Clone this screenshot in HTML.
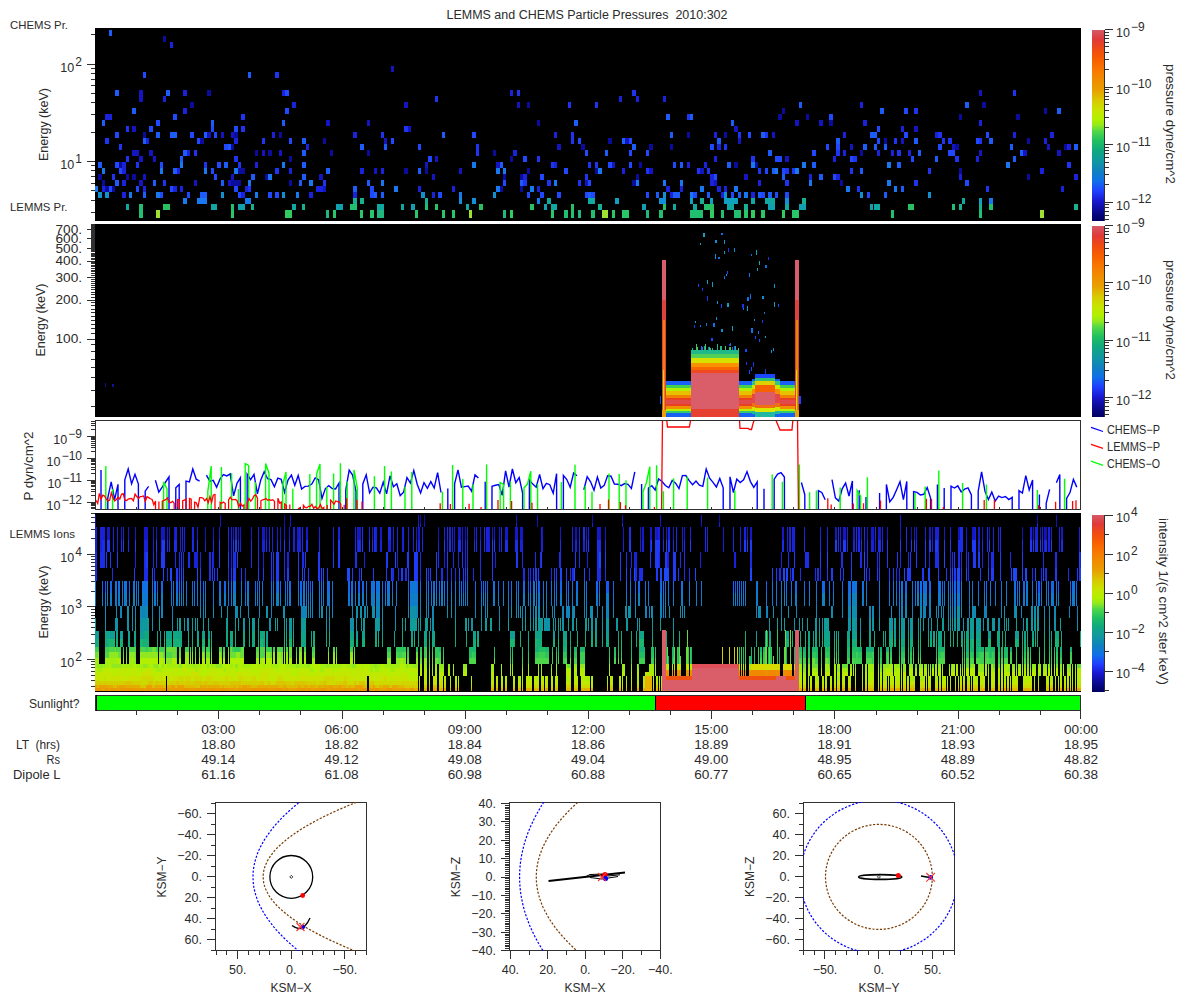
<!DOCTYPE html>
<html><head><meta charset="utf-8"><style>html,body{margin:0;padding:0;background:#fff;}svg{display:block;font-family:"Liberation Sans",sans-serif}</style></head>
<body><svg width="1200" height="1000" viewBox="0 0 1200 1000" font-family="Liberation Sans, sans-serif" shape-rendering="crispEdges">
<defs>
<linearGradient id="cm" x1="0" y1="0" x2="0" y2="1"><stop offset="0.000" stop-color="#d65a66"/><stop offset="0.050" stop-color="#e03a3a"/><stop offset="0.105" stop-color="#f04c10"/><stop offset="0.158" stop-color="#f86000"/><stop offset="0.210" stop-color="#f87800"/><stop offset="0.260" stop-color="#f08c00"/><stop offset="0.316" stop-color="#e8a000"/><stop offset="0.368" stop-color="#d8c800"/><stop offset="0.420" stop-color="#c8e400"/><stop offset="0.470" stop-color="#b0f000"/><stop offset="0.500" stop-color="#90e820"/><stop offset="0.530" stop-color="#50d848"/><stop offset="0.580" stop-color="#20c060"/><stop offset="0.632" stop-color="#10a880"/><stop offset="0.684" stop-color="#1098a0"/><stop offset="0.740" stop-color="#1080c0"/><stop offset="0.790" stop-color="#1070e8"/><stop offset="0.842" stop-color="#2040ff"/><stop offset="0.895" stop-color="#1818d0"/><stop offset="0.950" stop-color="#0a0a90"/><stop offset="1.000" stop-color="#000060"/></linearGradient>
<clipPath id="p3clip"><rect x="96" y="421" width="984" height="88"/></clipPath>
</defs>
<rect x="0" y="0" width="1200" height="1000" fill="#ffffff"/>
<text x="587" y="19" font-size="12.5" text-anchor="middle" textLength="281" lengthAdjust="spacingAndGlyphs" fill="#2b2b2b" xml:space="preserve">LEMMS and CHEMS Particle Pressures  2010:302</text>
<rect x="95" y="28" width="986" height="193" fill="#000"/>
<rect x="95" y="224" width="986" height="193" fill="#000"/>
<rect x="95" y="513" width="986" height="179" fill="#000"/><path fill="#1878f0" d="M95 186h3v6h-3zM102 168h3v6h-3zM129 192h3v6h-3zM156 192h4v6h-4zM160 168h3v6h-3zM180 162h3v6h-3zM204 168h3v6h-3zM234 168h4v6h-4zM248 180h3v6h-3zM255 192h3v6h-3zM268 174h4v6h-4zM282 162h3v6h-3zM296 192h3v6h-3zM309 180h4v6h-4zM381 180h3v6h-3zM394 186h4v6h-4zM459 192h3v6h-3zM472 162h4v6h-4zM496 186h4v6h-4zM496 168h4v6h-4zM503 168h3v6h-3zM530 186h4v6h-4zM554 180h3v6h-3zM598 168h4v6h-4zM636 180h3v6h-3zM663 180h3v6h-3zM680 180h3v6h-3zM690 192h3v6h-3zM700 186h4v6h-4zM734 186h4v6h-4zM744 192h4v6h-4zM751 162h4v6h-4zM775 168h3v6h-3zM795 168h4v6h-4zM802 162h4v6h-4zM809 180h3v6h-3zM846 186h4v6h-4zM887 180h4v6h-4zM887 162h4v6h-4zM894 186h3v6h-3zM1006 162h4v6h-4zM183 198h4v6h-4zM197 198h10v6h-10zM245 198h6v6h-6zM537 198h3v6h-3zM989 198h4v6h-4z"/>
<path fill="#1090d0" d="M98 192h4v6h-4zM105 192h4v6h-4zM221 192h3v6h-3zM282 192h3v6h-3zM421 192h4v6h-4zM493 192h3v6h-3zM663 192h3v6h-3zM724 192h3v6h-3zM860 192h3v6h-3zM928 192h3v6h-3z"/>
<path fill="#0c0c9c" d="M98 174h4v6h-4zM102 180h3v6h-3zM105 186h4v6h-4zM112 186h3v6h-3zM119 162h3v6h-3zM126 174h3v6h-3zM132 174h4v6h-4zM143 132h3v6h-3zM163 36h3v6h-3zM190 102h4v6h-4zM200 138h4v6h-4zM207 90h4v6h-4zM231 180h3v6h-3zM231 144h3v6h-3zM234 180h4v6h-4zM234 132h4v6h-4zM238 180h3v6h-3zM238 168h3v6h-3zM241 168h4v6h-4zM255 150h3v6h-3zM265 174h3v6h-3zM268 150h4v6h-4zM279 132h3v6h-3zM289 180h3v6h-3zM289 156h3v6h-3zM323 138h3v6h-3zM330 150h3v6h-3zM367 150h3v6h-3zM404 168h4v6h-4zM425 168h3v6h-3zM493 150h3v6h-3zM500 186h3v6h-3zM503 174h3v6h-3zM510 156h3v6h-3zM520 186h3v6h-3zM520 174h3v6h-3zM527 168h3v6h-3zM527 102h3v6h-3zM537 120h3v6h-3zM581 144h4v6h-4zM595 168h3v6h-3zM608 138h4v6h-4zM632 180h4v6h-4zM636 174h3v6h-3zM639 162h3v6h-3zM649 144h4v6h-4zM670 144h3v6h-3zM687 132h3v6h-3zM724 132h3v6h-3zM734 162h4v6h-4zM755 162h3v6h-3zM778 114h4v6h-4zM782 108h3v6h-3zM806 114h3v6h-3zM829 120h4v6h-4zM840 180h3v6h-3zM860 150h3v6h-3zM884 138h3v6h-3zM955 144h4v6h-4zM959 168h3v6h-3zM959 114h3v6h-3zM982 102h4v6h-4zM1016 114h4v6h-4zM1027 174h3v6h-3zM1027 138h3v6h-3zM1044 108h3v6h-3zM1064 144h3v6h-3z"/>
<path fill="#1c5cf8" d="M98 162h4v6h-4zM102 120h3v6h-3zM109 30h3v6h-3zM115 180h4v6h-4zM115 90h4v6h-4zM132 108h4v6h-4zM143 192h3v6h-3zM143 138h3v6h-3zM153 180h3v6h-3zM156 132h4v6h-4zM166 90h4v6h-4zM170 132h3v6h-3zM173 168h4v6h-4zM173 132h4v6h-4zM180 156h3v6h-3zM183 150h4v6h-4zM200 192h4v6h-4zM204 192h3v6h-3zM204 132h3v6h-3zM211 120h3v6h-3zM221 180h3v6h-3zM224 162h4v6h-4zM228 144h3v6h-3zM248 72h3v6h-3zM251 174h4v6h-4zM282 120h3v6h-3zM299 180h3v6h-3zM302 174h4v6h-4zM302 162h4v6h-4zM302 150h4v6h-4zM302 138h4v6h-4zM326 168h4v6h-4zM353 186h4v6h-4zM360 144h4v6h-4zM367 180h3v6h-3zM374 192h3v6h-3zM381 192h3v6h-3zM384 144h3v6h-3zM418 168h3v6h-3zM442 132h3v6h-3zM500 162h3v6h-3zM520 180h3v6h-3zM574 120h4v6h-4zM588 192h3v6h-3zM605 150h3v6h-3zM622 138h3v6h-3zM632 144h4v6h-4zM656 192h3v6h-3zM666 114h4v6h-4zM670 132h3v6h-3zM673 192h3v6h-3zM676 192h4v6h-4zM680 162h3v6h-3zM690 114h3v6h-3zM707 192h3v6h-3zM717 138h4v6h-4zM727 162h4v6h-4zM731 120h3v6h-3zM738 192h3v6h-3zM758 192h3v6h-3zM761 132h4v6h-4zM768 192h4v6h-4zM768 150h4v6h-4zM772 168h3v6h-3zM782 174h3v6h-3zM799 102h3v6h-3zM812 162h4v6h-4zM819 174h4v6h-4zM836 138h4v6h-4zM860 168h3v6h-3zM863 144h4v6h-4zM870 132h4v6h-4zM874 144h3v6h-3zM874 132h3v6h-3zM880 108h4v6h-4zM884 192h3v6h-3zM884 144h3v6h-3zM897 162h4v6h-4zM901 186h3v6h-3zM914 138h4v6h-4zM918 150h3v6h-3zM935 156h3v6h-3zM965 102h4v6h-4zM989 138h4v6h-4zM1010 144h3v6h-3zM1013 156h3v6h-3zM1020 150h3v6h-3zM1057 108h4v6h-4zM1074 144h4v6h-4z"/>
<path fill="#1a22dc" d="M102 186h3v6h-3zM105 114h4v6h-4zM109 114h3v6h-3zM122 192h4v6h-4zM122 180h4v6h-4zM122 168h4v6h-4zM122 162h4v6h-4zM143 186h3v6h-3zM146 138h3v6h-3zM163 96h3v6h-3zM170 42h3v6h-3zM173 186h4v6h-4zM177 168h3v6h-3zM180 186h3v6h-3zM183 108h4v6h-4zM183 90h4v6h-4zM187 150h3v6h-3zM234 138h4v6h-4zM241 192h4v6h-4zM245 186h3v6h-3zM255 162h3v6h-3zM272 132h3v6h-3zM282 90h3v6h-3zM289 168h3v6h-3zM292 102h4v6h-4zM306 144h3v6h-3zM309 192h4v6h-4zM316 186h3v6h-3zM319 186h4v6h-4zM353 192h4v6h-4zM353 132h4v6h-4zM360 168h4v6h-4zM381 168h3v6h-3zM418 186h3v6h-3zM432 192h3v6h-3zM452 186h3v6h-3zM510 90h3v6h-3zM513 150h4v6h-4zM523 174h4v6h-4zM537 186h3v6h-3zM554 162h3v6h-3zM554 132h3v6h-3zM619 96h3v6h-3zM622 168h3v6h-3zM636 96h3v6h-3zM663 96h3v6h-3zM666 186h4v6h-4zM670 192h3v6h-3zM680 186h3v6h-3zM687 162h3v6h-3zM704 162h3v6h-3zM710 180h4v6h-4zM710 174h4v6h-4zM714 156h3v6h-3zM714 132h3v6h-3zM717 186h4v6h-4zM717 144h4v6h-4zM721 192h3v6h-3zM724 186h3v6h-3zM751 192h4v6h-4zM758 180h3v6h-3zM809 174h3v6h-3zM833 156h3v6h-3zM836 174h4v6h-4zM843 150h3v6h-3zM843 132h3v6h-3zM860 102h3v6h-3zM863 120h4v6h-4zM877 150h3v6h-3zM891 150h3v6h-3zM901 126h3v6h-3zM908 150h3v6h-3zM935 132h3v6h-3zM959 174h3v6h-3zM976 156h3v6h-3zM979 120h3v6h-3zM1013 132h3v6h-3zM1040 168h4v6h-4zM1044 138h3v6h-3zM1050 132h4v6h-4zM1061 186h3v6h-3zM1067 144h4v6h-4zM1074 174h4v6h-4z"/>
<path fill="#1e34f0" d="M105 138h4v6h-4zM112 174h3v6h-3zM119 144h3v6h-3zM126 156h3v6h-3zM126 126h3v6h-3zM136 162h3v6h-3zM163 180h3v6h-3zM194 150h3v6h-3zM204 162h3v6h-3zM234 156h4v6h-4zM238 162h3v6h-3zM241 126h4v6h-4zM241 114h4v6h-4zM248 186h3v6h-3zM262 138h3v6h-3zM275 168h4v6h-4zM275 72h4v6h-4zM323 180h3v6h-3zM381 132h3v6h-3zM404 126h4v6h-4zM435 96h3v6h-3zM476 150h3v6h-3zM476 144h3v6h-3zM517 90h3v6h-3zM523 180h4v6h-4zM537 156h3v6h-3zM547 180h4v6h-4zM551 162h3v6h-3zM568 102h3v6h-3zM571 138h3v6h-3zM571 132h3v6h-3zM578 180h3v6h-3zM585 174h3v6h-3zM588 162h3v6h-3zM595 162h3v6h-3zM595 102h3v6h-3zM632 90h4v6h-4zM646 168h3v6h-3zM687 114h3v6h-3zM697 168h3v6h-3zM707 168h3v6h-3zM724 144h3v6h-3zM738 132h3v6h-3zM751 156h4v6h-4zM758 168h3v6h-3zM765 132h3v6h-3zM785 180h4v6h-4zM785 168h4v6h-4zM792 168h3v6h-3zM836 150h4v6h-4zM850 168h3v6h-3zM853 156h4v6h-4zM857 186h3v6h-3zM894 138h3v6h-3zM897 150h4v6h-4zM914 180h4v6h-4zM914 108h4v6h-4zM928 168h3v6h-3zM938 132h4v6h-4zM942 138h3v6h-3zM948 138h4v6h-4zM955 156h4v6h-4zM979 138h3v6h-3zM986 186h3v6h-3zM1013 90h3v6h-3zM1067 162h4v6h-4z"/>
<path fill="#2048ff" d="M109 186h3v6h-3zM115 162h4v6h-4zM115 132h4v6h-4zM119 168h3v6h-3zM136 186h3v6h-3zM143 72h3v6h-3zM149 126h4v6h-4zM156 120h4v6h-4zM160 192h3v6h-3zM160 162h3v6h-3zM170 186h3v6h-3zM173 114h4v6h-4zM187 192h3v6h-3zM190 132h4v6h-4zM197 138h3v6h-3zM211 168h3v6h-3zM211 126h3v6h-3zM214 174h3v6h-3zM214 132h3v6h-3zM217 162h4v6h-4zM224 144h4v6h-4zM234 186h4v6h-4zM234 126h4v6h-4zM238 192h3v6h-3zM268 192h4v6h-4zM275 192h4v6h-4zM285 108h4v6h-4zM285 90h4v6h-4zM289 138h3v6h-3zM370 192h4v6h-4zM370 186h4v6h-4zM391 138h3v6h-3zM418 144h3v6h-3zM428 156h4v6h-4zM438 192h4v6h-4zM472 132h4v6h-4zM503 180h3v6h-3zM523 156h4v6h-4zM527 192h3v6h-3zM540 192h4v6h-4zM540 174h4v6h-4zM557 192h4v6h-4zM564 168h4v6h-4zM578 138h3v6h-3zM585 192h3v6h-3zM585 150h3v6h-3zM588 180h3v6h-3zM591 192h4v6h-4zM608 162h4v6h-4zM629 162h3v6h-3zM629 150h3v6h-3zM629 138h3v6h-3zM646 192h3v6h-3zM646 150h3v6h-3zM673 162h3v6h-3zM693 192h4v6h-4zM710 144h4v6h-4zM714 174h3v6h-3zM731 192h3v6h-3zM748 132h3v6h-3zM761 192h4v6h-4zM765 168h3v6h-3zM775 192h3v6h-3zM775 156h3v6h-3zM778 156h4v6h-4zM782 168h3v6h-3zM785 192h4v6h-4zM812 150h4v6h-4zM826 144h3v6h-3zM829 114h4v6h-4zM833 174h3v6h-3zM836 144h4v6h-4zM850 156h3v6h-3zM867 192h3v6h-3zM877 138h3v6h-3zM877 126h3v6h-3zM904 132h4v6h-4zM904 108h4v6h-4zM911 156h3v6h-3zM938 144h4v6h-4zM948 150h4v6h-4zM952 150h3v6h-3zM965 180h4v6h-4zM976 138h3v6h-3zM986 132h3v6h-3z"/>
<path fill="#1414c0" d="M132 150h4v6h-4zM132 126h4v6h-4zM136 150h3v6h-3zM139 180h4v6h-4zM139 156h4v6h-4zM139 96h4v6h-4zM139 90h4v6h-4zM143 174h3v6h-3zM149 150h4v6h-4zM153 156h3v6h-3zM194 180h3v6h-3zM207 132h4v6h-4zM221 132h3v6h-3zM228 180h3v6h-3zM231 174h3v6h-3zM231 132h3v6h-3zM262 150h3v6h-3zM279 150h3v6h-3zM319 174h4v6h-4zM323 186h3v6h-3zM326 120h4v6h-4zM367 120h3v6h-3zM374 168h3v6h-3zM384 138h3v6h-3zM391 66h3v6h-3zM404 102h4v6h-4zM408 126h3v6h-3zM425 162h3v6h-3zM432 174h3v6h-3zM435 156h3v6h-3zM459 168h3v6h-3zM496 162h4v6h-4zM517 102h3v6h-3zM557 144h4v6h-4zM585 180h3v6h-3zM612 162h3v6h-3zM625 138h4v6h-4zM649 168h4v6h-4zM700 168h4v6h-4zM714 180h3v6h-3zM734 126h4v6h-4zM738 138h3v6h-3zM744 174h4v6h-4zM772 132h3v6h-3zM785 156h4v6h-4zM795 120h4v6h-4zM819 120h4v6h-4zM850 144h3v6h-3zM901 138h3v6h-3zM914 126h4v6h-4zM952 144h3v6h-3zM979 150h3v6h-3zM979 90h3v6h-3zM1023 150h4v6h-4zM1047 144h3v6h-3zM1057 150h4v6h-4z"/>
<path fill="#20c070" d="M139 210h4v8h-4zM564 210h4v8h-4zM571 210h3v8h-3zM591 210h4v8h-4zM659 210h4v8h-4zM690 210h10v8h-10zM700 210h3v8h-3zM721 210h3v8h-3zM734 210h7v8h-7zM891 210h3v8h-3zM979 210h3v8h-3zM139 204h4v6h-4zM231 204h3v6h-3zM350 204h7v6h-7zM425 204h3v6h-3zM704 204h3v6h-3zM952 204h3v6h-3zM989 204h4v6h-4z"/>
<path fill="#a0e030" d="M156 210h4v8h-4zM469 210h3v8h-3zM602 210h6v8h-6zM1040 210h4v8h-4z"/>
<path fill="#28c868" d="M231 210h3v8h-3zM333 210h3v8h-3zM360 210h3v8h-3zM370 210h4v8h-4zM415 210h3v8h-3zM442 210h3v8h-3zM452 210h3v8h-3zM551 210h3v8h-3zM612 210h3v8h-3zM622 210h7v8h-7zM744 210h4v8h-4zM761 210h4v8h-4zM792 210h7v8h-7z"/>
<path fill="#30cc60" d="M285 210h7v8h-7zM510 210h3v8h-3zM710 210h4v8h-4zM751 210h4v8h-4zM782 210h3v8h-3z"/>
<path fill="#20b880" d="M326 210h3v8h-3zM377 210h7v8h-7zM503 210h3v8h-3zM578 210h3v8h-3zM646 210h3v8h-3z"/>
<path fill="#10a8a0" d="M126 204h3v6h-3zM211 204h6v6h-6zM292 204h4v6h-4zM377 204h7v6h-7zM401 204h3v6h-3zM466 204h3v6h-3zM551 204h6v6h-6zM673 204h3v6h-3zM693 204h4v6h-4zM727 204h7v6h-7zM785 204h4v6h-4zM874 204h6v6h-6zM547 198h4v6h-4zM588 198h7v6h-7zM751 198h4v6h-4zM765 198h10v6h-10zM962 198h3v6h-3z"/>
<path fill="#28c060" d="M163 204h7v6h-7zM435 204h3v6h-3zM479 204h4v6h-4zM530 204h4v6h-4zM571 204h3v6h-3zM663 204h3v6h-3zM707 204h7v6h-7zM908 204h6v6h-6z"/>
<path fill="#10a0b0" d="M238 204h7v6h-7zM336 204h7v6h-7zM411 204h4v6h-4zM544 204h3v6h-3zM642 204h4v6h-4zM768 204h7v6h-7zM799 204h7v6h-7zM870 204h3v6h-3z"/>
<path fill="#18b090" d="M251 204h3v6h-3zM302 204h3v6h-3zM598 204h4v6h-4zM744 204h4v6h-4zM959 204h3v6h-3zM979 204h3v6h-3zM1074 204h4v6h-4zM353 198h4v6h-4zM360 198h4v6h-4zM425 198h3v6h-3zM700 198h4v6h-4zM802 198h4v6h-4z"/>
<path fill="#1090d8" d="M459 198h3v6h-3zM472 198h4v6h-4zM659 198h7v6h-7zM785 198h4v6h-4z"/>
<path fill="#10a0c0" d="M615 198h4v6h-4zM690 198h3v6h-3zM710 198h3v6h-3zM724 198h14v6h-14zM979 198h3v6h-3z"/>
<path fill="#10109a" d="M105 383h1v4h-1zM112 384h2v3h-2z"/>
<path fill="#1848ff" d="M755 336h1v3h-1zM721 304h1v4h-1z"/>
<path fill="#1070e8" d="M724 276h1v3h-1zM721 233h2v2h-2z"/>
<path fill="#2030f0" d="M765 369h1v5h-1z"/>
<path fill="#1070e8" d="M758 331h1v3h-1z"/>
<path fill="#1090d0" d="M773 348h1v3h-1z"/>
<path fill="#1070e8" d="M750 294h1v5h-1z"/>
<path fill="#1848ff" d="M778 304h1v3h-1z"/>
<path fill="#2030f0" d="M694 325h1v3h-1z"/>
<path fill="#10a0c0" d="M765 336h1v2h-1zM759 261h1v4h-1z"/>
<path fill="#1090d0" d="M726 274h1v2h-1z"/>
<path fill="#1070e8" d="M730 343h1v3h-1zM764 312h1v2h-1zM700 325h1v2h-1z"/>
<path fill="#1090d0" d="M724 251h1v3h-1z"/>
<path fill="#1070e8" d="M751 254h1v2h-1z"/>
<path fill="#1090d0" d="M717 301h1v3h-1z"/>
<path fill="#2030f0" d="M742 304h2v4h-2zM707 296h1v5h-1zM768 257h1v3h-1zM743 305h1v5h-1z"/>
<path fill="#1070e8" d="M743 308h1v2h-1z"/>
<path fill="#1090d0" d="M774 284h1v4h-1z"/>
<path fill="#1070e8" d="M749 273h1v4h-1zM747 297h2v4h-2z"/>
<path fill="#10a0c0" d="M695 321h1v2h-1zM774 302h1v5h-1z"/>
<path fill="#1090d0" d="M716 317h1v3h-1zM715 240h2v3h-2z"/>
<path fill="#10a0c0" d="M732 326h1v5h-1z"/>
<path fill="#1090d0" d="M721 329h2v3h-2z"/>
<path fill="#10a0c0" d="M707 280h1v4h-1zM703 233h2v4h-2z"/>
<path fill="#1090d0" d="M724 240h1v4h-1z"/>
<path fill="#1848ff" d="M759 339h1v3h-1zM727 271h1v3h-1z"/>
<path fill="#10a0c0" d="M757 268h1v3h-1z"/>
<path fill="#2030f0" d="M753 362h1v5h-1z"/>
<path fill="#1090d0" d="M771 350h1v3h-1z"/>
<path fill="#2030f0" d="M702 288h1v3h-1z"/>
<path fill="#1848ff" d="M745 349h2v3h-2z"/>
<path fill="#1070e8" d="M751 328h2v5h-2z"/>
<path fill="#1848ff" d="M749 370h1v4h-1z"/>
<path fill="#1070e8" d="M718 257h2v2h-2z"/>
<path fill="#1848ff" d="M711 338h2v3h-2z"/>
<path fill="#10a0c0" d="M756 250h1v5h-1z"/>
<path fill="#1090d0" d="M734 248h1v4h-1z"/>
<path fill="#1848ff" d="M698 284h1v3h-1z"/>
<path fill="#10a0c0" d="M727 303h2v4h-2z"/>
<path fill="#2030f0" d="M762 320h1v3h-1z"/>
<path fill="#1090d0" d="M754 319h1v2h-1z"/>
<path fill="#10a0c0" d="M712 282h1v5h-1z"/>
<path fill="#1090d0" d="M715 254h1v5h-1z"/>
<path fill="#2030f0" d="M728 248h1v4h-1zM729 344h1v2h-1z"/>
<path fill="#1090d0" d="M762 296h2v3h-2z"/>
<path fill="#10a0c0" d="M700 243h1v2h-1z"/>
<path fill="#1070e8" d="M713 323h2v4h-2z"/>
<path fill="#2030f0" d="M746 362h1v3h-1z"/>
<path fill="#1070e8" d="M706 323h1v3h-1zM765 265h2v3h-2z"/>
<path fill="#10a0c0" d="M747 306h1v5h-1z"/>
<path fill="#1848ff" d="M751 367h1v4h-1z"/>
<path fill="#1a60f8" d="M666 381h25v4h-25z"/>
<path fill="#40d050" d="M666 385h25v3h-25z"/>
<path fill="#b0f000" d="M666 388h25v3h-25z"/>
<path fill="#e8c000" d="M666 391h25v4h-25z"/>
<path fill="#f08000" d="M666 395h25v3h-25z"/>
<path fill="#e84020" d="M666 398h25v2h-25z"/>
<path fill="#e04a4a" d="M666 400h25v4h-25z"/>
<path fill="#e84020" d="M666 404h25v2h-25z"/>
<path fill="#f09000" d="M666 406h25v3h-25z"/>
<path fill="#b8f000" d="M666 409h25v2h-25z"/>
<path fill="#30c870" d="M666 411h25v2h-25z"/>
<path fill="#1860f0" d="M666 413h25v4h-25z"/>
<path fill="#1a60f8" d="M739 381h13v4h-13z"/>
<path fill="#40d050" d="M739 385h13v3h-13z"/>
<path fill="#b0f000" d="M739 388h13v3h-13z"/>
<path fill="#e8c000" d="M739 391h13v4h-13z"/>
<path fill="#f08000" d="M739 395h13v3h-13z"/>
<path fill="#e84020" d="M739 398h13v2h-13z"/>
<path fill="#e04a4a" d="M739 400h13v4h-13z"/>
<path fill="#e84020" d="M739 404h13v2h-13z"/>
<path fill="#f09000" d="M739 406h13v3h-13z"/>
<path fill="#b8f000" d="M739 409h13v2h-13z"/>
<path fill="#30c870" d="M739 411h13v2h-13z"/>
<path fill="#1860f0" d="M739 413h13v4h-13z"/>
<path fill="#1a60f8" d="M780 381h15v4h-15z"/>
<path fill="#40d050" d="M780 385h15v3h-15z"/>
<path fill="#b0f000" d="M780 388h15v3h-15z"/>
<path fill="#e8c000" d="M780 391h15v4h-15z"/>
<path fill="#f08000" d="M780 395h15v3h-15z"/>
<path fill="#e84020" d="M780 398h15v2h-15z"/>
<path fill="#e04a4a" d="M780 400h15v4h-15z"/>
<path fill="#e84020" d="M780 404h15v2h-15z"/>
<path fill="#f09000" d="M780 406h15v3h-15z"/>
<path fill="#b8f000" d="M780 409h15v2h-15z"/>
<path fill="#30c870" d="M780 411h15v2h-15z"/>
<path fill="#1860f0" d="M780 413h15v4h-15z"/>
<path fill="#20b888" d="M691 350h48v4h-48z"/>
<path fill="#50d058" d="M691 354h48v4h-48z"/>
<path fill="#d8e000" d="M691 358h48v5h-48z"/>
<path fill="#f89000" d="M691 363h48v4h-48z"/>
<path fill="#f86800" d="M691 367h48v3h-48z"/>
<path fill="#f04820" d="M691 370h48v3h-48z"/>
<path fill="#d95e6a" d="M691 373h48v36h-48z"/>
<path fill="#e84030" d="M691 409h48v8h-48z"/>
<path fill="#20b888" d="M692 348h1v2h-1z"/>
<path fill="#40c860" d="M696 344h1v6h-1zM697 347h1v3h-1z"/>
<path fill="#1870f0" d="M701 346h1v4h-1zM702 347h1v3h-1z"/>
<path fill="#20b888" d="M704 346h1v4h-1z"/>
<path fill="#40c860" d="M705 344h1v6h-1z"/>
<path fill="#1870f0" d="M708 347h1v3h-1z"/>
<path fill="#40c860" d="M709 347h1v3h-1z"/>
<path fill="#20b888" d="M710 348h1v2h-1zM712 348h1v2h-1zM717 344h1v6h-1zM720 346h1v4h-1zM721 346h1v4h-1z"/>
<path fill="#40c860" d="M725 346h1v4h-1z"/>
<path fill="#20b888" d="M729 347h1v3h-1z"/>
<path fill="#40c860" d="M730 347h1v3h-1z"/>
<path fill="#1870f0" d="M732 347h1v3h-1zM734 346h1v4h-1z"/>
<path fill="#20b888" d="M735 346h1v4h-1z"/>
<path fill="#40c860" d="M738 348h1v2h-1z"/>
<path fill="#1860f0" d="M752 379h3v2h-3z"/>
<path fill="#30c880" d="M752 381h3v4h-3z"/>
<path fill="#c8e800" d="M752 385h3v4h-3z"/>
<path fill="#f89000" d="M752 389h3v5h-3z"/>
<path fill="#e44848" d="M752 394h3v9h-3z"/>
<path fill="#f07010" d="M752 403h3v4h-3z"/>
<path fill="#d0e800" d="M752 407h3v4h-3z"/>
<path fill="#20b8a0" d="M752 411h3v3h-3z"/>
<path fill="#1860f0" d="M752 414h3v3h-3zM775 379h5v2h-5z"/>
<path fill="#30c880" d="M775 381h5v4h-5z"/>
<path fill="#c8e800" d="M775 385h5v4h-5z"/>
<path fill="#f89000" d="M775 389h5v5h-5z"/>
<path fill="#e44848" d="M775 394h5v9h-5z"/>
<path fill="#f07010" d="M775 403h5v4h-5z"/>
<path fill="#d0e800" d="M775 407h5v4h-5z"/>
<path fill="#20b8a0" d="M775 411h5v3h-5z"/>
<path fill="#1860f0" d="M775 414h5v3h-5z"/>
<path fill="#1848ff" d="M755 374h20v4h-20z"/>
<path fill="#30c070" d="M755 378h20v3h-20z"/>
<path fill="#e0d000" d="M755 381h20v4h-20z"/>
<path fill="#f86000" d="M755 385h20v7h-20z"/>
<path fill="#d95e6a" d="M755 392h20v13h-20z"/>
<path fill="#f07010" d="M755 405h20v3h-20z"/>
<path fill="#d8e800" d="M755 408h20v4h-20z"/>
<path fill="#20b8a0" d="M755 412h20v5h-20z"/>
<path fill="#d95e6a" d="M662 260h4v120h-4z"/>
<path fill="#e04040" d="M662 300h4v110h-4z"/>
<path fill="#f08000" d="M663 320h2v90h-2z"/>
<path fill="#d8e000" d="M663 370h1v47h-1z"/>
<path fill="#f0a000" d="M662 410h4v7h-4z"/>
<path fill="#1848ff" d="M660 396h1v8h-1z"/>
<path fill="#d95e6a" d="M795 260h4v120h-4z"/>
<path fill="#e04040" d="M795 300h4v110h-4z"/>
<path fill="#f08000" d="M796 320h2v90h-2z"/>
<path fill="#d8e000" d="M796 370h1v47h-1z"/>
<path fill="#f0a000" d="M795 410h4v7h-4z"/>
<path fill="#1848ff" d="M799 396h2v8h-2z"/>
<path fill="#c9e200" d="M95 676h3v5h-3zM111 676h2v5h-2zM113 676h3v5h-3zM116 676h6v5h-6zM122 676h2v5h-2zM128 676h6v5h-6zM134 676h1v5h-1zM135 676h6v5h-6zM162 676h3v5h-3zM172 676h2v5h-2zM174 676h1v5h-1zM175 676h3v5h-3zM191 676h4v5h-4zM198 676h1v5h-1zM202 676h4v5h-4zM212 676h1v5h-1zM213 676h2v5h-2zM219 676h4v5h-4zM223 676h2v5h-2zM228 676h3v5h-3zM231 676h2v5h-2zM237 676h2v5h-2zM243 676h1v5h-1zM244 676h1v5h-1zM246 676h6v5h-6zM258 676h4v5h-4zM262 676h6v5h-6zM290 676h4v5h-4zM298 676h3v5h-3zM301 676h2v5h-2zM303 676h1v5h-1zM304 676h4v5h-4zM308 676h4v5h-4zM312 676h3v5h-3zM315 676h3v5h-3zM318 676h6v5h-6zM335 676h3v5h-3zM338 676h6v5h-6zM347 676h3v5h-3zM351 676h4v5h-4zM369 676h4v5h-4zM380 676h4v5h-4zM386 676h2v5h-2zM388 676h3v5h-3zM394 676h3v5h-3zM398 676h6v5h-6zM405 676h3v5h-3zM405 681h1v4h-1zM409 681h1v4h-1zM424 681h3v4h-3zM429 681h1v4h-1zM433 681h4v4h-4zM439 681h1v4h-1zM445 681h1v4h-1zM450 681h1v4h-1zM458 681h1v4h-1zM491 681h1v4h-1zM496 681h2v4h-2zM505 681h2v4h-2zM514 681h1v4h-1zM522 681h1v4h-1zM526 681h4v4h-4zM541 681h3v4h-3zM547 681h1v4h-1zM567 681h4v4h-4zM610 681h3v4h-3zM626 681h1v4h-1zM643 681h3v4h-3zM647 681h2v4h-2zM653 681h1v4h-1zM659 681h1v4h-1zM799 681h3v4h-3zM815 681h1v4h-1zM816 681h1v4h-1zM837 681h3v4h-3zM842 681h3v4h-3zM848 681h3v4h-3zM865 681h1v4h-1zM866 681h1v4h-1zM868 681h3v4h-3zM871 681h3v4h-3zM883 681h4v4h-4zM901 681h1v4h-1zM907 681h1v4h-1zM914 681h1v4h-1zM920 681h5v4h-5zM926 681h1v4h-1zM935 681h3v4h-3zM958 681h1v4h-1zM960 681h2v4h-2zM963 681h2v4h-2zM967 681h3v4h-3zM971 681h1v4h-1zM1001 681h2v4h-2zM1007 681h2v4h-2zM1016 681h2v4h-2zM1029 681h3v4h-3zM1034 681h1v4h-1zM1038 681h1v4h-1zM1055 681h1v4h-1zM1064 681h2v4h-2zM518 685h1v3h-1zM552 685h1v3h-1zM591 685h2v3h-2zM643 685h3v3h-3zM936 685h1v3h-1zM950 685h1v3h-1zM983 685h1v3h-1zM991 685h2v3h-2zM143 672h6v4h-6zM149 672h2v4h-2zM191 672h4v4h-4zM195 672h4v4h-4zM229 672h2v4h-2zM238 672h4v4h-4zM261 672h6v4h-6zM287 672h1v4h-1zM298 672h2v4h-2zM333 672h1v4h-1zM361 672h2v4h-2zM367 672h1v4h-1z"/>
<path fill="#c2e700" d="M98 676h6v5h-6zM105 676h2v5h-2zM107 676h4v5h-4zM124 676h4v5h-4zM154 676h1v5h-1zM155 676h6v5h-6zM165 676h1v5h-1zM169 676h3v5h-3zM184 676h1v5h-1zM215 676h4v5h-4zM233 676h4v5h-4zM256 676h2v5h-2zM268 676h4v5h-4zM272 676h4v5h-4zM276 676h1v5h-1zM283 676h6v5h-6zM289 676h1v5h-1zM294 676h4v5h-4zM350 676h1v5h-1zM355 676h2v5h-2zM357 676h6v5h-6zM363 676h4v5h-4zM373 676h4v5h-4zM377 676h3v5h-3zM424 676h3v5h-3zM429 676h1v5h-1zM433 676h4v5h-4zM444 676h2v5h-2zM444 681h1v4h-1zM455 681h2v4h-2zM471 681h1v4h-1zM492 681h2v4h-2zM501 681h1v4h-1zM502 681h1v4h-1zM518 681h3v4h-3zM530 681h2v4h-2zM534 681h5v4h-5zM551 681h2v4h-2zM555 681h1v4h-1zM556 681h2v4h-2zM566 681h1v4h-1zM574 681h3v4h-3zM577 681h1v4h-1zM581 681h2v4h-2zM583 681h6v4h-6zM589 681h1v4h-1zM591 681h2v4h-2zM607 681h1v4h-1zM619 681h2v4h-2zM622 681h1v4h-1zM637 681h2v4h-2zM656 681h2v4h-2zM803 681h3v4h-3zM808 681h1v4h-1zM810 681h2v4h-2zM817 681h2v4h-2zM834 681h2v4h-2zM855 681h1v4h-1zM888 681h1v4h-1zM895 681h5v4h-5zM903 681h3v4h-3zM908 681h1v4h-1zM910 681h1v4h-1zM911 681h3v4h-3zM928 681h3v4h-3zM939 681h2v4h-2zM950 681h1v4h-1zM955 681h1v4h-1zM973 681h2v4h-2zM988 681h1v4h-1zM991 681h2v4h-2zM993 681h2v4h-2zM998 681h2v4h-2zM1004 681h1v4h-1zM1005 681h1v4h-1zM1010 681h1v4h-1zM1023 681h2v4h-2zM1025 681h4v4h-4zM1046 681h3v4h-3zM1050 681h3v4h-3zM1060 681h2v4h-2zM1067 681h2v4h-2zM1072 681h1v4h-1zM1075 681h1v4h-1zM112 668h1v4h-1zM145 668h6v4h-6zM184 668h4v4h-4zM191 668h4v4h-4zM263 668h6v4h-6zM269 668h3v4h-3zM318 668h1v4h-1zM328 668h4v4h-4zM356 668h1v4h-1zM364 668h3v4h-3zM99 672h6v4h-6zM105 672h2v4h-2zM107 672h2v4h-2zM109 672h4v4h-4zM119 672h3v4h-3zM134 672h1v4h-1zM141 672h2v4h-2zM151 672h1v4h-1zM159 672h1v4h-1zM163 672h1v4h-1zM168 672h4v4h-4zM185 672h3v4h-3zM199 672h1v4h-1zM206 672h4v4h-4zM210 672h6v4h-6zM216 672h2v4h-2zM234 672h4v4h-4zM242 672h2v4h-2zM245 672h1v4h-1zM246 672h6v4h-6zM255 672h2v4h-2zM267 672h1v4h-1zM268 672h3v4h-3zM274 672h3v4h-3zM277 672h6v4h-6zM283 672h1v4h-1zM286 672h1v4h-1zM288 672h4v4h-4zM300 672h1v4h-1zM302 672h3v4h-3zM305 672h3v4h-3zM316 672h4v4h-4zM326 672h2v4h-2zM331 672h1v4h-1zM332 672h1v4h-1zM334 672h6v4h-6zM340 672h4v4h-4zM344 672h4v4h-4zM348 672h3v4h-3zM372 672h2v4h-2zM378 672h3v4h-3zM381 672h1v4h-1zM394 672h3v4h-3zM397 672h1v4h-1zM401 672h6v4h-6zM825 672h4v4h-4zM886 672h6v4h-6zM905 672h1v4h-1zM926 672h1v4h-1zM1051 672h1v4h-1z"/>
<path fill="#ced900" d="M104 676h1v5h-1zM141 676h6v5h-6zM147 676h4v5h-4zM151 676h2v5h-2zM153 676h1v5h-1zM161 676h1v5h-1zM167 676h2v5h-2zM178 676h6v5h-6zM185 676h6v5h-6zM195 676h3v5h-3zM199 676h3v5h-3zM206 676h6v5h-6zM225 676h3v5h-3zM239 676h4v5h-4zM245 676h1v5h-1zM252 676h4v5h-4zM277 676h6v5h-6zM324 676h4v5h-4zM328 676h3v5h-3zM331 676h3v5h-3zM334 676h1v5h-1zM344 676h3v5h-3zM384 676h2v5h-2zM141 681h4v4h-4zM145 681h3v4h-3zM153 681h2v4h-2zM167 681h2v4h-2zM202 681h1v4h-1zM264 681h4v4h-4zM270 681h4v4h-4zM274 681h2v4h-2zM292 681h2v4h-2zM316 681h3v4h-3zM327 681h3v4h-3zM330 681h6v4h-6zM348 681h6v4h-6zM356 681h3v4h-3zM365 681h2v4h-2zM374 681h4v4h-4zM378 681h4v4h-4zM382 681h3v4h-3zM385 681h6v4h-6zM391 681h4v4h-4zM395 681h6v4h-6zM401 681h1v4h-1zM410 681h6v4h-6zM419 681h1v4h-1zM440 681h3v4h-3zM450 685h1v3h-1zM501 685h2v3h-2zM522 685h1v3h-1zM526 685h2v3h-2zM528 685h1v3h-1zM529 685h3v3h-3zM535 685h4v3h-4zM545 685h3v3h-3zM577 685h1v3h-1zM581 685h4v3h-4zM585 685h5v3h-5zM619 685h2v3h-2zM622 685h1v3h-1zM647 685h3v3h-3zM653 685h1v3h-1zM659 685h1v3h-1zM661 685h1v3h-1zM800 685h2v3h-2zM808 685h1v3h-1zM810 685h2v3h-2zM815 685h1v3h-1zM816 685h3v3h-3zM822 685h2v3h-2zM825 685h2v3h-2zM830 685h2v3h-2zM844 685h1v3h-1zM848 685h3v3h-3zM878 685h1v3h-1zM883 685h4v3h-4zM895 685h4v3h-4zM901 685h1v3h-1zM914 685h1v3h-1zM920 685h4v3h-4zM926 685h1v3h-1zM928 685h3v3h-3zM935 685h1v3h-1zM937 685h1v3h-1zM942 685h3v3h-3zM947 685h1v3h-1zM969 685h1v3h-1zM984 685h1v3h-1zM993 685h2v3h-2zM1001 685h2v3h-2zM1012 685h1v3h-1zM1023 685h4v3h-4zM1027 685h3v3h-3zM1030 685h2v3h-2zM1034 685h1v3h-1zM1055 685h1v3h-1zM1060 685h1v3h-1zM1061 685h1v3h-1zM1064 685h2v3h-2zM1070 685h1v3h-1zM1075 685h1v3h-1zM1077 685h3v3h-3z"/>
<path fill="#baeb00" d="M391 676h3v5h-3zM397 676h1v5h-1zM404 676h1v5h-1zM408 676h3v5h-3zM411 676h4v5h-4zM415 676h3v5h-3zM419 676h1v5h-1zM439 676h2v5h-2zM441 676h2v5h-2zM455 676h1v5h-1zM456 676h1v5h-1zM493 676h1v5h-1zM496 676h2v5h-2zM513 676h2v5h-2zM526 676h2v5h-2zM534 676h1v5h-1zM537 676h1v5h-1zM546 676h2v5h-2zM551 676h2v5h-2zM568 676h2v5h-2zM574 676h4v5h-4zM610 676h2v5h-2zM619 676h2v5h-2zM659 676h1v5h-1zM799 676h2v5h-2zM822 676h1v5h-1zM823 676h1v5h-1zM842 676h2v5h-2zM855 676h1v5h-1zM890 676h4v5h-4zM903 676h3v5h-3zM924 676h1v5h-1zM926 676h1v5h-1zM928 676h1v5h-1zM929 676h2v5h-2zM947 676h1v5h-1zM960 676h2v5h-2zM980 676h5v5h-5zM991 676h4v5h-4zM1001 676h2v5h-2zM1010 676h1v5h-1zM1046 676h2v5h-2zM1048 676h1v5h-1zM1055 676h1v5h-1zM1058 676h1v5h-1zM1060 676h1v5h-1zM1067 676h2v5h-2zM1070 676h1v5h-1zM1072 676h1v5h-1zM513 681h1v4h-1zM545 681h1v4h-1zM546 681h1v4h-1zM631 681h1v4h-1zM649 681h1v4h-1zM661 681h1v4h-1zM822 681h2v4h-2zM825 681h2v4h-2zM830 681h2v4h-2zM862 681h1v4h-1zM878 681h1v4h-1zM880 681h2v4h-2zM890 681h4v4h-4zM942 681h4v4h-4zM947 681h1v4h-1zM975 681h3v4h-3zM980 681h5v4h-5zM1012 681h4v4h-4zM1058 681h1v4h-1zM1070 681h1v4h-1zM1077 681h4v4h-4zM102 668h1v4h-1zM103 668h3v4h-3zM106 668h4v4h-4zM110 668h1v4h-1zM111 668h1v4h-1zM117 668h6v4h-6zM123 668h3v4h-3zM126 668h4v4h-4zM131 668h3v4h-3zM134 668h4v4h-4zM138 668h1v4h-1zM142 668h3v4h-3zM151 668h2v4h-2zM162 668h4v4h-4zM172 668h2v4h-2zM174 668h3v4h-3zM177 668h3v4h-3zM181 668h3v4h-3zM198 668h4v4h-4zM209 668h6v4h-6zM215 668h6v4h-6zM221 668h3v4h-3zM226 668h3v4h-3zM229 668h1v4h-1zM230 668h3v4h-3zM238 668h1v4h-1zM241 668h6v4h-6zM247 668h6v4h-6zM257 668h6v4h-6zM272 668h4v4h-4zM280 668h6v4h-6zM286 668h6v4h-6zM298 668h3v4h-3zM301 668h6v4h-6zM307 668h3v4h-3zM319 668h1v4h-1zM324 668h4v4h-4zM338 668h6v4h-6zM344 668h6v4h-6zM350 668h6v4h-6zM357 668h3v4h-3zM360 668h4v4h-4zM385 668h2v4h-2zM397 668h4v4h-4zM409 668h6v4h-6zM415 668h3v4h-3zM95 672h4v4h-4zM113 672h3v4h-3zM116 672h2v4h-2zM122 672h6v4h-6zM128 672h2v4h-2zM130 672h3v4h-3zM133 672h1v4h-1zM135 672h6v4h-6zM152 672h1v4h-1zM153 672h6v4h-6zM160 672h3v4h-3zM164 672h4v4h-4zM172 672h6v4h-6zM180 672h3v4h-3zM183 672h2v4h-2zM188 672h3v4h-3zM218 672h2v4h-2zM220 672h3v4h-3zM223 672h6v4h-6zM244 672h1v4h-1zM252 672h1v4h-1zM253 672h2v4h-2zM257 672h1v4h-1zM258 672h3v4h-3zM271 672h3v4h-3zM284 672h2v4h-2zM301 672h1v4h-1zM310 672h6v4h-6zM320 672h4v4h-4zM324 672h2v4h-2zM328 672h3v4h-3zM351 672h2v4h-2zM353 672h4v4h-4zM357 672h4v4h-4zM363 672h4v4h-4zM368 672h4v4h-4zM374 672h3v4h-3zM377 672h1v4h-1zM382 672h6v4h-6zM391 672h3v4h-3zM420 672h2v4h-2zM424 672h3v4h-3zM432 672h1v4h-1zM435 672h1v4h-1zM439 672h5v4h-5zM453 672h1v4h-1zM491 672h3v4h-3zM501 672h1v4h-1zM538 672h1v4h-1zM541 672h1v4h-1zM556 672h1v4h-1zM566 672h4v4h-4zM570 672h1v4h-1zM637 672h2v4h-2zM655 672h1v4h-1zM799 672h2v4h-2zM801 672h1v4h-1zM803 672h1v4h-1zM821 672h1v4h-1zM843 672h5v4h-5zM850 672h2v4h-2zM865 672h2v4h-2zM901 672h1v4h-1zM903 672h2v4h-2zM915 672h2v4h-2zM930 672h1v4h-1zM935 672h2v4h-2zM938 672h3v4h-3zM949 672h1v4h-1zM951 672h4v4h-4zM964 672h1v4h-1zM966 672h3v4h-3zM970 672h3v4h-3zM985 672h1v4h-1zM988 672h1v4h-1zM991 672h4v4h-4zM998 672h1v4h-1zM1001 672h2v4h-2zM1005 672h5v4h-5zM1012 672h3v4h-3zM1030 672h1v4h-1zM1032 672h3v4h-3zM1035 672h1v4h-1zM1043 672h1v4h-1zM1044 672h2v4h-2zM1048 672h2v4h-2zM1067 672h1v4h-1zM1077 672h4v4h-4z"/>
<path fill="#b2ef00" d="M450 676h1v5h-1zM458 676h1v5h-1zM471 676h1v5h-1zM501 676h2v5h-2zM505 676h2v5h-2zM528 676h4v5h-4zM535 676h1v5h-1zM538 676h1v5h-1zM541 676h2v5h-2zM543 676h1v5h-1zM545 676h1v5h-1zM555 676h3v5h-3zM581 676h6v5h-6zM589 676h1v5h-1zM592 676h1v5h-1zM612 676h1v5h-1zM622 676h1v5h-1zM626 676h1v5h-1zM631 676h1v5h-1zM647 676h3v5h-3zM653 676h1v5h-1zM661 676h1v5h-1zM803 676h3v5h-3zM810 676h2v5h-2zM815 676h1v5h-1zM830 676h1v5h-1zM831 676h1v5h-1zM834 676h1v5h-1zM844 676h1v5h-1zM848 676h3v5h-3zM865 676h2v5h-2zM870 676h1v5h-1zM871 676h3v5h-3zM878 676h1v5h-1zM880 676h2v5h-2zM888 676h1v5h-1zM895 676h5v5h-5zM901 676h1v5h-1zM942 676h4v5h-4zM955 676h1v5h-1zM963 676h1v5h-1zM964 676h1v5h-1zM969 676h1v5h-1zM973 676h3v5h-3zM988 676h1v5h-1zM998 676h2v5h-2zM1007 676h2v5h-2zM1012 676h6v5h-6zM1023 676h1v5h-1zM1024 676h4v5h-4zM1028 676h1v5h-1zM1029 676h1v5h-1zM1030 676h2v5h-2zM1064 676h2v5h-2zM1075 676h1v5h-1zM1077 676h4v5h-4zM109 664h1v4h-1zM133 664h3v4h-3zM140 664h1v4h-1zM150 664h3v4h-3zM159 664h3v4h-3zM164 664h3v4h-3zM182 664h4v4h-4zM201 664h4v4h-4zM205 664h2v4h-2zM209 664h2v4h-2zM223 664h3v4h-3zM226 664h4v4h-4zM233 664h2v4h-2zM238 664h4v4h-4zM251 664h6v4h-6zM257 664h1v4h-1zM259 664h1v4h-1zM260 664h3v4h-3zM265 664h6v4h-6zM279 664h1v4h-1zM280 664h6v4h-6zM310 664h1v4h-1zM311 664h3v4h-3zM314 664h6v4h-6zM342 664h1v4h-1zM343 664h2v4h-2zM345 664h1v4h-1zM356 664h1v4h-1zM357 664h2v4h-2zM359 664h3v4h-3zM363 664h1v4h-1zM364 664h6v4h-6zM381 664h3v4h-3zM400 664h3v4h-3zM403 664h3v4h-3zM95 668h1v4h-1zM96 668h2v4h-2zM113 668h4v4h-4zM130 668h1v4h-1zM139 668h2v4h-2zM153 668h3v4h-3zM166 668h6v4h-6zM180 668h1v4h-1zM188 668h3v4h-3zM202 668h1v4h-1zM203 668h3v4h-3zM206 668h3v4h-3zM233 668h2v4h-2zM235 668h2v4h-2zM239 668h2v4h-2zM253 668h4v4h-4zM276 668h4v4h-4zM292 668h6v4h-6zM313 668h3v4h-3zM316 668h2v4h-2zM332 668h6v4h-6zM367 668h3v4h-3zM373 668h2v4h-2zM379 668h2v4h-2zM381 668h4v4h-4zM387 668h4v4h-4zM395 668h2v4h-2zM401 668h4v4h-4zM405 668h4v4h-4zM420 668h2v4h-2zM424 668h3v4h-3zM429 668h1v4h-1zM435 668h2v4h-2zM448 668h2v4h-2zM453 668h1v4h-1zM466 668h1v4h-1zM551 668h1v4h-1zM567 668h4v4h-4zM574 668h3v4h-3zM580 668h1v4h-1zM581 668h4v4h-4zM821 668h1v4h-1zM834 668h2v4h-2zM842 668h1v4h-1zM855 668h1v4h-1zM886 668h4v4h-4zM890 668h1v4h-1zM897 668h3v4h-3zM910 668h3v4h-3zM921 668h2v4h-2zM924 668h2v4h-2zM926 668h1v4h-1zM932 668h2v4h-2zM940 668h1v4h-1zM942 668h1v4h-1zM949 668h1v4h-1zM956 668h2v4h-2zM960 668h1v4h-1zM962 668h1v4h-1zM964 668h1v4h-1zM966 668h3v4h-3zM970 668h5v4h-5zM998 668h2v4h-2zM1004 668h2v4h-2zM1013 668h1v4h-1zM1016 668h1v4h-1zM1022 668h1v4h-1zM1024 668h2v4h-2zM1030 668h1v4h-1zM1038 668h3v4h-3zM1044 668h2v4h-2zM1048 668h2v4h-2zM1054 668h1v4h-1zM1056 668h2v4h-2zM1063 668h1v4h-1zM1072 668h1v4h-1zM1077 668h4v4h-4zM118 672h1v4h-1zM178 672h2v4h-2zM200 672h6v4h-6zM231 672h3v4h-3zM292 672h6v4h-6zM308 672h2v4h-2zM388 672h3v4h-3zM398 672h3v4h-3zM407 672h6v4h-6zM413 672h1v4h-1zM414 672h3v4h-3zM417 672h1v4h-1zM429 672h1v4h-1zM436 672h1v4h-1zM448 672h2v4h-2zM463 672h4v4h-4zM512 672h1v4h-1zM522 672h1v4h-1zM528 672h1v4h-1zM574 672h1v4h-1zM580 672h2v4h-2zM582 672h3v4h-3zM609 672h1v4h-1zM622 672h3v4h-3zM631 672h1v4h-1zM649 672h3v4h-3zM812 672h2v4h-2zM814 672h4v4h-4zM829 672h1v4h-1zM834 672h2v4h-2zM837 672h1v4h-1zM838 672h2v4h-2zM842 672h1v4h-1zM853 672h1v4h-1zM855 672h1v4h-1zM870 672h2v4h-2zM872 672h1v4h-1zM873 672h1v4h-1zM878 672h1v4h-1zM880 672h1v4h-1zM881 672h1v4h-1zM892 672h1v4h-1zM894 672h6v4h-6zM909 672h3v4h-3zM912 672h1v4h-1zM919 672h4v4h-4zM928 672h1v4h-1zM932 672h2v4h-2zM942 672h1v4h-1zM956 672h2v4h-2zM960 672h1v4h-1zM973 672h2v4h-2zM978 672h6v4h-6zM999 672h1v4h-1zM1004 672h1v4h-1zM1016 672h1v4h-1zM1018 672h1v4h-1zM1019 672h2v4h-2zM1022 672h1v4h-1zM1024 672h2v4h-2zM1027 672h2v4h-2zM1046 672h1v4h-1zM1054 672h1v4h-1zM1056 672h2v4h-2zM1060 672h1v4h-1zM1063 672h1v4h-1zM1068 672h1v4h-1zM1069 672h2v4h-2zM1072 672h1v4h-1zM1075 672h1v4h-1zM116 658h1v6h-1zM118 658h3v6h-3zM140 658h6v6h-6zM146 658h3v6h-3zM149 658h2v6h-2zM151 658h2v6h-2zM153 658h5v6h-5zM159 658h4v6h-4zM172 658h4v6h-4zM179 658h1v6h-1zM180 658h1v6h-1zM190 658h1v6h-1zM199 658h1v6h-1zM202 658h2v6h-2zM219 658h3v6h-3zM223 658h2v6h-2zM228 658h1v6h-1zM230 658h3v6h-3zM233 658h4v6h-4zM237 658h4v6h-4zM241 658h3v6h-3zM262 658h3v6h-3zM266 658h3v6h-3zM269 658h3v6h-3zM273 658h2v6h-2zM289 658h3v6h-3zM296 658h1v6h-1zM304 658h2v6h-2zM336 658h1v6h-1zM350 658h2v6h-2zM352 658h1v6h-1z"/>
<path fill="#a2ec0e" d="M491 676h2v5h-2zM518 676h3v5h-3zM522 676h1v5h-1zM536 676h1v5h-1zM566 676h2v5h-2zM570 676h1v5h-1zM587 676h2v5h-2zM591 676h1v5h-1zM607 676h1v5h-1zM637 676h2v5h-2zM643 676h3v5h-3zM656 676h2v5h-2zM801 676h1v5h-1zM808 676h1v5h-1zM816 676h3v5h-3zM825 676h2v5h-2zM835 676h1v5h-1zM837 676h3v5h-3zM862 676h1v5h-1zM868 676h2v5h-2zM883 676h3v5h-3zM886 676h1v5h-1zM907 676h2v5h-2zM910 676h2v5h-2zM912 676h3v5h-3zM920 676h4v5h-4zM935 676h3v5h-3zM939 676h2v5h-2zM950 676h1v5h-1zM958 676h1v5h-1zM967 676h2v5h-2zM971 676h1v5h-1zM976 676h2v5h-2zM1004 676h2v5h-2zM1034 676h1v5h-1zM1038 676h1v5h-1zM1050 676h3v5h-3zM1061 676h1v5h-1zM95 664h2v4h-2zM103 664h1v4h-1zM105 664h2v4h-2zM107 664h2v4h-2zM110 664h2v4h-2zM121 664h6v4h-6zM127 664h6v4h-6zM136 664h3v4h-3zM141 664h2v4h-2zM147 664h3v4h-3zM167 664h3v4h-3zM170 664h6v4h-6zM176 664h3v4h-3zM186 664h3v4h-3zM189 664h1v4h-1zM190 664h3v4h-3zM195 664h6v4h-6zM211 664h1v4h-1zM212 664h1v4h-1zM213 664h3v4h-3zM222 664h1v4h-1zM230 664h3v4h-3zM242 664h6v4h-6zM248 664h3v4h-3zM258 664h1v4h-1zM263 664h2v4h-2zM271 664h4v4h-4zM275 664h4v4h-4zM286 664h6v4h-6zM292 664h4v4h-4zM299 664h6v4h-6zM305 664h1v4h-1zM306 664h1v4h-1zM320 664h4v4h-4zM324 664h2v4h-2zM329 664h3v4h-3zM332 664h1v4h-1zM333 664h2v4h-2zM335 664h3v4h-3zM338 664h4v4h-4zM346 664h6v4h-6zM362 664h1v4h-1zM370 664h4v4h-4zM377 664h4v4h-4zM384 664h2v4h-2zM386 664h6v4h-6zM392 664h1v4h-1zM393 664h3v4h-3zM396 664h4v4h-4zM408 664h1v4h-1zM409 664h4v4h-4zM417 664h1v4h-1zM420 664h2v4h-2zM424 664h2v4h-2zM435 664h2v4h-2zM491 664h3v4h-3zM501 664h1v4h-1zM510 664h1v4h-1zM528 664h1v4h-1zM538 664h1v4h-1zM556 664h1v4h-1zM566 664h1v4h-1zM574 664h1v4h-1zM584 664h1v4h-1zM609 664h1v4h-1zM623 664h2v4h-2zM637 664h1v4h-1zM649 664h5v4h-5zM799 664h3v4h-3zM825 664h4v4h-4zM834 664h2v4h-2zM838 664h2v4h-2zM862 664h1v4h-1zM865 664h2v4h-2zM868 664h3v4h-3zM871 664h1v4h-1zM872 664h2v4h-2zM889 664h4v4h-4zM894 664h2v4h-2zM935 664h2v4h-2zM952 664h3v4h-3zM956 664h2v4h-2zM985 664h2v4h-2zM991 664h2v4h-2zM1004 664h4v4h-4zM1008 664h2v4h-2zM1022 664h1v4h-1zM1039 664h2v4h-2zM1048 664h1v4h-1zM1063 664h1v4h-1zM98 668h4v4h-4zM141 668h1v4h-1zM156 668h6v4h-6zM195 668h3v4h-3zM224 668h2v4h-2zM237 668h1v4h-1zM310 668h3v4h-3zM320 668h4v4h-4zM370 668h3v4h-3zM375 668h4v4h-4zM391 668h4v4h-4zM432 668h1v4h-1zM439 668h5v4h-5zM463 668h3v4h-3zM491 668h3v4h-3zM501 668h1v4h-1zM522 668h1v4h-1zM528 668h1v4h-1zM541 668h1v4h-1zM566 668h1v4h-1zM609 668h1v4h-1zM622 668h2v4h-2zM624 668h1v4h-1zM631 668h1v4h-1zM637 668h2v4h-2zM649 668h5v4h-5zM655 668h1v4h-1zM799 668h1v4h-1zM800 668h2v4h-2zM808 668h2v4h-2zM812 668h4v4h-4zM825 668h4v4h-4zM829 668h1v4h-1zM843 668h1v4h-1zM844 668h1v4h-1zM845 668h2v4h-2zM850 668h2v4h-2zM853 668h1v4h-1zM865 668h2v4h-2zM868 668h6v4h-6zM878 668h1v4h-1zM884 668h2v4h-2zM891 668h1v4h-1zM894 668h3v4h-3zM901 668h1v4h-1zM905 668h1v4h-1zM909 668h1v4h-1zM915 668h2v4h-2zM919 668h2v4h-2zM930 668h1v4h-1zM935 668h2v4h-2zM938 668h2v4h-2zM951 668h2v4h-2zM953 668h2v4h-2zM985 668h2v4h-2zM988 668h1v4h-1zM991 668h3v4h-3zM1001 668h2v4h-2zM1006 668h2v4h-2zM1014 668h1v4h-1zM1018 668h3v4h-3zM1027 668h2v4h-2zM1032 668h4v4h-4zM1051 668h1v4h-1zM1067 668h2v4h-2zM1070 668h1v4h-1zM1075 668h1v4h-1zM510 672h1v4h-1zM551 672h1v4h-1zM575 672h2v4h-2zM652 672h2v4h-2zM804 672h2v4h-2zM808 672h2v4h-2zM862 672h1v4h-1zM868 672h2v4h-2zM883 672h3v4h-3zM924 672h2v4h-2zM962 672h1v4h-1zM986 672h1v4h-1zM1038 672h3v4h-3zM1061 672h1v4h-1zM273 652h1v6h-1zM284 652h1v6h-1zM95 658h4v6h-4zM105 658h2v6h-2zM107 658h6v6h-6zM113 658h3v6h-3zM117 658h1v6h-1zM123 658h1v6h-1zM129 658h3v6h-3zM132 658h2v6h-2zM163 658h2v6h-2zM185 658h2v6h-2zM187 658h1v6h-1zM188 658h1v6h-1zM195 658h1v6h-1zM204 658h1v6h-1zM206 658h4v6h-4zM211 658h1v6h-1zM256 658h3v6h-3zM260 658h2v6h-2zM277 658h4v6h-4zM284 658h1v6h-1zM286 658h2v6h-2zM299 658h3v6h-3zM312 658h3v6h-3zM328 658h1v6h-1zM333 658h1v6h-1zM334 658h1v6h-1zM354 658h1v6h-1zM400 658h3v6h-3z"/>
<path fill="#d3d000" d="M95 681h6v4h-6zM101 681h4v4h-4zM106 681h6v4h-6zM112 681h3v4h-3zM115 681h6v4h-6zM121 681h4v4h-4zM132 681h6v4h-6zM138 681h3v4h-3zM158 681h4v4h-4zM162 681h4v4h-4zM169 681h4v4h-4zM173 681h3v4h-3zM179 681h3v4h-3zM182 681h4v4h-4zM186 681h1v4h-1zM189 681h6v4h-6zM208 681h6v4h-6zM218 681h6v4h-6zM224 681h6v4h-6zM241 681h1v4h-1zM242 681h3v4h-3zM245 681h3v4h-3zM248 681h6v4h-6zM254 681h4v4h-4zM258 681h2v4h-2zM286 681h6v4h-6zM306 681h3v4h-3zM309 681h2v4h-2zM311 681h1v4h-1zM312 681h3v4h-3zM319 681h4v4h-4zM336 681h6v4h-6zM342 681h1v4h-1zM347 681h1v4h-1zM369 681h3v4h-3zM402 681h3v4h-3zM406 681h3v4h-3zM416 681h2v4h-2zM407 685h2v3h-2zM410 685h2v3h-2zM414 685h4v3h-4zM419 685h1v3h-1zM440 685h1v3h-1zM441 685h2v3h-2zM444 685h2v3h-2zM455 685h2v3h-2zM458 685h1v3h-1zM471 685h1v3h-1zM491 685h3v3h-3zM496 685h2v3h-2zM505 685h2v3h-2zM513 685h2v3h-2zM519 685h2v3h-2zM541 685h1v3h-1zM542 685h1v3h-1zM543 685h1v3h-1zM551 685h1v3h-1zM555 685h3v3h-3zM566 685h2v3h-2zM568 685h3v3h-3zM574 685h3v3h-3zM607 685h1v3h-1zM610 685h1v3h-1zM611 685h2v3h-2zM626 685h1v3h-1zM631 685h1v3h-1zM637 685h2v3h-2zM799 685h1v3h-1zM803 685h3v3h-3zM834 685h2v3h-2zM837 685h1v3h-1zM838 685h2v3h-2zM862 685h1v3h-1zM865 685h2v3h-2zM868 685h6v3h-6zM880 685h2v3h-2zM888 685h1v3h-1zM891 685h3v3h-3zM903 685h3v3h-3zM907 685h2v3h-2zM910 685h1v3h-1zM924 685h1v3h-1zM939 685h2v3h-2zM955 685h1v3h-1zM958 685h1v3h-1zM960 685h2v3h-2zM967 685h1v3h-1zM973 685h4v3h-4zM980 685h3v3h-3zM988 685h1v3h-1zM1004 685h2v3h-2zM1007 685h2v3h-2zM1010 685h1v3h-1zM1013 685h5v3h-5zM1038 685h1v3h-1zM1046 685h3v3h-3zM1050 685h2v3h-2zM1067 685h2v3h-2zM1072 685h1v3h-1zM1080 685h1v3h-1z"/>
<path fill="#d8c700" d="M105 681h1v4h-1zM125 681h1v4h-1zM126 681h6v4h-6zM148 681h1v4h-1zM149 681h3v4h-3zM152 681h1v4h-1zM155 681h3v4h-3zM176 681h3v4h-3zM187 681h2v4h-2zM195 681h3v4h-3zM198 681h4v4h-4zM203 681h1v4h-1zM204 681h4v4h-4zM214 681h4v4h-4zM230 681h3v4h-3zM233 681h4v4h-4zM237 681h4v4h-4zM260 681h1v4h-1zM261 681h3v4h-3zM268 681h2v4h-2zM276 681h4v4h-4zM280 681h3v4h-3zM283 681h1v4h-1zM284 681h2v4h-2zM294 681h6v4h-6zM300 681h6v4h-6zM315 681h1v4h-1zM323 681h1v4h-1zM324 681h3v4h-3zM343 681h1v4h-1zM344 681h3v4h-3zM354 681h2v4h-2zM359 681h6v4h-6zM372 681h2v4h-2zM140 685h6v3h-6zM196 685h4v3h-4zM375 685h4v3h-4zM389 685h3v3h-3zM404 685h3v3h-3zM413 685h1v3h-1zM424 685h3v3h-3zM439 685h1v3h-1zM534 685h1v3h-1zM656 685h2v3h-2zM842 685h2v3h-2zM855 685h1v3h-1zM890 685h1v3h-1zM899 685h1v3h-1zM911 685h3v3h-3zM945 685h1v3h-1zM963 685h2v3h-2zM968 685h1v3h-1zM971 685h1v3h-1zM977 685h1v3h-1zM998 685h2v3h-2zM1052 685h1v3h-1zM1058 685h1v3h-1zM543 688h1v3h-1zM551 688h2v3h-2zM555 688h1v3h-1zM611 688h2v3h-2zM622 688h1v3h-1zM631 688h1v3h-1zM656 688h1v3h-1zM888 688h1v3h-1zM907 688h2v3h-2zM926 688h1v3h-1zM945 688h1v3h-1zM950 688h1v3h-1zM955 688h1v3h-1zM998 688h1v3h-1zM1030 688h1v3h-1zM1034 688h1v3h-1zM1046 688h3v3h-3zM1064 688h2v3h-2z"/>
<path fill="#e8a100" d="M95 685h2v3h-2zM99 685h4v3h-4zM103 685h4v3h-4zM117 685h1v3h-1zM119 685h6v3h-6zM146 685h3v3h-3zM149 685h3v3h-3zM171 685h4v3h-4zM178 685h6v3h-6zM200 685h1v3h-1zM234 685h1v3h-1zM242 685h2v3h-2zM244 685h3v3h-3zM329 685h4v3h-4zM339 685h3v3h-3zM355 685h1v3h-1zM356 685h6v3h-6zM373 685h2v3h-2zM101 688h4v3h-4zM117 688h2v3h-2zM143 688h2v3h-2zM145 688h2v3h-2zM165 688h1v3h-1zM171 688h1v3h-1zM181 688h1v3h-1zM233 688h6v3h-6zM241 688h1v3h-1zM244 688h1v3h-1zM282 688h3v3h-3zM288 688h3v3h-3zM291 688h6v3h-6zM311 688h4v3h-4zM327 688h4v3h-4zM358 688h2v3h-2zM379 688h4v3h-4zM383 688h3v3h-3zM392 688h6v3h-6zM398 688h3v3h-3zM401 688h3v3h-3zM404 688h1v3h-1zM405 688h1v3h-1zM409 688h1v3h-1zM433 688h3v3h-3zM436 688h1v3h-1zM441 688h1v3h-1zM444 688h1v3h-1z"/>
<path fill="#deba00" d="M97 685h2v3h-2zM113 685h4v3h-4zM118 685h1v3h-1zM152 685h3v3h-3zM163 685h1v3h-1zM164 685h1v3h-1zM165 685h1v3h-1zM175 685h2v3h-2zM184 685h2v3h-2zM186 685h4v3h-4zM190 685h6v3h-6zM207 685h1v3h-1zM220 685h2v3h-2zM224 685h4v3h-4zM228 685h6v3h-6zM235 685h4v3h-4zM241 685h1v3h-1zM251 685h6v3h-6zM279 685h4v3h-4zM286 685h6v3h-6zM292 685h1v3h-1zM293 685h3v3h-3zM296 685h2v3h-2zM301 685h2v3h-2zM303 685h1v3h-1zM308 685h2v3h-2zM313 685h1v3h-1zM315 685h3v3h-3zM322 685h1v3h-1zM342 685h1v3h-1zM345 685h4v3h-4zM351 685h4v3h-4zM364 685h3v3h-3zM369 685h4v3h-4zM379 685h4v3h-4zM398 685h6v3h-6zM409 685h1v3h-1zM412 685h1v3h-1zM429 685h1v3h-1zM433 685h4v3h-4zM439 688h2v3h-2zM491 688h2v3h-2zM501 688h2v3h-2zM506 688h1v3h-1zM513 688h2v3h-2zM518 688h2v3h-2zM522 688h1v3h-1zM530 688h2v3h-2zM535 688h4v3h-4zM541 688h2v3h-2zM556 688h2v3h-2zM566 688h2v3h-2zM568 688h3v3h-3zM574 688h4v3h-4zM583 688h1v3h-1zM607 688h1v3h-1zM610 688h1v3h-1zM619 688h2v3h-2zM626 688h1v3h-1zM643 688h1v3h-1zM653 688h1v3h-1zM661 688h1v3h-1zM799 688h1v3h-1zM803 688h1v3h-1zM810 688h2v3h-2zM815 688h4v3h-4zM822 688h1v3h-1zM823 688h1v3h-1zM830 688h2v3h-2zM837 688h3v3h-3zM862 688h1v3h-1zM865 688h2v3h-2zM868 688h6v3h-6zM878 688h1v3h-1zM880 688h2v3h-2zM883 688h3v3h-3zM895 688h1v3h-1zM901 688h1v3h-1zM903 688h3v3h-3zM912 688h3v3h-3zM920 688h2v3h-2zM930 688h1v3h-1zM935 688h3v3h-3zM939 688h2v3h-2zM960 688h2v3h-2zM963 688h2v3h-2zM967 688h1v3h-1zM968 688h2v3h-2zM973 688h5v3h-5zM980 688h4v3h-4zM988 688h1v3h-1zM991 688h3v3h-3zM994 688h1v3h-1zM999 688h1v3h-1zM1001 688h2v3h-2zM1012 688h6v3h-6zM1023 688h1v3h-1zM1031 688h1v3h-1zM1038 688h1v3h-1zM1055 688h1v3h-1zM1072 688h1v3h-1zM1075 688h1v3h-1z"/>
<path fill="#e3ad00" d="M107 685h2v3h-2zM109 685h4v3h-4zM125 685h4v3h-4zM129 685h3v3h-3zM132 685h4v3h-4zM136 685h4v3h-4zM155 685h2v3h-2zM157 685h6v3h-6zM167 685h4v3h-4zM177 685h1v3h-1zM201 685h6v3h-6zM208 685h6v3h-6zM214 685h6v3h-6zM222 685h2v3h-2zM239 685h2v3h-2zM247 685h1v3h-1zM248 685h3v3h-3zM257 685h6v3h-6zM263 685h4v3h-4zM267 685h4v3h-4zM271 685h6v3h-6zM277 685h2v3h-2zM283 685h3v3h-3zM298 685h3v3h-3zM304 685h4v3h-4zM310 685h1v3h-1zM311 685h2v3h-2zM314 685h1v3h-1zM318 685h1v3h-1zM319 685h3v3h-3zM323 685h6v3h-6zM333 685h6v3h-6zM343 685h2v3h-2zM349 685h2v3h-2zM362 685h2v3h-2zM383 685h6v3h-6zM392 685h6v3h-6zM406 688h3v3h-3zM414 688h3v3h-3zM417 688h1v3h-1zM419 688h1v3h-1zM424 688h3v3h-3zM429 688h1v3h-1zM442 688h1v3h-1zM445 688h1v3h-1zM450 688h1v3h-1zM455 688h2v3h-2zM458 688h1v3h-1zM471 688h1v3h-1zM493 688h1v3h-1zM496 688h2v3h-2zM505 688h1v3h-1zM520 688h1v3h-1zM526 688h1v3h-1zM527 688h1v3h-1zM528 688h2v3h-2zM534 688h1v3h-1zM545 688h3v3h-3zM581 688h2v3h-2zM584 688h6v3h-6zM591 688h2v3h-2zM637 688h2v3h-2zM644 688h2v3h-2zM647 688h3v3h-3zM657 688h1v3h-1zM659 688h1v3h-1zM800 688h2v3h-2zM804 688h2v3h-2zM808 688h1v3h-1zM825 688h2v3h-2zM834 688h2v3h-2zM842 688h3v3h-3zM848 688h3v3h-3zM855 688h1v3h-1zM886 688h1v3h-1zM890 688h4v3h-4zM896 688h4v3h-4zM910 688h2v3h-2zM922 688h3v3h-3zM928 688h2v3h-2zM942 688h3v3h-3zM947 688h1v3h-1zM958 688h1v3h-1zM971 688h1v3h-1zM984 688h1v3h-1zM1004 688h2v3h-2zM1007 688h2v3h-2zM1010 688h1v3h-1zM1024 688h3v3h-3zM1027 688h3v3h-3zM1050 688h3v3h-3zM1058 688h1v3h-1zM1060 688h2v3h-2zM1067 688h2v3h-2zM1070 688h1v3h-1zM1077 688h3v3h-3zM1080 688h1v3h-1z"/>
<path fill="#ed9400" d="M95 688h3v3h-3zM99 688h2v3h-2zM105 688h1v3h-1zM106 688h1v3h-1zM111 688h1v3h-1zM121 688h6v3h-6zM127 688h6v3h-6zM142 688h1v3h-1zM147 688h2v3h-2zM159 688h6v3h-6zM167 688h1v3h-1zM182 688h6v3h-6zM197 688h3v3h-3zM204 688h1v3h-1zM209 688h6v3h-6zM220 688h3v3h-3zM223 688h1v3h-1zM224 688h2v3h-2zM239 688h2v3h-2zM242 688h2v3h-2zM251 688h6v3h-6zM259 688h1v3h-1zM260 688h6v3h-6zM276 688h3v3h-3zM279 688h3v3h-3zM301 688h4v3h-4zM308 688h3v3h-3zM320 688h2v3h-2zM322 688h4v3h-4zM326 688h1v3h-1zM331 688h1v3h-1zM343 688h6v3h-6zM360 688h1v3h-1zM361 688h2v3h-2zM363 688h4v3h-4zM369 688h1v3h-1zM370 688h1v3h-1zM377 688h2v3h-2zM386 688h6v3h-6z"/>
<path fill="#ea9a00" d="M98 688h1v3h-1zM107 688h4v3h-4zM112 688h1v3h-1zM113 688h4v3h-4zM119 688h2v3h-2zM133 688h6v3h-6zM139 688h3v3h-3zM149 688h6v3h-6zM155 688h4v3h-4zM168 688h3v3h-3zM172 688h2v3h-2zM174 688h6v3h-6zM180 688h1v3h-1zM188 688h3v3h-3zM191 688h6v3h-6zM200 688h4v3h-4zM205 688h2v3h-2zM207 688h2v3h-2zM215 688h2v3h-2zM217 688h3v3h-3zM226 688h6v3h-6zM232 688h1v3h-1zM245 688h6v3h-6zM257 688h1v3h-1zM258 688h1v3h-1zM266 688h2v3h-2zM268 688h4v3h-4zM272 688h2v3h-2zM274 688h2v3h-2zM285 688h3v3h-3zM297 688h2v3h-2zM299 688h2v3h-2zM305 688h3v3h-3zM315 688h3v3h-3zM318 688h2v3h-2zM332 688h2v3h-2zM334 688h6v3h-6zM340 688h3v3h-3zM349 688h4v3h-4zM353 688h2v3h-2zM355 688h3v3h-3zM371 688h6v3h-6zM410 688h1v3h-1zM411 688h3v3h-3z"/>
<path fill="#90e820" d="M97 664h6v4h-6zM104 664h1v4h-1zM112 664h4v4h-4zM116 664h3v4h-3zM119 664h2v4h-2zM139 664h1v4h-1zM143 664h4v4h-4zM153 664h6v4h-6zM162 664h2v4h-2zM179 664h3v4h-3zM193 664h1v4h-1zM194 664h1v4h-1zM207 664h2v4h-2zM216 664h6v4h-6zM235 664h3v4h-3zM296 664h3v4h-3zM307 664h3v4h-3zM326 664h3v4h-3zM352 664h3v4h-3zM355 664h1v4h-1zM374 664h3v4h-3zM406 664h2v4h-2zM413 664h4v4h-4zM426 664h1v4h-1zM429 664h1v4h-1zM432 664h1v4h-1zM439 664h5v4h-5zM448 664h2v4h-2zM453 664h1v4h-1zM463 664h4v4h-4zM512 664h1v4h-1zM541 664h1v4h-1zM575 664h2v4h-2zM580 664h4v4h-4zM622 664h1v4h-1zM631 664h1v4h-1zM655 664h1v4h-1zM805 664h1v4h-1zM808 664h2v4h-2zM837 664h1v4h-1zM850 664h2v4h-2zM853 664h1v4h-1zM878 664h1v4h-1zM883 664h6v4h-6zM896 664h3v4h-3zM899 664h1v4h-1zM903 664h3v4h-3zM909 664h4v4h-4zM919 664h4v4h-4zM924 664h3v4h-3zM930 664h1v4h-1zM938 664h3v4h-3zM942 664h1v4h-1zM949 664h1v4h-1zM964 664h1v4h-1zM971 664h4v4h-4zM979 664h5v4h-5zM1001 664h2v4h-2zM1012 664h3v4h-3zM1018 664h3v4h-3zM1024 664h2v4h-2zM1027 664h2v4h-2zM1032 664h4v4h-4zM1038 664h1v4h-1zM1043 664h1v4h-1zM1044 664h3v4h-3zM1054 664h1v4h-1zM1060 664h2v4h-2zM1067 664h2v4h-2zM1070 664h1v4h-1zM1072 664h1v4h-1zM1075 664h1v4h-1zM510 668h1v4h-1zM512 668h1v4h-1zM538 668h1v4h-1zM556 668h1v4h-1zM803 668h3v4h-3zM816 668h2v4h-2zM837 668h3v4h-3zM847 668h1v4h-1zM862 668h1v4h-1zM880 668h2v4h-2zM883 668h1v4h-1zM892 668h1v4h-1zM903 668h2v4h-2zM928 668h1v4h-1zM978 668h4v4h-4zM982 668h2v4h-2zM994 668h1v4h-1zM1008 668h2v4h-2zM1012 668h1v4h-1zM1043 668h1v4h-1zM1046 668h1v4h-1zM1060 668h2v4h-2zM1069 668h1v4h-1zM98 652h1v6h-1zM109 652h6v6h-6zM115 652h3v6h-3zM129 652h1v6h-1zM130 652h3v6h-3zM133 652h2v6h-2zM140 652h6v6h-6zM146 652h3v6h-3zM149 652h4v6h-4zM153 652h5v6h-5zM159 652h4v6h-4zM185 652h1v6h-1zM186 652h3v6h-3zM192 652h1v6h-1zM202 652h1v6h-1zM203 652h1v6h-1zM219 652h2v6h-2zM228 652h1v6h-1zM236 652h4v6h-4zM266 652h4v6h-4zM274 652h1v6h-1zM277 652h4v6h-4zM282 652h1v6h-1zM286 652h2v6h-2zM299 652h3v6h-3zM304 652h2v6h-2zM328 652h1v6h-1zM333 652h2v6h-2zM350 652h3v6h-3zM126 658h1v6h-1zM134 658h2v6h-2zM166 658h6v6h-6zM176 658h1v6h-1zM192 658h1v6h-1zM281 658h2v6h-2zM387 658h4v6h-4zM396 658h4v6h-4zM403 658h3v6h-3zM416 658h2v6h-2zM424 658h3v6h-3z"/>
<path fill="#6cdf36" d="M522 664h1v4h-1zM551 664h1v4h-1zM567 664h4v4h-4zM638 664h1v4h-1zM803 664h2v4h-2zM812 664h6v4h-6zM821 664h1v4h-1zM829 664h1v4h-1zM842 664h6v4h-6zM855 664h1v4h-1zM880 664h2v4h-2zM901 664h1v4h-1zM915 664h2v4h-2zM928 664h1v4h-1zM932 664h2v4h-2zM951 664h1v4h-1zM960 664h1v4h-1zM962 664h1v4h-1zM966 664h3v4h-3zM970 664h1v4h-1zM978 664h1v4h-1zM988 664h1v4h-1zM993 664h2v4h-2zM998 664h2v4h-2zM1016 664h1v4h-1zM1030 664h1v4h-1zM1049 664h1v4h-1zM1051 664h1v4h-1zM1056 664h2v4h-2zM1069 664h1v4h-1zM1077 664h4v4h-4zM115 647h1v5h-1zM152 647h4v5h-4zM167 647h3v5h-3zM170 647h6v5h-6zM228 647h1v5h-1zM231 647h1v5h-1zM241 647h3v5h-3zM289 647h3v5h-3zM299 647h3v5h-3zM95 652h3v6h-3zM118 652h3v6h-3zM123 652h1v6h-1zM126 652h1v6h-1zM135 652h1v6h-1zM163 652h1v6h-1zM172 652h4v6h-4zM179 652h2v6h-2zM190 652h1v6h-1zM195 652h1v6h-1zM199 652h1v6h-1zM204 652h1v6h-1zM206 652h4v6h-4zM211 652h1v6h-1zM221 652h1v6h-1zM223 652h2v6h-2zM230 652h6v6h-6zM240 652h4v6h-4zM256 652h1v6h-1zM257 652h2v6h-2zM270 652h1v6h-1zM271 652h1v6h-1zM281 652h1v6h-1zM289 652h3v6h-3zM296 652h1v6h-1zM312 652h1v6h-1zM314 652h1v6h-1zM336 652h1v6h-1zM354 652h1v6h-1zM405 652h1v6h-1zM416 652h2v6h-2zM407 658h1v6h-1zM408 658h1v6h-1zM420 658h2v6h-2zM429 658h1v6h-1zM432 658h1v6h-1zM435 658h3v6h-3zM494 658h1v6h-1zM570 658h1v6h-1zM618 658h1v6h-1zM687 658h1v6h-1zM812 658h3v6h-3zM826 658h2v6h-2zM834 658h1v6h-1zM904 658h1v6h-1zM918 658h1v6h-1z"/>
<path fill="#3dce52" d="M95 647h4v5h-4zM105 647h1v5h-1zM106 647h3v5h-3zM116 647h1v5h-1zM123 647h1v5h-1zM126 647h1v5h-1zM140 647h1v5h-1zM145 647h1v5h-1zM146 647h2v5h-2zM156 647h2v5h-2zM159 647h6v5h-6zM185 647h4v5h-4zM190 647h1v5h-1zM192 647h1v5h-1zM202 647h3v5h-3zM206 647h3v5h-3zM211 647h1v5h-1zM223 647h2v5h-2zM232 647h1v5h-1zM233 647h1v5h-1zM240 647h1v5h-1zM266 647h6v5h-6zM273 647h2v5h-2zM296 647h1v5h-1zM312 647h2v5h-2zM328 647h1v5h-1zM350 647h3v5h-3zM424 647h3v5h-3zM398 652h4v6h-4zM407 652h2v6h-2zM420 652h2v6h-2zM424 652h2v6h-2zM439 652h2v6h-2zM472 652h1v6h-1zM539 652h6v6h-6zM552 652h1v6h-1zM580 652h4v6h-4zM584 652h1v6h-1zM664 652h4v6h-4zM821 652h1v6h-1zM826 652h1v6h-1zM836 652h1v6h-1zM856 652h2v6h-2zM872 652h2v6h-2zM886 652h3v6h-3zM913 652h1v6h-1zM941 652h3v6h-3zM980 652h4v6h-4zM985 652h4v6h-4zM992 652h1v6h-1zM1010 652h2v6h-2zM1027 652h2v6h-2zM1039 652h1v6h-1zM1070 652h2v6h-2zM469 658h1v6h-1zM510 658h1v6h-1zM512 658h1v6h-1zM522 658h1v6h-1zM528 658h1v6h-1zM552 658h1v6h-1zM556 658h1v6h-1zM563 658h1v6h-1zM564 658h1v6h-1zM580 658h2v6h-2zM582 658h3v6h-3zM631 658h1v6h-1zM639 658h4v6h-4zM643 658h2v6h-2zM651 658h3v6h-3zM664 658h1v6h-1zM665 658h1v6h-1zM666 658h2v6h-2zM763 658h2v6h-2zM815 658h3v6h-3zM821 658h1v6h-1zM836 658h1v6h-1zM838 658h1v6h-1zM847 658h3v6h-3zM854 658h6v6h-6zM860 658h2v6h-2zM880 658h1v6h-1zM899 658h1v6h-1zM901 658h3v6h-3zM910 658h2v6h-2zM938 658h1v6h-1zM964 658h1v6h-1zM980 658h4v6h-4zM989 658h2v6h-2zM991 658h2v6h-2zM993 658h2v6h-2zM998 658h2v6h-2zM1016 658h1v6h-1zM1022 658h1v6h-1zM1044 658h1v6h-1zM1049 658h1v6h-1zM1051 658h1v6h-1zM1054 658h1v6h-1zM1056 658h2v6h-2zM1060 658h2v6h-2z"/>
<path fill="#4dd64a" d="M109 647h4v5h-4zM113 647h2v5h-2zM117 647h4v5h-4zM129 647h4v5h-4zM133 647h3v5h-3zM141 647h4v5h-4zM148 647h4v5h-4zM166 647h1v5h-1zM176 647h1v5h-1zM179 647h2v5h-2zM195 647h1v5h-1zM199 647h1v5h-1zM219 647h1v5h-1zM220 647h2v5h-2zM230 647h1v5h-1zM256 647h3v5h-3zM260 647h2v5h-2zM262 647h3v5h-3zM277 647h4v5h-4zM281 647h1v5h-1zM282 647h1v5h-1zM284 647h1v5h-1zM286 647h2v5h-2zM304 647h2v5h-2zM314 647h1v5h-1zM333 647h2v5h-2zM336 647h1v5h-1zM354 647h1v5h-1zM105 652h4v6h-4zM164 652h1v6h-1zM166 652h6v6h-6zM176 652h1v6h-1zM260 652h4v6h-4zM264 652h1v6h-1zM313 652h1v6h-1zM387 652h4v6h-4zM396 652h2v6h-2zM402 652h3v6h-3zM426 652h1v6h-1zM429 652h1v6h-1zM432 652h1v6h-1zM438 658h3v6h-3zM443 658h1v6h-1zM470 658h6v6h-6zM535 658h6v6h-6zM541 658h6v6h-6zM547 658h2v6h-2zM558 658h1v6h-1zM565 658h2v6h-2zM574 658h3v6h-3zM609 658h1v6h-1zM614 658h2v6h-2zM621 658h1v6h-1zM655 658h1v6h-1zM672 658h2v6h-2zM686 658h1v6h-1zM760 658h2v6h-2zM799 658h2v6h-2zM801 658h1v6h-1zM803 658h3v6h-3zM808 658h2v6h-2zM825 658h1v6h-1zM828 658h2v6h-2zM852 658h2v6h-2zM866 658h6v6h-6zM873 658h1v6h-1zM887 658h2v6h-2zM890 658h2v6h-2zM913 658h1v6h-1zM920 658h1v6h-1zM936 658h1v6h-1zM939 658h6v6h-6zM962 658h1v6h-1zM966 658h3v6h-3zM970 658h4v6h-4zM976 658h3v6h-3zM979 658h1v6h-1zM985 658h4v6h-4zM1001 658h2v6h-2zM1004 658h4v6h-4zM1010 658h2v6h-2zM1024 658h2v6h-2zM1027 658h2v6h-2zM1030 658h1v6h-1zM1039 658h1v6h-1zM1070 658h2v6h-2z"/>
<path fill="#2dc65a" d="M209 647h1v5h-1zM234 647h6v5h-6zM387 647h4v5h-4zM396 647h3v5h-3zM399 647h6v5h-6zM405 647h1v5h-1zM408 647h1v5h-1zM420 647h2v5h-2zM429 647h1v5h-1zM432 647h1v5h-1zM435 647h4v5h-4zM435 652h4v6h-4zM443 652h1v6h-1zM473 652h3v6h-3zM512 652h1v6h-1zM528 652h1v6h-1zM535 652h4v6h-4zM545 652h4v6h-4zM556 652h1v6h-1zM558 652h1v6h-1zM563 652h3v6h-3zM574 652h3v6h-3zM609 652h1v6h-1zM614 652h2v6h-2zM618 652h1v6h-1zM621 652h1v6h-1zM652 652h2v6h-2zM672 652h1v6h-1zM686 652h2v6h-2zM760 652h2v6h-2zM763 652h2v6h-2zM768 652h3v6h-3zM799 652h3v6h-3zM803 652h1v6h-1zM812 652h4v6h-4zM827 652h3v6h-3zM847 652h1v6h-1zM852 652h3v6h-3zM859 652h3v6h-3zM866 652h6v6h-6zM890 652h2v6h-2zM901 652h2v6h-2zM903 652h2v6h-2zM910 652h2v6h-2zM918 652h1v6h-1zM920 652h1v6h-1zM938 652h3v6h-3zM944 652h1v6h-1zM964 652h1v6h-1zM970 652h3v6h-3zM978 652h2v6h-2zM993 652h1v6h-1zM998 652h2v6h-2zM1016 652h1v6h-1zM1024 652h2v6h-2zM1030 652h1v6h-1zM1044 652h1v6h-1zM1049 652h1v6h-1zM1054 652h1v6h-1zM1056 652h2v6h-2zM768 658h3v6h-3zM872 658h1v6h-1zM878 658h1v6h-1zM881 658h1v6h-1zM886 658h1v6h-1zM908 658h1v6h-1z"/>
<path fill="#1fbe62" d="M407 647h1v5h-1zM416 647h2v5h-2zM443 647h1v5h-1zM494 647h1v5h-1zM522 647h1v5h-1zM540 647h4v5h-4zM544 647h2v5h-2zM552 647h1v5h-1zM609 647h1v5h-1zM614 647h2v5h-2zM621 647h1v5h-1zM651 647h3v5h-3zM664 647h1v5h-1zM764 647h1v5h-1zM768 647h3v5h-3zM799 647h3v5h-3zM808 647h2v5h-2zM821 647h1v5h-1zM825 647h3v5h-3zM828 647h2v5h-2zM847 647h3v5h-3zM852 647h6v5h-6zM878 647h1v5h-1zM908 647h1v5h-1zM913 647h1v5h-1zM944 647h1v5h-1zM979 647h1v5h-1zM983 647h1v5h-1zM987 647h3v5h-3zM1025 647h1v5h-1zM1027 647h2v5h-2zM1039 647h1v5h-1zM1051 647h1v5h-1zM469 652h3v6h-3zM494 652h1v6h-1zM510 652h1v6h-1zM522 652h1v6h-1zM566 652h1v6h-1zM570 652h1v6h-1zM631 652h1v6h-1zM639 652h6v6h-6zM651 652h1v6h-1zM655 652h1v6h-1zM673 652h1v6h-1zM804 652h2v6h-2zM808 652h2v6h-2zM816 652h2v6h-2zM825 652h1v6h-1zM834 652h1v6h-1zM838 652h1v6h-1zM848 652h2v6h-2zM855 652h1v6h-1zM858 652h1v6h-1zM878 652h1v6h-1zM880 652h1v6h-1zM881 652h1v6h-1zM899 652h1v6h-1zM908 652h1v6h-1zM936 652h1v6h-1zM962 652h1v6h-1zM966 652h3v6h-3zM973 652h1v6h-1zM976 652h2v6h-2zM989 652h3v6h-3zM994 652h1v6h-1zM1001 652h2v6h-2zM1004 652h4v6h-4zM1022 652h1v6h-1zM1051 652h1v6h-1zM1060 652h2v6h-2z"/>
<path fill="#1ab76c" d="M439 647h2v5h-2zM469 647h3v5h-3zM472 647h4v5h-4zM512 647h1v5h-1zM538 647h2v5h-2zM547 647h2v5h-2zM565 647h1v5h-1zM570 647h1v5h-1zM574 647h1v5h-1zM575 647h1v5h-1zM576 647h1v5h-1zM580 647h4v5h-4zM584 647h1v5h-1zM618 647h1v5h-1zM655 647h1v5h-1zM665 647h2v5h-2zM672 647h2v5h-2zM686 647h2v5h-2zM760 647h2v5h-2zM805 647h1v5h-1zM812 647h6v5h-6zM834 647h1v5h-1zM836 647h1v5h-1zM838 647h1v5h-1zM858 647h2v5h-2zM873 647h1v5h-1zM888 647h1v5h-1zM890 647h1v5h-1zM891 647h1v5h-1zM899 647h1v5h-1zM901 647h2v5h-2zM903 647h2v5h-2zM911 647h1v5h-1zM920 647h1v5h-1zM936 647h1v5h-1zM938 647h4v5h-4zM942 647h2v5h-2zM970 647h1v5h-1zM980 647h1v5h-1zM985 647h2v5h-2zM990 647h5v5h-5zM998 647h1v5h-1zM999 647h1v5h-1zM1001 647h2v5h-2zM1004 647h4v5h-4zM1016 647h1v5h-1zM1024 647h1v5h-1zM1030 647h1v5h-1zM1044 647h1v5h-1zM1049 647h1v5h-1zM1056 647h2v5h-2zM109 639h6v8h-6zM120 639h1v8h-1zM140 639h3v8h-3zM164 639h1v8h-1zM179 639h1v8h-1zM202 639h3v8h-3zM208 639h2v8h-2zM260 639h3v8h-3zM284 639h1v8h-1zM289 639h3v8h-3zM414 639h1v8h-1zM429 639h1v8h-1zM510 639h4v8h-4zM535 639h2v8h-2zM558 639h1v8h-1zM577 639h1v8h-1zM621 639h1v8h-1zM631 639h1v8h-1zM639 639h3v8h-3zM642 639h2v8h-2zM652 639h1v8h-1zM679 639h1v8h-1zM745 639h1v8h-1zM787 639h2v8h-2zM792 639h1v8h-1zM805 639h1v8h-1zM836 639h1v8h-1zM860 639h1v8h-1zM874 639h1v8h-1zM899 639h1v8h-1zM920 639h1v8h-1zM972 639h1v8h-1zM973 639h1v8h-1zM988 639h3v8h-3zM1015 639h2v8h-2zM1055 639h2v8h-2z"/>
<path fill="#15af77" d="M510 647h1v5h-1zM528 647h1v5h-1zM535 647h3v5h-3zM546 647h1v5h-1zM556 647h1v5h-1zM558 647h1v5h-1zM563 647h2v5h-2zM566 647h1v5h-1zM631 647h1v5h-1zM639 647h4v5h-4zM643 647h2v5h-2zM667 647h1v5h-1zM763 647h1v5h-1zM803 647h2v5h-2zM860 647h2v5h-2zM866 647h6v5h-6zM872 647h1v5h-1zM880 647h2v5h-2zM886 647h2v5h-2zM910 647h1v5h-1zM918 647h1v5h-1zM962 647h1v5h-1zM964 647h1v5h-1zM966 647h3v5h-3zM971 647h3v5h-3zM976 647h3v5h-3zM981 647h2v5h-2zM1010 647h2v5h-2zM1022 647h1v5h-1zM1054 647h1v5h-1zM1060 647h2v5h-2zM1070 647h1v5h-1zM1071 647h1v5h-1zM97 639h2v8h-2zM107 639h2v8h-2zM116 639h2v8h-2zM121 639h2v8h-2zM143 639h4v8h-4zM147 639h2v8h-2zM157 639h1v8h-1zM166 639h1v8h-1zM167 639h4v8h-4zM171 639h1v8h-1zM173 639h6v8h-6zM188 639h1v8h-1zM192 639h1v8h-1zM197 639h2v8h-2zM211 639h1v8h-1zM235 639h1v8h-1zM244 639h1v8h-1zM249 639h1v8h-1zM293 639h1v8h-1zM313 639h2v8h-2zM350 639h4v8h-4zM356 639h2v8h-2zM362 639h3v8h-3zM375 639h1v8h-1zM378 639h1v8h-1zM382 639h1v8h-1zM402 639h1v8h-1zM424 639h1v8h-1zM432 639h1v8h-1zM474 639h2v8h-2zM478 639h1v8h-1zM520 639h1v8h-1zM528 639h1v8h-1zM537 639h1v8h-1zM538 639h3v8h-3zM541 639h1v8h-1zM553 639h2v8h-2zM566 639h1v8h-1zM585 639h1v8h-1zM591 639h2v8h-2zM664 639h3v8h-3zM765 639h1v8h-1zM769 639h1v8h-1zM770 639h1v8h-1zM786 639h1v8h-1zM797 639h1v8h-1zM809 639h1v8h-1zM822 639h1v8h-1zM834 639h1v8h-1zM838 639h1v8h-1zM847 639h2v8h-2zM849 639h1v8h-1zM852 639h2v8h-2zM854 639h3v8h-3zM889 639h4v8h-4zM894 639h2v8h-2zM911 639h2v8h-2zM918 639h1v8h-1zM928 639h1v8h-1zM930 639h2v8h-2zM933 639h1v8h-1zM936 639h1v8h-1zM944 639h1v8h-1zM950 639h1v8h-1zM957 639h1v8h-1zM961 639h1v8h-1zM962 639h1v8h-1zM964 639h1v8h-1zM966 639h3v8h-3zM970 639h1v8h-1zM971 639h1v8h-1zM976 639h1v8h-1zM1002 639h1v8h-1zM1017 639h2v8h-2zM1024 639h2v8h-2zM1032 639h2v8h-2zM1035 639h1v8h-1zM1044 639h1v8h-1zM1049 639h1v8h-1zM1057 639h2v8h-2zM1061 639h1v8h-1zM1080 639h1v8h-1z"/>
<path fill="#109d95" d="M95 631h4v8h-4zM110 631h5v8h-5zM120 631h3v8h-3zM129 631h1v8h-1zM140 631h2v8h-2zM143 631h1v8h-1zM160 631h1v8h-1zM197 631h2v8h-2zM208 631h2v8h-2zM266 631h2v8h-2zM290 631h1v8h-1zM356 631h2v8h-2zM382 631h1v8h-1zM411 631h2v8h-2zM425 631h2v8h-2zM429 631h1v8h-1zM474 631h2v8h-2zM511 631h2v8h-2zM513 631h2v8h-2zM553 631h2v8h-2zM558 631h1v8h-1zM566 631h1v8h-1zM596 631h1v8h-1zM602 631h1v8h-1zM606 631h3v8h-3zM618 631h1v8h-1zM652 631h1v8h-1zM756 631h1v8h-1zM769 631h2v8h-2zM813 631h1v8h-1zM834 631h1v8h-1zM838 631h1v8h-1zM852 631h2v8h-2zM856 631h1v8h-1zM860 631h1v8h-1zM894 631h2v8h-2zM899 631h1v8h-1zM901 631h2v8h-2zM903 631h2v8h-2zM910 631h3v8h-3zM933 631h1v8h-1zM961 631h1v8h-1zM970 631h2v8h-2zM976 631h1v8h-1zM988 631h3v8h-3zM1015 631h4v8h-4zM1049 631h1v8h-1zM135 618h1v13h-1zM147 618h2v13h-2zM159 618h1v13h-1zM179 618h2v13h-2zM197 618h1v13h-1zM203 618h1v13h-1zM226 618h2v13h-2zM235 618h1v13h-1zM238 618h1v13h-1zM249 618h1v13h-1zM252 618h2v13h-2zM258 618h1v13h-1zM275 618h1v13h-1zM277 618h1v13h-1zM284 618h1v13h-1zM303 618h3v13h-3zM363 618h1v13h-1zM364 618h1v13h-1zM376 618h3v13h-3zM402 618h1v13h-1zM405 618h1v13h-1zM412 618h4v13h-4zM416 618h1v13h-1zM420 618h1v13h-1zM425 618h3v13h-3zM455 618h1v13h-1zM465 618h2v13h-2zM490 618h2v13h-2zM508 618h1v13h-1zM525 618h1v13h-1zM533 618h1v13h-1zM538 618h2v13h-2zM541 618h2v13h-2zM553 618h1v13h-1zM558 618h1v13h-1zM560 618h1v13h-1zM568 618h1v13h-1zM576 618h1v13h-1zM585 618h2v13h-2zM639 618h1v13h-1zM660 618h1v13h-1zM777 618h1v13h-1zM784 618h1v13h-1zM825 618h4v13h-4zM853 618h2v13h-2zM873 618h1v13h-1zM879 618h1v13h-1zM889 618h1v13h-1zM894 618h2v13h-2zM899 618h1v13h-1zM911 618h1v13h-1zM920 618h1v13h-1zM942 618h2v13h-2zM950 618h1v13h-1zM970 618h2v13h-2zM972 618h2v13h-2zM1006 618h1v13h-1zM1016 618h1v13h-1zM1026 618h1v13h-1zM1027 618h1v13h-1zM1035 618h1v13h-1zM1037 618h2v13h-2zM1044 618h1v13h-1zM1060 618h1v13h-1z"/>
<path fill="#10a28b" d="M105 631h1v8h-1zM106 631h4v8h-4zM116 631h1v8h-1zM128 631h1v8h-1zM142 631h1v8h-1zM157 631h1v8h-1zM164 631h1v8h-1zM166 631h6v8h-6zM178 631h3v8h-3zM192 631h1v8h-1zM202 631h3v8h-3zM249 631h1v8h-1zM258 631h1v8h-1zM286 631h1v8h-1zM289 631h1v8h-1zM291 631h1v8h-1zM301 631h5v8h-5zM311 631h1v8h-1zM326 631h1v8h-1zM351 631h3v8h-3zM363 631h2v8h-2zM375 631h2v8h-2zM378 631h1v8h-1zM394 631h1v8h-1zM414 631h1v8h-1zM418 631h1v8h-1zM432 631h3v8h-3zM455 631h1v8h-1zM473 631h1v8h-1zM477 631h2v8h-2zM510 631h1v8h-1zM528 631h1v8h-1zM536 631h1v8h-1zM537 631h3v8h-3zM563 631h3v8h-3zM570 631h1v8h-1zM577 631h1v8h-1zM585 631h1v8h-1zM591 631h2v8h-2zM639 631h4v8h-4zM666 631h1v8h-1zM673 631h1v8h-1zM765 631h1v8h-1zM767 631h1v8h-1zM786 631h1v8h-1zM787 631h1v8h-1zM788 631h1v8h-1zM797 631h1v8h-1zM809 631h1v8h-1zM815 631h1v8h-1zM816 631h1v8h-1zM824 631h1v8h-1zM825 631h3v8h-3zM828 631h1v8h-1zM829 631h1v8h-1zM836 631h1v8h-1zM847 631h3v8h-3zM854 631h2v8h-2zM869 631h2v8h-2zM874 631h1v8h-1zM885 631h1v8h-1zM889 631h2v8h-2zM908 631h1v8h-1zM918 631h1v8h-1zM928 631h1v8h-1zM930 631h1v8h-1zM931 631h1v8h-1zM934 631h1v8h-1zM938 631h3v8h-3zM941 631h1v8h-1zM950 631h1v8h-1zM962 631h1v8h-1zM972 631h2v8h-2zM977 631h4v8h-4zM1002 631h1v8h-1zM1005 631h1v8h-1zM1022 631h1v8h-1zM1024 631h2v8h-2zM1032 631h2v8h-2zM1035 631h1v8h-1zM1051 631h1v8h-1zM1061 631h1v8h-1z"/>
<path fill="#10a881" d="M117 631h1v8h-1zM134 631h2v8h-2zM144 631h5v8h-5zM173 631h1v8h-1zM174 631h2v8h-2zM176 631h2v8h-2zM181 631h1v8h-1zM188 631h1v8h-1zM211 631h1v8h-1zM226 631h1v8h-1zM227 631h1v8h-1zM230 631h3v8h-3zM235 631h1v8h-1zM243 631h2v8h-2zM252 631h3v8h-3zM260 631h1v8h-1zM261 631h4v8h-4zM284 631h1v8h-1zM293 631h1v8h-1zM313 631h2v8h-2zM329 631h1v8h-1zM350 631h1v8h-1zM362 631h1v8h-1zM402 631h1v8h-1zM424 631h1v8h-1zM466 631h1v8h-1zM520 631h1v8h-1zM535 631h1v8h-1zM540 631h2v8h-2zM595 631h1v8h-1zM621 631h1v8h-1zM631 631h1v8h-1zM636 631h1v8h-1zM643 631h1v8h-1zM664 631h2v8h-2zM679 631h1v8h-1zM745 631h1v8h-1zM790 631h1v8h-1zM792 631h1v8h-1zM800 631h1v8h-1zM805 631h1v8h-1zM808 631h1v8h-1zM819 631h1v8h-1zM822 631h1v8h-1zM883 631h1v8h-1zM891 631h2v8h-2zM920 631h1v8h-1zM936 631h1v8h-1zM944 631h1v8h-1zM953 631h1v8h-1zM957 631h1v8h-1zM964 631h1v8h-1zM966 631h3v8h-3zM997 631h3v8h-3zM1027 631h1v8h-1zM1037 631h1v8h-1zM1044 631h1v8h-1zM1055 631h4v8h-4zM1080 631h1v8h-1zM95 639h2v8h-2zM105 639h2v8h-2zM128 639h2v8h-2zM134 639h2v8h-2zM160 639h1v8h-1zM180 639h2v8h-2zM226 639h2v8h-2zM230 639h3v8h-3zM243 639h1v8h-1zM252 639h3v8h-3zM258 639h1v8h-1zM263 639h2v8h-2zM266 639h2v8h-2zM286 639h1v8h-1zM301 639h4v8h-4zM305 639h1v8h-1zM311 639h1v8h-1zM326 639h1v8h-1zM329 639h1v8h-1zM376 639h1v8h-1zM394 639h1v8h-1zM411 639h2v8h-2zM418 639h1v8h-1zM425 639h2v8h-2zM433 639h2v8h-2zM455 639h1v8h-1zM466 639h1v8h-1zM473 639h1v8h-1zM477 639h1v8h-1zM514 639h1v8h-1zM563 639h3v8h-3zM570 639h1v8h-1zM595 639h1v8h-1zM596 639h1v8h-1zM602 639h1v8h-1zM606 639h3v8h-3zM618 639h1v8h-1zM636 639h1v8h-1zM673 639h1v8h-1zM756 639h1v8h-1zM767 639h1v8h-1zM790 639h1v8h-1zM800 639h1v8h-1zM808 639h1v8h-1zM813 639h1v8h-1zM815 639h1v8h-1zM816 639h1v8h-1zM819 639h1v8h-1zM824 639h6v8h-6zM869 639h2v8h-2zM883 639h1v8h-1zM885 639h1v8h-1zM901 639h4v8h-4zM908 639h1v8h-1zM910 639h1v8h-1zM934 639h1v8h-1zM938 639h2v8h-2zM940 639h2v8h-2zM953 639h1v8h-1zM977 639h3v8h-3zM980 639h1v8h-1zM997 639h2v8h-2zM999 639h1v8h-1zM1005 639h1v8h-1zM1022 639h1v8h-1zM1027 639h1v8h-1zM1037 639h1v8h-1zM1051 639h1v8h-1z"/>
<path fill="#1098a0" d="M95 618h1v13h-1zM141 618h6v13h-6zM177 618h1v13h-1zM184 618h1v13h-1zM192 618h1v13h-1zM195 618h1v13h-1zM208 618h1v13h-1zM243 618h1v13h-1zM254 618h1v13h-1zM286 618h1v13h-1zM289 618h3v13h-3zM293 618h1v13h-1zM301 618h2v13h-2zM326 618h1v13h-1zM356 618h1v13h-1zM361 618h1v13h-1zM375 618h1v13h-1zM410 618h2v13h-2zM468 618h1v13h-1zM485 618h2v13h-2zM499 618h1v13h-1zM522 618h1v13h-1zM530 618h1v13h-1zM535 618h2v13h-2zM540 618h1v13h-1zM544 618h1v13h-1zM572 618h2v13h-2zM588 618h1v13h-1zM591 618h2v13h-2zM595 618h2v13h-2zM602 618h1v13h-1zM606 618h3v13h-3zM616 618h1v13h-1zM617 618h1v13h-1zM626 618h2v13h-2zM652 618h1v13h-1zM673 618h1v13h-1zM769 618h1v13h-1zM781 618h1v13h-1zM799 618h1v13h-1zM802 618h1v13h-1zM807 618h1v13h-1zM815 618h1v13h-1zM816 618h1v13h-1zM819 618h1v13h-1zM824 618h1v13h-1zM848 618h1v13h-1zM852 618h1v13h-1zM869 618h2v13h-2zM890 618h1v13h-1zM901 618h4v13h-4zM912 618h1v13h-1zM918 618h1v13h-1zM923 618h1v13h-1zM931 618h1v13h-1zM937 618h1v13h-1zM952 618h1v13h-1zM954 618h2v13h-2zM957 618h3v13h-3zM967 618h2v13h-2zM976 618h5v13h-5zM987 618h2v13h-2zM992 618h3v13h-3zM1004 618h1v13h-1zM1008 618h1v13h-1zM1031 618h1v13h-1zM1032 618h1v13h-1zM1034 618h1v13h-1zM1049 618h1v13h-1z"/>
<path fill="#1091a9" d="M105 618h1v13h-1zM115 618h2v13h-2zM117 618h1v13h-1zM127 618h2v13h-2zM132 618h1v13h-1zM140 618h1v13h-1zM152 618h1v13h-1zM172 618h1v13h-1zM187 618h2v13h-2zM244 618h1v13h-1zM269 618h1v13h-1zM270 618h1v13h-1zM329 618h1v13h-1zM350 618h4v13h-4zM379 618h1v13h-1zM382 618h1v13h-1zM395 618h1v13h-1zM418 618h1v13h-1zM430 618h1v13h-1zM432 618h2v13h-2zM471 618h2v13h-2zM481 618h1v13h-1zM545 618h4v13h-4zM549 618h1v13h-1zM555 618h1v13h-1zM562 618h2v13h-2zM637 618h1v13h-1zM794 618h1v13h-1zM822 618h1v13h-1zM849 618h2v13h-2zM855 618h2v13h-2zM860 618h1v13h-1zM872 618h1v13h-1zM891 618h2v13h-2zM908 618h1v13h-1zM910 618h1v13h-1zM928 618h1v13h-1zM948 618h1v13h-1zM963 618h1v13h-1zM983 618h1v13h-1zM998 618h2v13h-2zM1023 618h1v13h-1zM1054 618h2v13h-2zM1077 618h1v13h-1zM127 606h2v12h-2zM132 606h1v12h-1zM221 606h1v12h-1zM227 606h1v12h-1zM266 606h2v12h-2zM283 606h2v12h-2zM321 606h2v12h-2zM356 606h2v12h-2zM360 606h2v12h-2zM367 606h1v12h-1zM372 606h3v12h-3zM382 606h1v12h-1zM410 606h6v12h-6zM447 606h1v12h-1zM451 606h1v12h-1zM481 606h1v12h-1zM487 606h1v12h-1zM511 606h1v12h-1zM520 606h1v12h-1zM525 606h1v12h-1zM543 606h1v12h-1zM591 606h2v12h-2zM625 606h2v12h-2zM628 606h3v12h-3zM669 606h1v12h-1zM684 606h1v12h-1zM773 606h1v12h-1zM852 606h2v12h-2zM957 606h3v12h-3zM1004 606h1v12h-1zM1015 606h2v12h-2zM1031 606h2v12h-2zM1034 606h2v12h-2zM1037 606h2v12h-2z"/>
<path fill="#108ab3" d="M105 606h1v12h-1zM116 606h1v12h-1zM140 606h2v12h-2zM145 606h3v12h-3zM159 606h1v12h-1zM200 606h1v12h-1zM203 606h1v12h-1zM205 606h1v12h-1zM213 606h1v12h-1zM235 606h3v12h-3zM240 606h1v12h-1zM248 606h1v12h-1zM259 606h1v12h-1zM306 606h1v12h-1zM308 606h1v12h-1zM326 606h1v12h-1zM329 606h1v12h-1zM352 606h1v12h-1zM364 606h2v12h-2zM408 606h1v12h-1zM416 606h2v12h-2zM432 606h1v12h-1zM455 606h1v12h-1zM516 606h1v12h-1zM518 606h1v12h-1zM533 606h1v12h-1zM535 606h2v12h-2zM538 606h1v12h-1zM539 606h1v12h-1zM552 606h1v12h-1zM554 606h1v12h-1zM572 606h3v12h-3zM586 606h1v12h-1zM590 606h1v12h-1zM602 606h1v12h-1zM613 606h1v12h-1zM635 606h1v12h-1zM651 606h2v12h-2zM680 606h1v12h-1zM682 606h1v12h-1zM758 606h3v12h-3zM788 606h1v12h-1zM816 606h1v12h-1zM831 606h2v12h-2zM849 606h2v12h-2zM854 606h1v12h-1zM855 606h2v12h-2zM870 606h1v12h-1zM872 606h2v12h-2zM891 606h1v12h-1zM905 606h2v12h-2zM921 606h1v12h-1zM936 606h1v12h-1zM938 606h1v12h-1zM941 606h1v12h-1zM943 606h1v12h-1zM950 606h1v12h-1zM961 606h1v12h-1zM972 606h2v12h-2zM974 606h2v12h-2zM1014 606h1v12h-1zM1044 606h1v12h-1zM1049 606h1v12h-1zM1055 606h1v12h-1z"/>
<path fill="#1083bc" d="M120 606h2v12h-2zM135 606h1v12h-1zM142 606h3v12h-3zM152 606h1v12h-1zM161 606h2v12h-2zM172 606h1v12h-1zM271 606h1v12h-1zM301 606h1v12h-1zM302 606h1v12h-1zM303 606h3v12h-3zM310 606h1v12h-1zM312 606h1v12h-1zM319 606h1v12h-1zM332 606h1v12h-1zM376 606h4v12h-4zM395 606h1v12h-1zM420 606h1v12h-1zM426 606h1v12h-1zM428 606h1v12h-1zM433 606h1v12h-1zM475 606h1v12h-1zM485 606h1v12h-1zM499 606h1v12h-1zM508 606h1v12h-1zM522 606h1v12h-1zM530 606h1v12h-1zM546 606h1v12h-1zM562 606h2v12h-2zM566 606h4v12h-4zM584 606h1v12h-1zM597 606h1v12h-1zM606 606h2v12h-2zM608 606h1v12h-1zM645 606h2v12h-2zM649 606h1v12h-1zM660 606h2v12h-2zM663 606h1v12h-1zM665 606h1v12h-1zM756 606h1v12h-1zM766 606h2v12h-2zM781 606h1v12h-1zM796 606h1v12h-1zM842 606h1v12h-1zM848 606h1v12h-1zM869 606h1v12h-1zM879 606h1v12h-1zM899 606h1v12h-1zM901 606h2v12h-2zM912 606h1v12h-1zM920 606h1v12h-1zM923 606h3v12h-3zM929 606h2v12h-2zM948 606h1v12h-1zM952 606h1v12h-1zM954 606h1v12h-1zM955 606h1v12h-1zM969 606h1v12h-1zM984 606h3v12h-3zM1001 606h1v12h-1zM1021 606h1v12h-1zM1054 606h1v12h-1zM1069 606h1v12h-1zM1077 606h1v12h-1zM133 593h2v13h-2zM152 593h1v13h-1zM179 593h1v13h-1zM181 593h1v13h-1zM224 593h1v13h-1zM233 593h3v13h-3zM241 593h1v13h-1zM257 593h1v13h-1zM277 593h2v13h-2zM285 593h1v13h-1zM312 593h1v13h-1zM385 593h1v13h-1zM392 593h1v13h-1zM436 593h1v13h-1zM451 593h1v13h-1zM485 593h1v13h-1zM494 593h1v13h-1zM503 593h1v13h-1zM536 593h1v13h-1zM546 593h1v13h-1zM638 593h2v13h-2zM735 593h1v13h-1zM781 593h1v13h-1zM784 593h1v13h-1zM822 593h1v13h-1zM823 593h2v13h-2zM852 593h5v13h-5zM862 593h1v13h-1zM917 593h2v13h-2zM948 593h1v13h-1zM1051 593h1v13h-1zM1058 593h1v13h-1z"/>
<path fill="#1072e3" d="M95 581h1v12h-1zM107 581h1v12h-1zM115 581h2v12h-2zM118 581h2v12h-2zM122 581h1v12h-1zM125 581h2v12h-2zM133 581h2v12h-2zM136 581h1v12h-1zM142 581h6v12h-6zM152 581h1v12h-1zM155 581h1v12h-1zM173 581h1v12h-1zM183 581h1v12h-1zM186 581h1v12h-1zM194 581h1v12h-1zM200 581h1v12h-1zM213 581h1v12h-1zM220 581h1v12h-1zM228 581h1v12h-1zM231 581h1v12h-1zM233 581h3v12h-3zM247 581h2v12h-2zM259 581h1v12h-1zM262 581h1v12h-1zM271 581h1v12h-1zM273 581h1v12h-1zM277 581h1v12h-1zM278 581h1v12h-1zM287 581h1v12h-1zM289 581h1v12h-1zM298 581h1v12h-1zM303 581h2v12h-2zM308 581h1v12h-1zM312 581h1v12h-1zM321 581h1v12h-1zM323 581h1v12h-1zM327 581h1v12h-1zM352 581h1v12h-1zM355 581h1v12h-1zM366 581h1v12h-1zM371 581h4v12h-4zM376 581h3v12h-3zM382 581h1v12h-1zM387 581h3v12h-3zM396 581h1v12h-1zM416 581h1v12h-1zM428 581h1v12h-1zM431 581h1v12h-1zM441 581h2v12h-2zM444 581h1v12h-1zM447 581h1v12h-1zM459 581h1v12h-1zM461 581h1v12h-1zM467 581h1v12h-1zM493 581h2v12h-2zM503 581h1v12h-1zM511 581h1v12h-1zM533 581h2v12h-2zM543 581h1v12h-1zM546 581h1v12h-1zM551 581h1v12h-1zM572 581h1v12h-1zM577 581h1v12h-1zM586 581h1v12h-1zM663 581h1v12h-1zM668 581h1v12h-1zM681 581h2v12h-2zM701 581h1v12h-1zM737 581h1v12h-1zM745 581h1v12h-1zM756 581h1v12h-1zM772 581h1v12h-1zM776 581h1v12h-1zM786 581h1v12h-1zM791 581h1v12h-1zM809 581h1v12h-1zM816 581h1v12h-1zM829 581h1v12h-1zM849 581h2v12h-2zM852 581h5v12h-5zM862 581h2v12h-2zM893 581h1v12h-1zM899 581h1v12h-1zM901 581h2v12h-2zM915 581h1v12h-1zM920 581h2v12h-2zM925 581h2v12h-2zM939 581h1v12h-1zM940 581h1v12h-1zM944 581h1v12h-1zM948 581h1v12h-1zM969 581h1v12h-1zM972 581h1v12h-1zM1001 581h1v12h-1zM1014 581h2v12h-2zM1019 581h1v12h-1zM1032 581h1v12h-1zM1072 581h3v12h-3z"/>
<path fill="#1367ec" d="M102 581h1v12h-1zM110 581h2v12h-2zM129 581h1v12h-1zM154 581h1v12h-1zM161 581h2v12h-2zM171 581h1v12h-1zM176 581h2v12h-2zM179 581h1v12h-1zM181 581h1v12h-1zM192 581h1v12h-1zM203 581h1v12h-1zM205 581h1v12h-1zM219 581h1v12h-1zM224 581h2v12h-2zM255 581h1v12h-1zM257 581h1v12h-1zM280 581h1v12h-1zM285 581h1v12h-1zM290 581h1v12h-1zM300 581h2v12h-2zM306 581h1v12h-1zM328 581h1v12h-1zM329 581h1v12h-1zM348 581h2v12h-2zM351 581h1v12h-1zM362 581h2v12h-2zM385 581h1v12h-1zM392 581h1v12h-1zM408 581h1v12h-1zM417 581h1v12h-1zM420 581h1v12h-1zM426 581h1v12h-1zM433 581h1v12h-1zM434 581h1v12h-1zM439 581h1v12h-1zM451 581h1v12h-1zM465 581h1v12h-1zM475 581h1v12h-1zM481 581h1v12h-1zM483 581h1v12h-1zM485 581h1v12h-1zM487 581h1v12h-1zM498 581h1v12h-1zM508 581h1v12h-1zM516 581h1v12h-1zM523 581h2v12h-2zM530 581h1v12h-1zM538 581h1v12h-1zM554 581h1v12h-1zM556 581h1v12h-1zM560 581h2v12h-2zM566 581h1v12h-1zM568 581h1v12h-1zM576 581h1v12h-1zM596 581h2v12h-2zM599 581h1v12h-1zM613 581h1v12h-1zM626 581h1v12h-1zM635 581h1v12h-1zM638 581h2v12h-2zM645 581h1v12h-1zM648 581h1v12h-1zM665 581h1v12h-1zM673 581h1v12h-1zM733 581h1v12h-1zM739 581h1v12h-1zM741 581h1v12h-1zM766 581h1v12h-1zM784 581h1v12h-1zM795 581h2v12h-2zM804 581h1v12h-1zM822 581h3v12h-3zM833 581h1v12h-1zM842 581h1v12h-1zM848 581h1v12h-1zM889 581h1v12h-1zM896 581h1v12h-1zM905 581h1v12h-1zM906 581h1v12h-1zM917 581h2v12h-2zM923 581h2v12h-2zM929 581h2v12h-2zM938 581h1v12h-1zM942 581h1v12h-1zM950 581h1v12h-1zM952 581h1v12h-1zM954 581h2v12h-2zM957 581h2v12h-2zM978 581h1v12h-1zM984 581h1v12h-1zM986 581h1v12h-1zM995 581h1v12h-1zM1017 581h1v12h-1zM1023 581h2v12h-2zM1036 581h1v12h-1zM1041 581h1v12h-1zM1048 581h1v12h-1zM1051 581h3v12h-3zM1056 581h1v12h-1zM1058 581h1v12h-1zM1070 581h1v12h-1zM1076 581h1v12h-1z"/>
<path fill="#1857f4" d="M105 581h1v12h-1zM157 581h1v12h-1zM245 581h1v12h-1zM276 581h1v12h-1zM310 581h1v12h-1zM358 581h2v12h-2zM463 581h1v12h-1zM528 581h1v12h-1zM539 581h1v12h-1zM606 581h3v12h-3zM660 581h1v12h-1zM735 581h1v12h-1zM959 581h1v12h-1zM1038 581h2v12h-2z"/>
<path fill="#1077d5" d="M124 581h1v12h-1zM138 581h1v12h-1zM197 581h1v12h-1zM241 581h1v12h-1zM319 581h1v12h-1zM332 581h1v12h-1zM379 581h1v12h-1zM410 581h6v12h-6zM436 581h1v12h-1zM455 581h1v12h-1zM518 581h1v12h-1zM536 581h1v12h-1zM584 581h1v12h-1zM630 581h1v12h-1zM661 581h1v12h-1zM689 581h1v12h-1zM696 581h1v12h-1zM743 581h1v12h-1zM757 581h1v12h-1zM781 581h1v12h-1zM866 581h1v12h-1zM879 581h1v12h-1zM912 581h1v12h-1zM961 581h1v12h-1zM990 581h1v12h-1zM1006 581h1v12h-1zM1026 581h2v12h-2zM1046 581h1v12h-1zM95 593h1v13h-1zM115 593h2v13h-2zM136 593h1v13h-1zM144 593h4v13h-4zM173 593h1v13h-1zM177 593h1v13h-1zM186 593h1v13h-1zM194 593h1v13h-1zM197 593h1v13h-1zM213 593h1v13h-1zM225 593h1v13h-1zM228 593h1v13h-1zM231 593h1v13h-1zM245 593h1v13h-1zM259 593h1v13h-1zM287 593h1v13h-1zM289 593h2v13h-2zM300 593h2v13h-2zM303 593h2v13h-2zM306 593h1v13h-1zM310 593h1v13h-1zM323 593h1v13h-1zM327 593h3v13h-3zM332 593h1v13h-1zM348 593h2v13h-2zM351 593h1v13h-1zM382 593h1v13h-1zM387 593h1v13h-1zM408 593h1v13h-1zM433 593h1v13h-1zM447 593h1v13h-1zM493 593h1v13h-1zM508 593h1v13h-1zM538 593h2v13h-2zM551 593h1v13h-1zM554 593h1v13h-1zM556 593h1v13h-1zM566 593h1v13h-1zM568 593h1v13h-1zM572 593h1v13h-1zM597 593h1v13h-1zM613 593h1v13h-1zM635 593h1v13h-1zM645 593h1v13h-1zM663 593h1v13h-1zM668 593h1v13h-1zM737 593h1v13h-1zM739 593h1v13h-1zM745 593h1v13h-1zM766 593h1v13h-1zM772 593h1v13h-1zM776 593h1v13h-1zM786 593h1v13h-1zM848 593h2v13h-2zM863 593h1v13h-1zM879 593h1v13h-1zM889 593h1v13h-1zM893 593h1v13h-1zM899 593h1v13h-1zM912 593h1v13h-1zM915 593h1v13h-1zM926 593h1v13h-1zM939 593h1v13h-1zM940 593h1v13h-1zM950 593h1v13h-1zM952 593h1v13h-1zM954 593h2v13h-2zM957 593h3v13h-3zM978 593h1v13h-1zM986 593h1v13h-1zM995 593h1v13h-1zM1001 593h1v13h-1zM1017 593h1v13h-1zM1023 593h2v13h-2zM1032 593h1v13h-1zM1036 593h1v13h-1zM1038 593h2v13h-2zM1041 593h1v13h-1zM1046 593h1v13h-1zM1048 593h1v13h-1zM1052 593h2v13h-2zM1056 593h1v13h-1zM1070 593h1v13h-1zM1074 593h1v13h-1zM1076 593h1v13h-1z"/>
<path fill="#107dc8" d="M102 593h1v13h-1zM105 593h1v13h-1zM107 593h1v13h-1zM110 593h2v13h-2zM118 593h2v13h-2zM122 593h1v13h-1zM124 593h3v13h-3zM129 593h1v13h-1zM138 593h1v13h-1zM142 593h2v13h-2zM154 593h2v13h-2zM157 593h1v13h-1zM161 593h2v13h-2zM171 593h1v13h-1zM176 593h1v13h-1zM183 593h1v13h-1zM192 593h1v13h-1zM200 593h1v13h-1zM203 593h1v13h-1zM205 593h1v13h-1zM219 593h2v13h-2zM247 593h2v13h-2zM255 593h1v13h-1zM262 593h1v13h-1zM271 593h1v13h-1zM273 593h1v13h-1zM276 593h1v13h-1zM280 593h1v13h-1zM298 593h1v13h-1zM308 593h1v13h-1zM319 593h1v13h-1zM321 593h1v13h-1zM352 593h1v13h-1zM355 593h1v13h-1zM358 593h2v13h-2zM362 593h2v13h-2zM366 593h1v13h-1zM371 593h1v13h-1zM372 593h3v13h-3zM376 593h1v13h-1zM377 593h3v13h-3zM388 593h2v13h-2zM396 593h1v13h-1zM410 593h4v13h-4zM414 593h2v13h-2zM416 593h2v13h-2zM420 593h1v13h-1zM426 593h1v13h-1zM428 593h1v13h-1zM431 593h1v13h-1zM434 593h1v13h-1zM439 593h1v13h-1zM441 593h1v13h-1zM442 593h1v13h-1zM444 593h1v13h-1zM455 593h1v13h-1zM459 593h1v13h-1zM461 593h1v13h-1zM463 593h1v13h-1zM465 593h1v13h-1zM467 593h1v13h-1zM475 593h1v13h-1zM481 593h1v13h-1zM483 593h1v13h-1zM487 593h1v13h-1zM498 593h1v13h-1zM511 593h1v13h-1zM516 593h1v13h-1zM518 593h1v13h-1zM523 593h2v13h-2zM528 593h1v13h-1zM530 593h1v13h-1zM533 593h2v13h-2zM543 593h1v13h-1zM560 593h1v13h-1zM561 593h1v13h-1zM576 593h2v13h-2zM584 593h1v13h-1zM586 593h1v13h-1zM596 593h1v13h-1zM599 593h1v13h-1zM606 593h3v13h-3zM626 593h1v13h-1zM630 593h1v13h-1zM648 593h1v13h-1zM660 593h2v13h-2zM665 593h1v13h-1zM673 593h1v13h-1zM681 593h2v13h-2zM689 593h1v13h-1zM696 593h1v13h-1zM701 593h1v13h-1zM733 593h1v13h-1zM741 593h1v13h-1zM743 593h1v13h-1zM756 593h2v13h-2zM791 593h1v13h-1zM795 593h1v13h-1zM796 593h1v13h-1zM804 593h1v13h-1zM809 593h1v13h-1zM816 593h1v13h-1zM829 593h1v13h-1zM833 593h1v13h-1zM842 593h1v13h-1zM850 593h1v13h-1zM866 593h1v13h-1zM896 593h1v13h-1zM901 593h2v13h-2zM905 593h2v13h-2zM920 593h1v13h-1zM921 593h1v13h-1zM923 593h3v13h-3zM929 593h2v13h-2zM938 593h1v13h-1zM942 593h1v13h-1zM944 593h1v13h-1zM961 593h1v13h-1zM969 593h1v13h-1zM972 593h1v13h-1zM984 593h1v13h-1zM990 593h1v13h-1zM1006 593h1v13h-1zM1014 593h2v13h-2zM1019 593h1v13h-1zM1026 593h2v13h-2zM1072 593h2v13h-2z"/>
<path fill="#1c2de9" d="M95 568h2v13h-2zM112 568h1v13h-1zM144 568h4v13h-4zM154 568h1v13h-1zM167 568h1v13h-1zM209 568h2v13h-2zM228 568h1v13h-1zM245 568h1v13h-1zM284 568h1v13h-1zM359 568h1v13h-1zM392 568h2v13h-2zM398 568h1v13h-1zM405 568h2v13h-2zM420 568h1v13h-1zM428 568h1v13h-1zM441 568h2v13h-2zM447 568h1v13h-1zM451 568h1v13h-1zM455 568h1v13h-1zM473 568h1v13h-1zM480 568h1v13h-1zM523 568h1v13h-1zM524 568h1v13h-1zM528 568h1v13h-1zM530 568h1v13h-1zM551 568h1v13h-1zM570 568h1v13h-1zM572 568h2v13h-2zM589 568h1v13h-1zM597 568h4v13h-4zM605 568h1v13h-1zM635 568h2v13h-2zM639 568h4v13h-4zM684 568h1v13h-1zM689 568h1v13h-1zM779 568h2v13h-2zM790 568h1v13h-1zM800 568h1v13h-1zM815 568h1v13h-1zM817 568h2v13h-2zM820 568h1v13h-1zM869 568h1v13h-1zM896 568h1v13h-1zM899 568h1v13h-1zM968 568h1v13h-1zM1032 568h1v13h-1zM1041 568h1v13h-1zM1045 568h2v13h-2zM1068 568h1v13h-1zM95 552h2v16h-2zM100 552h3v16h-3zM103 552h2v16h-2zM144 552h2v16h-2zM153 552h1v16h-1zM156 552h1v16h-1zM175 552h1v16h-1zM179 552h1v16h-1zM183 552h1v16h-1zM188 552h2v16h-2zM209 552h2v16h-2zM212 552h1v16h-1zM233 552h3v16h-3zM251 552h1v16h-1zM258 552h1v16h-1zM284 552h1v16h-1zM302 552h2v16h-2zM355 552h2v16h-2zM420 552h1v16h-1zM438 552h1v16h-1zM453 552h1v16h-1zM467 552h1v16h-1zM480 552h1v16h-1zM522 552h1v16h-1zM535 552h1v16h-1zM540 552h1v16h-1zM559 552h2v16h-2zM579 552h1v16h-1zM597 552h2v16h-2zM626 552h1v16h-1zM631 552h1v16h-1zM659 552h1v16h-1zM680 552h1v16h-1zM684 552h1v16h-1zM750 552h2v16h-2zM788 552h1v16h-1zM805 552h2v16h-2zM807 552h1v16h-1zM808 552h1v16h-1zM841 552h2v16h-2zM860 552h2v16h-2zM867 552h1v16h-1zM877 552h1v16h-1zM879 552h1v16h-1zM900 552h1v16h-1zM908 552h1v16h-1zM935 552h4v16h-4zM952 552h1v16h-1zM958 552h2v16h-2zM961 552h1v16h-1zM966 552h1v16h-1zM968 552h1v16h-1zM988 552h1v16h-1zM991 552h3v16h-3zM1010 552h1v16h-1zM1043 552h1v16h-1zM1055 552h2v16h-2zM182 527h1v13h-1zM228 527h1v13h-1zM302 527h1v13h-1zM362 527h1v13h-1zM374 527h1v13h-1zM388 527h3v13h-3zM413 527h1v13h-1zM447 527h1v13h-1zM484 527h1v13h-1zM501 527h1v13h-1zM583 527h2v13h-2zM629 527h2v13h-2zM676 527h1v13h-1zM705 527h1v13h-1zM838 527h1v13h-1zM856 527h1v13h-1zM864 527h1v13h-1zM875 527h1v13h-1zM906 527h1v13h-1zM960 527h3v13h-3zM987 527h1v13h-1zM1000 527h1v13h-1zM102 540h1v12h-1zM103 540h2v12h-2zM113 540h1v12h-1zM121 540h1v12h-1zM128 540h1v12h-1zM167 540h1v12h-1zM169 540h1v12h-1zM174 540h3v12h-3zM192 540h2v12h-2zM213 540h1v12h-1zM238 540h1v12h-1zM251 540h1v12h-1zM258 540h1v12h-1zM266 540h1v12h-1zM269 540h1v12h-1zM277 540h1v12h-1zM289 540h1v12h-1zM302 540h1v12h-1zM306 540h1v12h-1zM307 540h1v12h-1zM319 540h1v12h-1zM333 540h1v12h-1zM355 540h1v12h-1zM358 540h3v12h-3zM372 540h1v12h-1zM374 540h2v12h-2zM397 540h1v12h-1zM408 540h1v12h-1zM416 540h1v12h-1zM422 540h1v12h-1zM449 540h2v12h-2zM458 540h1v12h-1zM459 540h2v12h-2zM467 540h1v12h-1zM474 540h1v12h-1zM476 540h1v12h-1zM480 540h1v12h-1zM484 540h1v12h-1zM501 540h1v12h-1zM505 540h3v12h-3zM515 540h3v12h-3zM560 540h1v12h-1zM572 540h1v12h-1zM579 540h1v12h-1zM586 540h1v12h-1zM597 540h4v12h-4zM605 540h1v12h-1zM650 540h1v12h-1zM663 540h1v12h-1zM673 540h1v12h-1zM676 540h1v12h-1zM684 540h1v12h-1zM705 540h1v12h-1zM707 540h1v12h-1zM733 540h1v12h-1zM782 540h2v12h-2zM790 540h1v12h-1zM804 540h1v12h-1zM820 540h1v12h-1zM827 540h1v12h-1zM838 540h1v12h-1zM847 540h1v12h-1zM856 540h1v12h-1zM858 540h2v12h-2zM861 540h1v12h-1zM867 540h1v12h-1zM878 540h3v12h-3zM882 540h1v12h-1zM906 540h1v12h-1zM916 540h1v12h-1zM958 540h5v12h-5zM982 540h1v12h-1zM987 540h1v12h-1zM993 540h1v12h-1zM1000 540h1v12h-1zM1022 540h1v12h-1zM1035 540h3v12h-3zM1042 540h1v12h-1zM1045 540h2v12h-2zM1061 540h2v12h-2z"/>
<path fill="#1f3af8" d="M134 568h1v13h-1zM176 568h2v13h-2zM179 568h1v13h-1zM200 568h1v13h-1zM212 568h1v13h-1zM214 568h1v13h-1zM217 568h1v13h-1zM231 568h1v13h-1zM233 568h3v13h-3zM241 568h1v13h-1zM258 568h1v13h-1zM263 568h1v13h-1zM271 568h1v13h-1zM273 568h1v13h-1zM276 568h3v13h-3zM287 568h2v13h-2zM298 568h1v13h-1zM304 568h1v13h-1zM308 568h1v13h-1zM318 568h2v13h-2zM327 568h1v13h-1zM352 568h1v13h-1zM373 568h1v13h-1zM386 568h1v13h-1zM391 568h1v13h-1zM401 568h2v13h-2zM408 568h1v13h-1zM414 568h4v13h-4zM430 568h1v13h-1zM463 568h1v13h-1zM465 568h1v13h-1zM492 568h1v13h-1zM533 568h1v13h-1zM535 568h2v13h-2zM538 568h1v13h-1zM554 568h1v13h-1zM556 568h1v13h-1zM566 568h1v13h-1zM620 568h1v13h-1zM630 568h1v13h-1zM656 568h2v13h-2zM673 568h2v13h-2zM675 568h1v13h-1zM678 568h1v13h-1zM776 568h1v13h-1zM792 568h2v13h-2zM827 568h1v13h-1zM831 568h2v13h-2zM840 568h1v13h-1zM843 568h1v13h-1zM866 568h1v13h-1zM877 568h1v13h-1zM879 568h1v13h-1zM889 568h1v13h-1zM893 568h1v13h-1zM907 568h3v13h-3zM910 568h1v13h-1zM922 568h2v13h-2zM938 568h1v13h-1zM946 568h1v13h-1zM950 568h1v13h-1zM954 568h2v13h-2zM961 568h1v13h-1zM980 568h1v13h-1zM991 568h1v13h-1zM992 568h2v13h-2zM1000 568h1v13h-1zM1055 568h2v13h-2zM1077 568h1v13h-1zM1079 568h2v13h-2zM106 552h1v16h-1zM110 552h1v16h-1zM117 552h1v16h-1zM146 552h2v16h-2zM161 552h4v16h-4zM181 552h1v16h-1zM219 552h1v16h-1zM228 552h1v16h-1zM237 552h1v16h-1zM271 552h1v16h-1zM273 552h1v16h-1zM276 552h3v16h-3zM298 552h1v16h-1zM305 552h1v16h-1zM318 552h2v16h-2zM333 552h1v16h-1zM338 552h2v16h-2zM386 552h2v16h-2zM407 552h2v16h-2zM414 552h4v16h-4zM436 552h1v16h-1zM447 552h1v16h-1zM462 552h1v16h-1zM492 552h1v16h-1zM516 552h1v16h-1zM517 552h1v16h-1zM541 552h1v16h-1zM575 552h1v16h-1zM605 552h1v16h-1zM620 552h1v16h-1zM650 552h1v16h-1zM655 552h4v16h-4zM665 552h2v16h-2zM673 552h3v16h-3zM794 552h1v16h-1zM820 552h1v16h-1zM851 552h1v16h-1zM887 552h1v16h-1zM897 552h1v16h-1zM910 552h1v16h-1zM916 552h1v16h-1zM925 552h1v16h-1zM954 552h1v16h-1zM973 552h3v16h-3zM978 552h2v16h-2zM1000 552h1v16h-1zM1022 552h1v16h-1zM107 540h2v12h-2zM109 540h1v12h-1zM123 540h1v12h-1zM135 540h1v12h-1zM156 540h1v12h-1zM162 540h3v12h-3zM197 540h1v12h-1zM219 540h1v12h-1zM233 540h1v12h-1zM235 540h2v12h-2zM284 540h1v12h-1zM338 540h2v12h-2zM362 540h1v12h-1zM369 540h1v12h-1zM444 540h1v12h-1zM492 540h1v12h-1zM494 540h1v12h-1zM588 540h1v12h-1zM629 540h2v12h-2zM651 540h1v12h-1zM655 540h4v12h-4zM659 540h1v12h-1zM666 540h1v12h-1zM668 540h2v12h-2zM690 540h1v12h-1zM744 540h2v12h-2zM747 540h1v12h-1zM750 540h2v12h-2zM835 540h2v12h-2zM843 540h3v12h-3zM887 540h1v12h-1zM900 540h1v12h-1zM911 540h1v12h-1zM914 540h1v12h-1zM925 540h1v12h-1zM929 540h2v12h-2zM935 540h3v12h-3zM944 540h1v12h-1zM950 540h1v12h-1zM972 540h4v12h-4zM989 540h1v12h-1zM1030 540h2v12h-2zM1033 540h1v12h-1zM1040 540h1v12h-1zM1051 540h1v12h-1z"/>
<path fill="#1d48fb" d="M152 568h1v13h-1zM163 568h1v13h-1zM170 568h2v13h-2zM181 568h1v13h-1zM183 568h1v13h-1zM197 568h1v13h-1zM302 568h1v13h-1zM321 568h1v13h-1zM323 568h1v13h-1zM347 568h3v13h-3zM361 568h1v13h-1zM426 568h1v13h-1zM436 568h1v13h-1zM459 568h1v13h-1zM467 568h1v13h-1zM560 568h2v13h-2zM574 568h1v13h-1zM584 568h1v13h-1zM626 568h1v13h-1zM634 568h1v13h-1zM660 568h1v13h-1zM661 568h1v13h-1zM664 568h5v13h-5zM695 568h1v13h-1zM750 568h2v13h-2zM772 568h1v13h-1zM783 568h2v13h-2zM786 568h2v13h-2zM851 568h1v13h-1zM864 568h1v13h-1zM904 568h1v13h-1zM928 568h2v13h-2zM952 568h1v13h-1zM957 568h3v13h-3zM966 568h1v13h-1zM988 568h1v13h-1zM1011 568h1v13h-1zM1013 568h4v13h-4zM1022 568h1v13h-1zM1025 568h2v13h-2zM1035 568h1v13h-1zM1043 568h1v13h-1zM395 552h1v16h-1zM599 552h2v16h-2zM827 552h1v16h-1zM864 552h1v16h-1zM944 552h1v16h-1zM1079 552h1v16h-1z"/>
<path fill="#1a21da" d="M135 552h1v16h-1zM194 552h4v16h-4zM200 552h1v16h-1zM213 552h1v16h-1zM231 552h1v16h-1zM263 552h1v16h-1zM287 552h2v16h-2zM364 552h1v16h-1zM397 552h1v16h-1zM444 552h1v16h-1zM458 552h1v16h-1zM465 552h1v16h-1zM495 552h1v16h-1zM587 552h1v16h-1zM634 552h3v16h-3zM667 552h2v16h-2zM700 552h1v16h-1zM734 552h2v16h-2zM781 552h1v16h-1zM929 552h1v16h-1zM950 552h1v16h-1zM982 552h1v16h-1zM1080 552h1v16h-1zM95 527h2v13h-2zM100 527h4v13h-4zM104 527h1v13h-1zM113 527h1v13h-1zM117 527h1v13h-1zM123 527h1v13h-1zM175 527h2v13h-2zM180 527h1v13h-1zM184 527h1v13h-1zM192 527h2v13h-2zM231 527h1v13h-1zM235 527h2v13h-2zM258 527h1v13h-1zM269 527h1v13h-1zM272 527h1v13h-1zM293 527h2v13h-2zM299 527h1v13h-1zM319 527h1v13h-1zM333 527h1v13h-1zM338 527h2v13h-2zM355 527h1v13h-1zM369 527h1v13h-1zM375 527h2v13h-2zM393 527h1v13h-1zM397 527h1v13h-1zM402 527h2v13h-2zM408 527h1v13h-1zM422 527h1v13h-1zM444 527h1v13h-1zM449 527h2v13h-2zM452 527h1v13h-1zM467 527h1v13h-1zM476 527h1v13h-1zM486 527h1v13h-1zM487 527h2v13h-2zM541 527h1v13h-1zM572 527h1v13h-1zM579 527h1v13h-1zM588 527h1v13h-1zM655 527h1v13h-1zM658 527h2v13h-2zM668 527h1v13h-1zM669 527h1v13h-1zM682 527h1v13h-1zM690 527h1v13h-1zM707 527h1v13h-1zM733 527h1v13h-1zM740 527h1v13h-1zM744 527h2v13h-2zM787 527h1v13h-1zM789 527h2v13h-2zM792 527h1v13h-1zM793 527h2v13h-2zM804 527h1v13h-1zM820 527h1v13h-1zM827 527h1v13h-1zM840 527h1v13h-1zM847 527h1v13h-1zM858 527h2v13h-2zM882 527h1v13h-1zM925 527h1v13h-1zM935 527h4v13h-4zM950 527h1v13h-1zM975 527h1v13h-1zM993 527h1v13h-1zM998 527h1v13h-1zM1030 527h2v13h-2zM1035 527h3v13h-3zM1042 527h1v13h-1zM1048 527h2v13h-2zM1051 527h1v13h-1zM1059 527h1v13h-1zM1079 527h1v13h-1zM95 540h2v12h-2zM100 540h2v12h-2zM117 540h1v12h-1zM144 540h4v12h-4zM153 540h1v12h-1zM161 540h1v12h-1zM180 540h1v12h-1zM182 540h1v12h-1zM184 540h1v12h-1zM205 540h1v12h-1zM228 540h1v12h-1zM231 540h1v12h-1zM240 540h1v12h-1zM262 540h3v12h-3zM272 540h1v12h-1zM280 540h1v12h-1zM293 540h1v12h-1zM294 540h1v12h-1zM297 540h2v12h-2zM299 540h2v12h-2zM357 540h1v12h-1zM376 540h1v12h-1zM380 540h2v12h-2zM388 540h2v12h-2zM390 540h1v12h-1zM393 540h1v12h-1zM402 540h2v12h-2zM413 540h1v12h-1zM418 540h2v12h-2zM438 540h1v12h-1zM447 540h1v12h-1zM452 540h1v12h-1zM454 540h1v12h-1zM462 540h1v12h-1zM465 540h1v12h-1zM486 540h4v12h-4zM499 540h1v12h-1zM520 540h3v12h-3zM541 540h1v12h-1zM542 540h1v12h-1zM575 540h2v12h-2zM583 540h2v12h-2zM623 540h1v12h-1zM640 540h1v12h-1zM642 540h2v12h-2zM682 540h1v12h-1zM723 540h1v12h-1zM740 540h1v12h-1zM787 540h1v12h-1zM789 540h1v12h-1zM792 540h3v12h-3zM840 540h1v12h-1zM853 540h2v12h-2zM864 540h1v12h-1zM871 540h3v12h-3zM875 540h1v12h-1zM932 540h1v12h-1zM938 540h1v12h-1zM966 540h1v12h-1zM978 540h2v12h-2zM998 540h1v12h-1zM1044 540h1v12h-1zM1048 540h2v12h-2zM1059 540h1v12h-1zM1079 540h1v12h-1zM418 523h1v4h-1zM516 523h1v4h-1zM592 523h1v4h-1zM622 523h1v4h-1zM719 523h1v4h-1zM900 523h1v4h-1zM1037 523h1v4h-1z"/>
<path fill="#1717ca" d="M107 527h3v13h-3zM121 527h1v13h-1zM128 527h1v13h-1zM135 527h1v13h-1zM144 527h4v13h-4zM153 527h1v13h-1zM156 527h1v13h-1zM161 527h1v13h-1zM162 527h3v13h-3zM167 527h1v13h-1zM169 527h1v13h-1zM174 527h1v13h-1zM197 527h1v13h-1zM213 527h1v13h-1zM219 527h1v13h-1zM233 527h1v13h-1zM238 527h1v13h-1zM240 527h1v13h-1zM251 527h1v13h-1zM262 527h3v13h-3zM266 527h1v13h-1zM277 527h1v13h-1zM280 527h1v13h-1zM284 527h1v13h-1zM289 527h1v13h-1zM297 527h2v13h-2zM300 527h1v13h-1zM306 527h1v13h-1zM307 527h1v13h-1zM357 527h4v13h-4zM372 527h1v13h-1zM380 527h1v13h-1zM381 527h1v13h-1zM416 527h1v13h-1zM418 527h2v13h-2zM454 527h1v13h-1zM458 527h3v13h-3zM462 527h1v13h-1zM474 527h1v13h-1zM480 527h1v13h-1zM489 527h1v13h-1zM492 527h1v13h-1zM494 527h1v13h-1zM499 527h1v13h-1zM505 527h3v13h-3zM515 527h3v13h-3zM520 527h3v13h-3zM542 527h1v13h-1zM560 527h1v13h-1zM586 527h1v13h-1zM597 527h4v13h-4zM605 527h1v13h-1zM623 527h1v13h-1zM640 527h1v13h-1zM642 527h2v13h-2zM650 527h2v13h-2zM656 527h2v13h-2zM663 527h1v13h-1zM666 527h1v13h-1zM673 527h1v13h-1zM684 527h1v13h-1zM723 527h1v13h-1zM747 527h1v13h-1zM750 527h2v13h-2zM782 527h2v13h-2zM835 527h2v13h-2zM843 527h3v13h-3zM853 527h1v13h-1zM854 527h1v13h-1zM861 527h1v13h-1zM867 527h1v13h-1zM871 527h3v13h-3zM878 527h3v13h-3zM887 527h1v13h-1zM900 527h1v13h-1zM914 527h1v13h-1zM916 527h1v13h-1zM929 527h2v13h-2zM932 527h1v13h-1zM944 527h1v13h-1zM966 527h1v13h-1zM972 527h3v13h-3zM978 527h2v13h-2zM982 527h1v13h-1zM989 527h1v13h-1zM1033 527h1v13h-1zM1040 527h1v13h-1zM1061 527h2v13h-2zM290 515h1v8h-1zM418 515h1v8h-1zM660 515h1v8h-1zM701 515h1v8h-1zM900 515h1v8h-1zM95 523h1v4h-1zM220 523h1v4h-1zM290 523h1v4h-1zM420 523h1v4h-1z"/>
<path fill="#1212b7" d="M205 527h1v13h-1zM438 527h1v13h-1zM465 527h1v13h-1zM575 527h2v13h-2zM911 527h1v13h-1zM958 527h2v13h-2zM1022 527h1v13h-1zM1044 527h3v13h-3zM95 515h1v8h-1zM220 515h1v8h-1zM516 515h1v8h-1zM537 515h1v8h-1zM622 515h1v8h-1zM1056 515h1v8h-1zM284 523h1v4h-1zM424 523h1v4h-1zM537 523h1v4h-1zM660 523h1v4h-1zM701 523h1v4h-1zM1056 523h1v4h-1z"/>
<path fill="#0e0ea3" d="M284 515h1v8h-1zM420 515h1v8h-1zM424 515h1v8h-1zM592 515h1v8h-1zM719 515h1v8h-1zM1037 515h1v8h-1z"/>
<path fill="#1ab76c" d="M666 647h1v17h-1z"/>
<path fill="#ced900" d="M666 664h1v6h-1z"/>
<path fill="#f08c00" d="M666 670h1v6h-1z"/>
<path fill="#65dd3b" d="M667 647h1v17h-1z"/>
<path fill="#baeb00" d="M667 664h1v6h-1z"/>
<path fill="#f08c00" d="M667 670h1v6h-1z"/>
<path fill="#1ab76c" d="M668 656h1v8h-1z"/>
<path fill="#baeb00" d="M668 664h1v6h-1z"/>
<path fill="#ea9a00" d="M668 670h1v6h-1z"/>
<path fill="#1ab76c" d="M672 647h1v17h-1z"/>
<path fill="#baeb00" d="M672 664h1v6h-1z"/>
<path fill="#ea9a00" d="M672 670h1v6h-1z"/>
<path fill="#65dd3b" d="M674 647h1v17h-1z"/>
<path fill="#ced900" d="M674 664h1v6h-1z"/>
<path fill="#ea9a00" d="M674 670h1v6h-1z"/>
<path fill="#33ca56" d="M677 647h1v17h-1z"/>
<path fill="#ced900" d="M677 664h1v6h-1z"/>
<path fill="#f08c00" d="M677 670h1v6h-1z"/>
<path fill="#1ab76c" d="M678 647h1v17h-1z"/>
<path fill="#baeb00" d="M678 664h1v6h-1z"/>
<path fill="#ea9a00" d="M678 670h1v6h-1z"/>
<path fill="#65dd3b" d="M679 647h1v17h-1z"/>
<path fill="#ced900" d="M679 664h1v6h-1z"/>
<path fill="#f08c00" d="M679 670h1v6h-1z"/>
<path fill="#65dd3b" d="M680 656h1v8h-1z"/>
<path fill="#baeb00" d="M680 664h1v6h-1z"/>
<path fill="#ea9a00" d="M680 670h1v6h-1z"/>
<path fill="#65dd3b" d="M686 647h1v17h-1z"/>
<path fill="#ced900" d="M686 664h1v6h-1z"/>
<path fill="#ea9a00" d="M686 670h1v6h-1z"/>
<path fill="#65dd3b" d="M687 630h1v34h-1z"/>
<path fill="#baeb00" d="M687 664h1v6h-1z"/>
<path fill="#ea9a00" d="M687 670h1v6h-1z"/>
<path fill="#33ca56" d="M688 647h1v17h-1z"/>
<path fill="#baeb00" d="M688 664h1v6h-1z"/>
<path fill="#ea9a00" d="M688 670h1v6h-1z"/>
<path fill="#33ca56" d="M690 647h1v17h-1z"/>
<path fill="#baeb00" d="M690 664h1v6h-1z"/>
<path fill="#f08c00" d="M690 670h1v6h-1z"/>
<path fill="#1ab76c" d="M691 647h1v17h-1z"/>
<path fill="#baeb00" d="M691 664h1v6h-1z"/>
<path fill="#f08c00" d="M691 670h1v6h-1z"/>
<path fill="#1ab76c" d="M739 647h1v17h-1z"/>
<path fill="#baeb00" d="M739 664h1v6h-1z"/>
<path fill="#f08c00" d="M739 670h1v6h-1z"/>
<path fill="#33ca56" d="M741 647h1v17h-1z"/>
<path fill="#baeb00" d="M741 664h1v6h-1z"/>
<path fill="#f08c00" d="M741 670h1v6h-1z"/>
<path fill="#1ab76c" d="M743 647h1v17h-1z"/>
<path fill="#baeb00" d="M743 664h1v6h-1z"/>
<path fill="#ea9a00" d="M743 670h1v6h-1z"/>
<path fill="#33ca56" d="M745 647h1v17h-1z"/>
<path fill="#baeb00" d="M745 664h1v6h-1z"/>
<path fill="#f08c00" d="M745 670h1v6h-1z"/>
<path fill="#33ca56" d="M749 656h1v8h-1z"/>
<path fill="#baeb00" d="M749 664h1v6h-1z"/>
<path fill="#ea9a00" d="M749 670h1v6h-1z"/>
<path fill="#1ab76c" d="M750 656h1v8h-1z"/>
<path fill="#ced900" d="M750 664h1v6h-1z"/>
<path fill="#f08c00" d="M750 670h1v6h-1z"/>
<path fill="#1ab76c" d="M751 647h1v17h-1z"/>
<path fill="#baeb00" d="M751 664h1v6h-1z"/>
<path fill="#f08c00" d="M751 670h1v6h-1z"/>
<path fill="#1ab76c" d="M754 647h1v17h-1z"/>
<path fill="#ced900" d="M754 664h1v6h-1z"/>
<path fill="#f08c00" d="M754 670h1v6h-1z"/>
<path fill="#33ca56" d="M758 647h1v17h-1z"/>
<path fill="#ced900" d="M758 664h1v6h-1z"/>
<path fill="#f08c00" d="M758 670h1v6h-1z"/>
<path fill="#65dd3b" d="M765 647h1v17h-1z"/>
<path fill="#baeb00" d="M765 664h1v6h-1z"/>
<path fill="#f08c00" d="M765 670h1v6h-1z"/>
<path fill="#65dd3b" d="M766 630h1v34h-1z"/>
<path fill="#baeb00" d="M766 664h1v6h-1z"/>
<path fill="#ea9a00" d="M766 670h1v6h-1z"/>
<path fill="#1ab76c" d="M768 647h1v17h-1z"/>
<path fill="#baeb00" d="M768 664h1v6h-1z"/>
<path fill="#ea9a00" d="M768 670h1v6h-1z"/>
<path fill="#65dd3b" d="M769 647h1v17h-1z"/>
<path fill="#ced900" d="M769 664h1v6h-1z"/>
<path fill="#f08c00" d="M769 670h1v6h-1z"/>
<path fill="#33ca56" d="M771 647h1v17h-1z"/>
<path fill="#baeb00" d="M771 664h1v6h-1z"/>
<path fill="#f08c00" d="M771 670h1v6h-1z"/>
<path fill="#65dd3b" d="M773 656h1v8h-1z"/>
<path fill="#baeb00" d="M773 664h1v6h-1z"/>
<path fill="#f08c00" d="M773 670h1v6h-1z"/>
<path fill="#33ca56" d="M777 630h1v34h-1z"/>
<path fill="#ced900" d="M777 664h1v6h-1z"/>
<path fill="#f08c00" d="M777 670h1v6h-1z"/>
<path fill="#1ab76c" d="M779 647h1v17h-1z"/>
<path fill="#ced900" d="M779 664h1v6h-1z"/>
<path fill="#f08c00" d="M779 670h1v6h-1z"/>
<path fill="#65dd3b" d="M784 647h1v17h-1z"/>
<path fill="#baeb00" d="M784 664h1v6h-1z"/>
<path fill="#f08c00" d="M784 670h1v6h-1z"/>
<path fill="#65dd3b" d="M785 630h1v34h-1z"/>
<path fill="#baeb00" d="M785 664h1v6h-1z"/>
<path fill="#f08c00" d="M785 670h1v6h-1z"/>
<path fill="#1ab76c" d="M786 647h1v17h-1z"/>
<path fill="#baeb00" d="M786 664h1v6h-1z"/>
<path fill="#f08c00" d="M786 670h1v6h-1z"/>
<path fill="#65dd3b" d="M790 630h1v34h-1z"/>
<path fill="#ced900" d="M790 664h1v6h-1z"/>
<path fill="#f08c00" d="M790 670h1v6h-1z"/>
<path fill="#1ab76c" d="M794 647h1v17h-1z"/>
<path fill="#ced900" d="M794 664h1v6h-1z"/>
<path fill="#f08c00" d="M794 670h1v6h-1z"/>
<path fill="#d8dc00" d="M752 664h14v6h-14z"/>
<path fill="#f08800" d="M752 670h14v6h-14z"/>
<path fill="#d8dc00" d="M767 664h12v6h-12z"/>
<path fill="#f08800" d="M767 670h12v6h-12z"/>
<path fill="#d8dc00" d="M783 664h9v6h-9z"/>
<path fill="#f08800" d="M783 670h9v6h-9z"/>
<path fill="#f05010" d="M666 676h129v4h-129z"/>
<path fill="#d95e6a" d="M662 630h4v61h-4zM795 630h4v61h-4zM666 680h129v11h-129zM776 676h10v4h-10zM692 668h47v12h-47z"/>
<path fill="#e05058" d="M692 664h47v4h-47z"/>
<path fill="#d4ce00" d="M722 647h1v17h-1zM729 647h1v17h-1zM734 647h1v17h-1zM737 647h1v17h-1z"/>
<path fill="#e8b000" d="M645 676h7v15h-7z"/>
<path fill="#b8e800" d="M645 672h7v4h-7z"/>
<g clip-path="url(#p3clip)" shape-rendering="geometricPrecision"><path d="M101.0 469.9L104.4 4000.0L107.8 497.9L111.2 481.8L114.6 499.7L118.0 484.3L121.4 4000.0L124.8 479.9L128.2 469.0L131.6 483.8L135.0 474.3L138.4 484.1L141.8 4000.0L145.2 491.2L148.6 486.4M155.4 480.3L158.8 492.1L162.2 487.2L165.6 482.0L169.0 476.9L172.4 4000.0L175.8 487.8L179.2 484.4L182.6 4000.0L186.0 481.1L189.4 482.0L192.8 469.0L196.2 479.2L199.6 481.1M206.4 475.1L209.8 481.1L213.2 480.4L216.6 487.3L220.0 479.2L223.4 474.6L226.8 475.9L230.2 473.8L233.6 495.8L237.0 483.3L240.4 477.7L243.8 4000.0L247.2 474.2L250.6 479.6L254.0 474.4L257.4 493.8L260.8 479.9L264.2 471.7L267.6 478.7L271.0 479.7L274.4 486.7L277.8 478.2L281.2 479.3L284.6 492.2L288.0 480.0L291.4 475.1L294.8 485.3L298.2 475.4L301.6 489.0L305.0 486.4L308.4 486.1L311.8 484.1L315.2 478.0L318.6 479.8L322.0 498.4L325.4 488.6L328.8 485.6L332.2 488.5L335.6 488.9L339.0 483.0L342.4 4000.0L345.8 489.8L349.2 470.1L352.6 475.1L356.0 491.4L359.4 4000.0L362.8 484.0L366.2 474.8L369.6 492.9L373.0 487.2L376.4 487.9L379.8 493.2L383.2 482.2L386.6 493.9L390.0 475.8L393.4 486.8L396.8 483.8L400.2 495.6L403.6 492.2L407.0 477.6L410.4 483.1L413.8 470.6L417.2 484.2L420.6 492.9L424.0 482.6L427.4 488.3L430.8 481.6L434.2 488.0L437.6 472.6L441.0 492.5M447.8 488.5L451.2 4000.0L454.6 483.9L458.0 469.9L461.4 487.2L464.8 486.6L468.2 486.0L471.6 491.1L475.0 474.9L478.4 478.1M485.2 481.8L488.6 4000.0L492.0 486.3L495.4 485.3L498.8 484.6L502.2 495.3L505.6 470.9L509.0 487.0L512.4 469.0L515.8 482.7L519.2 477.6L522.6 493.0L526.0 4000.0L529.4 480.1L532.8 484.1L536.2 487.2L539.6 474.5L543.0 488.7L546.4 483.3L549.8 484.7L553.2 493.3L556.6 473.7L560.0 4000.0L563.4 475.4L566.8 479.5L570.2 487.2L573.6 473.0L577.0 475.7M583.8 489.7L587.2 476.7L590.6 481.8L594.0 490.2L597.4 477.0L600.8 488.0L604.2 485.4L607.6 475.7L611.0 476.2L614.4 484.1L617.8 484.2L621.2 485.7L624.6 483.6L628.0 484.4L631.4 488.5L634.8 471.9M641.6 483.9L645.0 4000.0L648.4 488.0L651.8 485.7L655.2 490.0L658.6 479.0L662.0 481.5L665.4 485.5L668.8 487.8L672.2 480.4L675.6 483.1L679.0 488.6L682.4 475.6L685.8 475.5L689.2 480.7L692.6 484.8L696.0 481.0L699.4 485.2L702.8 486.3L706.2 469.0L709.6 478.2L713.0 482.4L716.4 487.0L719.8 478.5L723.2 487.8L726.6 4000.0L730.0 476.8L733.4 492.5L736.8 479.2L740.2 482.5L743.6 479.7L747.0 471.6L750.4 481.6L753.8 487.4L757.2 481.9L760.6 4000.0L764.0 488.7L767.4 4000.0L770.8 4000.0L774.2 479.2L777.6 474.0L781.0 472.6L784.4 477.1L787.8 4000.0M794.6 481.6M801.4 482.5L804.8 494.7L808.2 4000.0L811.6 4000.0L815.0 4000.0L818.4 490.7L821.8 492.5L825.2 499.8M832.0 479.6L835.4 497.8L838.8 501.1L842.2 488.9L845.6 483.1L849.0 496.0L852.4 481.0L855.8 4000.0L859.2 490.2L862.6 4000.0L866.0 496.9L869.4 4000.0L872.8 4000.0L876.2 4000.0L879.6 492.9L883.0 4000.0L886.4 484.4L889.8 501.8L893.2 497.4L896.6 489.7L900.0 481.7L903.4 499.6L906.8 481.5L910.2 4000.0L913.6 491.6L917.0 492.4L920.4 495.0L923.8 494.3L927.2 487.5L930.6 498.0L934.0 4000.0L937.4 484.4L940.8 4000.0L944.2 487.9L947.6 4000.0L951.0 486.2L954.4 488.0L957.8 485.8L961.2 491.9L964.6 489.1L968.0 487.9L971.4 495.0L974.8 4000.0L978.2 491.2L981.6 471.8L985.0 491.4L988.4 499.6L991.8 492.1L995.2 501.1L998.6 496.2L1002.0 497.6L1005.4 496.6L1008.8 499.6L1012.2 497.4L1015.6 4000.0L1019.0 490.7L1022.4 493.1L1025.8 475.7L1029.2 489.9L1032.6 480.1L1036.0 4000.0L1039.4 494.4L1042.8 4000.0L1046.2 503.4L1049.6 489.3M1056.4 482.8L1059.8 474.5L1063.2 4000.0L1066.6 498.4L1070.0 492.6L1073.4 479.4L1076.8 487.1" stroke="#0000ff" stroke-width="1.4" fill="none"/><path d="M99.0 4000.0L102.4 4000.0L105.8 466.0L109.2 4000.0L112.6 489.0L116.0 4000.0L119.4 4000.0L122.8 4000.0L126.2 4000.0L129.6 4000.0L133.0 4000.0L136.4 4000.0L139.8 4000.0L143.2 4000.0L146.6 4000.0L150.0 4000.0L153.4 4000.0L156.8 4000.0L160.2 4000.0L163.6 481.9L167.0 488.9L170.4 4000.0L173.8 4000.0L177.2 4000.0L180.6 4000.0L184.0 4000.0L187.4 4000.0L190.8 4000.0L194.2 4000.0L197.6 4000.0L201.0 4000.0L204.4 4000.0L207.8 491.6L211.2 466.1L214.6 4000.0L218.0 4000.0L221.4 466.9L224.8 4000.0L228.2 4000.0L231.6 473.2L235.0 4000.0L238.4 488.9L241.8 4000.0L245.2 463.6L248.6 465.4L252.0 4000.0L255.4 482.3L258.8 4000.0L262.2 4000.0L265.6 463.5L269.0 473.2L272.4 4000.0L275.8 4000.0L279.2 4000.0L282.6 485.2L286.0 472.0L289.4 4000.0L292.8 488.7L296.2 4000.0L299.6 4000.0L303.0 4000.0L306.4 4000.0L309.8 474.1L313.2 4000.0L316.6 473.8L320.0 464.0L323.4 4000.0L326.8 487.1L330.2 4000.0L333.6 473.6L337.0 4000.0L340.4 463.2L343.8 4000.0L347.2 481.5L350.6 4000.0L354.0 469.9L357.4 488.5L360.8 4000.0L364.2 4000.0L367.6 4000.0L371.0 4000.0L374.4 476.2L377.8 4000.0L381.2 4000.0L384.6 465.9L388.0 4000.0L391.4 471.5L394.8 4000.0L398.2 4000.0L401.6 4000.0L405.0 486.7L408.4 4000.0L411.8 471.9L415.2 4000.0L418.6 4000.0L422.0 4000.0L425.4 4000.0L428.8 4000.0L432.2 4000.0L435.6 4000.0L439.0 4000.0L442.4 491.8L445.8 4000.0L449.2 4000.0L452.6 465.1L456.0 4000.0L459.4 4000.0L462.8 479.1L466.2 4000.0L469.6 4000.0L473.0 484.2L476.4 4000.0L479.8 4000.0L483.2 4000.0L486.6 464.5L490.0 4000.0L493.4 4000.0L496.8 4000.0L500.2 482.7L503.6 484.5L507.0 4000.0L510.4 481.8L513.8 4000.0L517.2 4000.0L520.6 4000.0L524.0 487.7L527.4 484.3L530.8 471.3L534.2 4000.0L537.6 483.9L541.0 4000.0L544.4 4000.0L547.8 4000.0L551.2 4000.0L554.6 4000.0L558.0 4000.0L561.4 482.0L564.8 4000.0L568.2 4000.0L571.6 4000.0L575.0 464.8L578.4 4000.0L581.8 4000.0L585.2 485.9L588.6 4000.0L592.0 491.7L595.4 4000.0L598.8 4000.0L602.2 4000.0L605.6 4000.0L609.0 473.6L612.4 4000.0L615.8 4000.0L619.2 473.9L622.6 4000.0L626.0 480.2L629.4 4000.0L632.8 4000.0L636.2 4000.0L639.6 4000.0L643.0 491.7L646.4 482.7L649.8 466.7L653.2 4000.0L656.6 465.3L660.0 4000.0L663.4 491.2L666.8 4000.0L670.2 4000.0L673.6 478.2L677.0 4000.0L680.4 4000.0L683.8 4000.0L687.2 476.6L690.6 4000.0L694.0 4000.0L697.4 4000.0L700.8 4000.0L704.2 4000.0L707.6 477.5L711.0 4000.0L714.4 4000.0L717.8 4000.0L721.2 4000.0L724.6 4000.0L728.0 4000.0L731.4 4000.0L734.8 490.4L738.2 4000.0L741.6 4000.0L745.0 4000.0L748.4 4000.0L751.8 4000.0L755.2 4000.0L758.6 4000.0L762.0 4000.0L765.4 4000.0L768.8 4000.0L772.2 474.5L775.6 4000.0L779.0 4000.0L782.4 481.7L785.8 4000.0L789.2 4000.0L792.6 4000.0L796.0 4000.0L799.4 464.5L802.8 4000.0L806.2 4000.0L809.6 492.2L813.0 4000.0L816.4 490.5L819.8 4000.0L823.2 4000.0L826.6 4000.0L830.0 4000.0L833.4 4000.0L836.8 4000.0L840.2 487.4L843.6 4000.0L847.0 4000.0L850.4 4000.0L853.8 4000.0L857.2 490.5L860.6 496.1L864.0 4000.0L867.4 477.3L870.8 4000.0L874.2 4000.0L877.6 4000.0L881.0 4000.0L884.4 4000.0L887.8 4000.0L891.2 4000.0L894.6 4000.0L898.0 4000.0L901.4 4000.0L904.8 4000.0L908.2 4000.0L911.6 4000.0L915.0 493.0L918.4 4000.0L921.8 4000.0L925.2 486.4L928.6 4000.0L932.0 4000.0L935.4 4000.0L938.8 470.4L942.2 4000.0L945.6 4000.0L949.0 4000.0L952.4 4000.0L955.8 4000.0L959.2 4000.0L962.6 483.1L966.0 4000.0L969.4 4000.0L972.8 4000.0L976.2 4000.0L979.6 4000.0L983.0 4000.0L986.4 484.5L989.8 4000.0L993.2 4000.0L996.6 4000.0L1000.0 4000.0L1003.4 4000.0L1006.8 4000.0L1010.2 4000.0L1013.6 4000.0L1017.0 4000.0L1020.4 4000.0L1023.8 4000.0L1027.2 4000.0L1030.6 4000.0L1034.0 4000.0L1037.4 490.1L1040.8 4000.0L1044.2 4000.0L1047.6 4000.0L1051.0 4000.0L1054.4 4000.0L1057.8 4000.0L1061.2 4000.0L1064.6 478.8L1068.0 4000.0L1071.4 4000.0L1074.8 4000.0L1078.2 4000.0" stroke="#00ff00" stroke-width="1.4" fill="none"/><path d="M96.0 500.2L97.7 503.5L99.4 493.4L101.1 499.1L102.8 495.2L104.5 496.0L106.2 498.8L107.9 500.9L109.6 500.3L111.3 492.9L113.0 497.9L114.7 500.9L116.4 499.5L118.1 497.2L119.8 499.0L121.5 494.3L123.2 493.6L124.9 500.2L126.6 500.5L128.3 499.1L130.0 498.6L131.7 498.5L133.4 500.8L135.1 494.0L136.8 496.5L138.5 498.5L140.2 496.6L141.9 496.3L143.6 495.9L145.3 501.5L147.0 496.6L148.7 497.6L150.4 498.8L152.1 499.5L153.8 504.8L155.5 501.1L157.2 4000.0L158.9 501.4L160.6 4000.0L162.3 501.2L164.0 500.4L165.7 499.6L167.4 497.9L169.1 502.0L170.8 502.7L172.5 501.3L174.2 503.3L175.9 4000.0L177.6 499.4L179.3 499.7L181.0 4000.0L182.7 500.7L184.4 500.2L186.1 498.8L187.8 4000.0L189.5 498.5L191.2 499.2L192.9 4000.0L194.6 502.1L196.3 502.8L198.0 507.3L199.7 497.7L201.4 497.7L203.1 498.2L204.8 500.9L206.5 498.6L208.2 502.8L209.9 496.8L211.6 502.4L213.3 495.0L215.0 494.5L216.7 4000.0L218.4 4000.0L220.1 502.3L221.8 503.2L223.5 502.0L225.2 503.5L226.9 4000.0L228.6 500.0L230.3 497.2L232.0 499.6L233.7 499.7L235.4 499.4L237.1 500.6L238.8 506.8L240.5 503.1L242.2 506.0L243.9 505.0L245.6 4000.0L247.3 503.1L249.0 498.4L250.7 501.1L252.4 499.2L254.1 495.8L255.8 494.6L257.5 498.1L259.2 4000.0L260.9 500.8L262.6 499.8L264.3 499.3L266.0 498.6L267.7 500.2L269.4 499.6L271.1 500.4L272.8 499.7L274.5 501.4L276.2 4000.0L277.9 498.3L279.6 503.0L281.3 502.1L283.0 4000.0L284.7 504.0L286.4 505.3L288.1 4000.0L289.8 504.4L291.5 4000.0L293.2 4000.0L294.9 4000.0L296.6 4000.0L298.3 508.8L300.0 507.7L301.7 4000.0L303.4 505.3L305.1 507.5L306.8 507.9L308.5 506.3L310.2 506.4L311.9 504.2L313.6 508.4L315.3 506.5L317.0 508.6L318.7 507.9L320.4 504.6L322.1 508.5L323.8 507.5L325.5 4000.0L327.2 504.9L328.9 4000.0L330.6 500.1L332.3 501.9L334.0 504.3L335.7 501.0L337.4 501.5L339.1 501.8L340.8 504.2L342.5 4000.0L344.2 504.8L345.9 4000.0L346.7 498.2L347.5 4000.0M356.1 4000.0L356.9 499.7L357.7 4000.0M361.2 4000.0L362.0 501.6L362.8 4000.0M439.4 4000.0L440.2 503.3L441.0 4000.0M449.6 4000.0L450.4 504.1L451.2 4000.0M468.3 4000.0L469.1 503.7L469.9 4000.0M480.2 4000.0L481.0 507.0L481.8 4000.0M497.2 4000.0L498.0 500.1L498.8 4000.0M510.8 4000.0L511.6 501.1L512.4 4000.0M531.2 4000.0L532.0 502.7L532.8 4000.0M599.2 4000.0L600.0 504.0L600.8 4000.0M607.7 4000.0L608.5 499.4L609.3 4000.0M619.6 4000.0L620.4 501.9L621.2 4000.0M624.7 4000.0L625.5 505.2L626.3 4000.0M653.6 4000.0L654.4 506.9L655.2 4000.0M827.0 4000.0L827.8 498.2L828.6 4000.0M830.4 4000.0L831.2 504.6L832.0 4000.0M852.5 4000.0L853.3 503.6L854.1 4000.0M862.7 4000.0L863.5 503.3L864.3 4000.0M879.7 4000.0L880.5 500.6L881.3 4000.0M925.6 4000.0L926.4 498.8L927.2 4000.0M930.7 4000.0L931.5 498.9L932.3 4000.0M942.6 4000.0L943.4 507.0L944.2 4000.0M983.4 4000.0L984.2 499.9L985.0 4000.0M993.6 4000.0L994.4 499.7L995.2 4000.0M1037.8 4000.0L1038.6 505.1L1039.4 4000.0M1054.8 4000.0L1055.6 501.7L1056.4 4000.0M1071.8 4000.0L1072.6 500.9L1073.4 4000.0M1075.2 4000.0L1076.0 500.2L1076.8 4000.0" stroke="#ff0000" stroke-width="1.3" fill="none"/><path d="M661.5 515.0L662.5 418.0L666.5 418.0L667.5 427.0L689.4 427.0L691.0 418.0L739.4 418.0L740.0 428.4L748.0 428.4L750.0 429.5L751.5 429.5L753.0 423.6L755.0 418.0L775.0 418.0L780.0 430.0L792.0 430.0L793.0 418.0L797.5 418.0L798.5 515.0" stroke="#ff0000" stroke-width="1.3" fill="none"/></g><rect x="95.5" y="420.5" width="985" height="89" fill="none" stroke="#303030" stroke-width="1"/>
<path d="M136.5 509v-2M177.5 509v-2M218.5 509v-2M259.5 509v-2M300.5 509v-2M342.5 509v-2M383.5 509v-2M424.5 509v-2M465.5 509v-2M506.5 509v-2M547.5 509v-2M588.5 509v-2M629.5 509v-2M670.5 509v-2M711.5 509v-2M752.5 509v-2M793.5 509v-2M834.5 509v-2M876.5 509v-2M917.5 509v-2M958.5 509v-2M999.5 509v-2M1040.5 509v-2" stroke="#303030" stroke-width="1" fill="none"/>
<rect x="95" y="695" width="986" height="16" fill="#00ff00"/>
<rect x="655.5" y="695" width="150.0" height="16" fill="#ff0000"/>
<line x1="655.5" y1="695" x2="655.5" y2="711" stroke="#000" stroke-width="1"/>
<line x1="805.5" y1="695" x2="805.5" y2="711" stroke="#000" stroke-width="1"/>
<rect x="95.5" y="695.5" width="985" height="15" fill="none" stroke="#303030" stroke-width="1"/>
<line x1="96" y1="695" x2="96" y2="711" stroke="#000" stroke-width="1"/>
<line x1="136.5" y1="711" x2="136.5" y2="715" stroke="#303030" stroke-width="1"/>
<line x1="177.5" y1="711" x2="177.5" y2="715" stroke="#303030" stroke-width="1"/>
<line x1="218.5" y1="711" x2="218.5" y2="719" stroke="#303030" stroke-width="1"/>
<line x1="259.5" y1="711" x2="259.5" y2="715" stroke="#303030" stroke-width="1"/>
<line x1="300.5" y1="711" x2="300.5" y2="715" stroke="#303030" stroke-width="1"/>
<line x1="342.5" y1="711" x2="342.5" y2="719" stroke="#303030" stroke-width="1"/>
<line x1="383.5" y1="711" x2="383.5" y2="715" stroke="#303030" stroke-width="1"/>
<line x1="424.5" y1="711" x2="424.5" y2="715" stroke="#303030" stroke-width="1"/>
<line x1="465.5" y1="711" x2="465.5" y2="719" stroke="#303030" stroke-width="1"/>
<line x1="506.5" y1="711" x2="506.5" y2="715" stroke="#303030" stroke-width="1"/>
<line x1="547.5" y1="711" x2="547.5" y2="715" stroke="#303030" stroke-width="1"/>
<line x1="588.5" y1="711" x2="588.5" y2="719" stroke="#303030" stroke-width="1"/>
<line x1="629.5" y1="711" x2="629.5" y2="715" stroke="#303030" stroke-width="1"/>
<line x1="670.5" y1="711" x2="670.5" y2="715" stroke="#303030" stroke-width="1"/>
<line x1="711.5" y1="711" x2="711.5" y2="719" stroke="#303030" stroke-width="1"/>
<line x1="752.5" y1="711" x2="752.5" y2="715" stroke="#303030" stroke-width="1"/>
<line x1="793.5" y1="711" x2="793.5" y2="715" stroke="#303030" stroke-width="1"/>
<line x1="834.5" y1="711" x2="834.5" y2="719" stroke="#303030" stroke-width="1"/>
<line x1="876.5" y1="711" x2="876.5" y2="715" stroke="#303030" stroke-width="1"/>
<line x1="917.5" y1="711" x2="917.5" y2="715" stroke="#303030" stroke-width="1"/>
<line x1="958.5" y1="711" x2="958.5" y2="719" stroke="#303030" stroke-width="1"/>
<line x1="999.5" y1="711" x2="999.5" y2="715" stroke="#303030" stroke-width="1"/>
<line x1="1040.5" y1="711" x2="1040.5" y2="715" stroke="#303030" stroke-width="1"/>
<line x1="1080.5" y1="711" x2="1080.5" y2="719" stroke="#303030" stroke-width="1"/>
<text x="218.2" y="734" font-size="12.5" text-anchor="middle" textLength="34" lengthAdjust="spacingAndGlyphs" fill="#2b2b2b">03:00</text>
<text x="218.2" y="749" font-size="12.5" text-anchor="middle" textLength="34" lengthAdjust="spacingAndGlyphs" fill="#2b2b2b">18.80</text>
<text x="218.2" y="764" font-size="12.5" text-anchor="middle" textLength="34" lengthAdjust="spacingAndGlyphs" fill="#2b2b2b">49.14</text>
<text x="218.2" y="779" font-size="12.5" text-anchor="middle" textLength="34" lengthAdjust="spacingAndGlyphs" fill="#2b2b2b">61.16</text>
<text x="341.5" y="734" font-size="12.5" text-anchor="middle" textLength="34" lengthAdjust="spacingAndGlyphs" fill="#2b2b2b">06:00</text>
<text x="341.5" y="749" font-size="12.5" text-anchor="middle" textLength="34" lengthAdjust="spacingAndGlyphs" fill="#2b2b2b">18.82</text>
<text x="341.5" y="764" font-size="12.5" text-anchor="middle" textLength="34" lengthAdjust="spacingAndGlyphs" fill="#2b2b2b">49.12</text>
<text x="341.5" y="779" font-size="12.5" text-anchor="middle" textLength="34" lengthAdjust="spacingAndGlyphs" fill="#2b2b2b">61.08</text>
<text x="464.8" y="734" font-size="12.5" text-anchor="middle" textLength="34" lengthAdjust="spacingAndGlyphs" fill="#2b2b2b">09:00</text>
<text x="464.8" y="749" font-size="12.5" text-anchor="middle" textLength="34" lengthAdjust="spacingAndGlyphs" fill="#2b2b2b">18.84</text>
<text x="464.8" y="764" font-size="12.5" text-anchor="middle" textLength="34" lengthAdjust="spacingAndGlyphs" fill="#2b2b2b">49.08</text>
<text x="464.8" y="779" font-size="12.5" text-anchor="middle" textLength="34" lengthAdjust="spacingAndGlyphs" fill="#2b2b2b">60.98</text>
<text x="588.0" y="734" font-size="12.5" text-anchor="middle" textLength="34" lengthAdjust="spacingAndGlyphs" fill="#2b2b2b">12:00</text>
<text x="588.0" y="749" font-size="12.5" text-anchor="middle" textLength="34" lengthAdjust="spacingAndGlyphs" fill="#2b2b2b">18.86</text>
<text x="588.0" y="764" font-size="12.5" text-anchor="middle" textLength="34" lengthAdjust="spacingAndGlyphs" fill="#2b2b2b">49.04</text>
<text x="588.0" y="779" font-size="12.5" text-anchor="middle" textLength="34" lengthAdjust="spacingAndGlyphs" fill="#2b2b2b">60.88</text>
<text x="711.2" y="734" font-size="12.5" text-anchor="middle" textLength="34" lengthAdjust="spacingAndGlyphs" fill="#2b2b2b">15:00</text>
<text x="711.2" y="749" font-size="12.5" text-anchor="middle" textLength="34" lengthAdjust="spacingAndGlyphs" fill="#2b2b2b">18.89</text>
<text x="711.2" y="764" font-size="12.5" text-anchor="middle" textLength="34" lengthAdjust="spacingAndGlyphs" fill="#2b2b2b">49.00</text>
<text x="711.2" y="779" font-size="12.5" text-anchor="middle" textLength="34" lengthAdjust="spacingAndGlyphs" fill="#2b2b2b">60.77</text>
<text x="834.5" y="734" font-size="12.5" text-anchor="middle" textLength="34" lengthAdjust="spacingAndGlyphs" fill="#2b2b2b">18:00</text>
<text x="834.5" y="749" font-size="12.5" text-anchor="middle" textLength="34" lengthAdjust="spacingAndGlyphs" fill="#2b2b2b">18.91</text>
<text x="834.5" y="764" font-size="12.5" text-anchor="middle" textLength="34" lengthAdjust="spacingAndGlyphs" fill="#2b2b2b">48.95</text>
<text x="834.5" y="779" font-size="12.5" text-anchor="middle" textLength="34" lengthAdjust="spacingAndGlyphs" fill="#2b2b2b">60.65</text>
<text x="957.8" y="734" font-size="12.5" text-anchor="middle" textLength="34" lengthAdjust="spacingAndGlyphs" fill="#2b2b2b">21:00</text>
<text x="957.8" y="749" font-size="12.5" text-anchor="middle" textLength="34" lengthAdjust="spacingAndGlyphs" fill="#2b2b2b">18.93</text>
<text x="957.8" y="764" font-size="12.5" text-anchor="middle" textLength="34" lengthAdjust="spacingAndGlyphs" fill="#2b2b2b">48.89</text>
<text x="957.8" y="779" font-size="12.5" text-anchor="middle" textLength="34" lengthAdjust="spacingAndGlyphs" fill="#2b2b2b">60.52</text>
<text x="1081.0" y="734" font-size="12.5" text-anchor="middle" textLength="34" lengthAdjust="spacingAndGlyphs" fill="#2b2b2b">00:00</text>
<text x="1081.0" y="749" font-size="12.5" text-anchor="middle" textLength="34" lengthAdjust="spacingAndGlyphs" fill="#2b2b2b">18.95</text>
<text x="1081.0" y="764" font-size="12.5" text-anchor="middle" textLength="34" lengthAdjust="spacingAndGlyphs" fill="#2b2b2b">48.82</text>
<text x="1081.0" y="779" font-size="12.5" text-anchor="middle" textLength="34" lengthAdjust="spacingAndGlyphs" fill="#2b2b2b">60.38</text>
<text x="60" y="749" font-size="12" text-anchor="end" textLength="44" lengthAdjust="spacingAndGlyphs" fill="#2b2b2b" xml:space="preserve">LT  (hrs)</text>
<text x="60" y="764" font-size="12" text-anchor="end" textLength="13.5" lengthAdjust="spacingAndGlyphs" fill="#2b2b2b">Rs</text>
<text x="60.5" y="779" font-size="12" text-anchor="end" textLength="47.5" lengthAdjust="spacingAndGlyphs" fill="#2b2b2b">Dipole L</text>
<text x="79.5" y="708" font-size="12" text-anchor="end" textLength="50.5" lengthAdjust="spacingAndGlyphs" fill="#2b2b2b">Sunlight?</text>
<text x="10" y="29" font-size="11.5" text-anchor="start" textLength="58" lengthAdjust="spacingAndGlyphs" fill="#2b2b2b">CHEMS Pr.</text>
<text x="10" y="211" font-size="11.5" text-anchor="start" textLength="57.5" lengthAdjust="spacingAndGlyphs" fill="#2b2b2b">LEMMS Pr.</text>
<text x="9.5" y="538" font-size="11.5" text-anchor="start" textLength="65.5" lengthAdjust="spacingAndGlyphs" fill="#2b2b2b">LEMMS Ions</text>
<path d="M91 212.5h4M91 200.5h4M91 190.5h4M91 183.5h4M91 176.5h4M91 170.5h4M91 165.5h4M87 161.5h8M91 132.5h4M91 114.5h4M91 102.5h4M91 93.5h4M91 85.5h4M91 79.5h4M91 73.5h4M91 68.5h4M87 64.5h8M91 34.5h4" stroke="#303030" stroke-width="1" fill="none"/>
<text x="82" y="71.9" font-size="12.5" text-anchor="end" fill="#2b2b2b">10<tspan dx="1.2" dy="-6.2" font-size="12.00">2</tspan></text>
<text x="82" y="168.9" font-size="12.5" text-anchor="end" fill="#2b2b2b">10<tspan dx="1.2" dy="-6.2" font-size="12.00">1</tspan></text>
<text x="48" y="124.5" font-size="12" text-anchor="middle" textLength="73" lengthAdjust="spacingAndGlyphs" transform="rotate(-90 48 124.5)" fill="#2b2b2b">Energy (keV)</text>
<path d="M91 406.5h4M91 390.5h4M91 377.5h4M91 367.5h4M91 359.5h4M91 351.5h4M91 344.5h4M87 339.5h8M91 333.5h4M91 328.5h4M91 324.5h4M91 320.5h4M91 316.5h4M91 312.5h4M91 309.5h4M91 305.5h4M91 302.5h4M87 300.5h8M91 297.5h4M91 294.5h4M91 292.5h4M91 289.5h4M91 287.5h4M91 285.5h4M91 283.5h4M91 281.5h4M91 279.5h4M87 277.5h8M91 275.5h4M91 273.5h4M91 271.5h4M91 270.5h4M91 268.5h4M91 266.5h4M91 265.5h4M91 263.5h4M91 262.5h4M87 261.5h8M91 259.5h4M91 258.5h4M91 256.5h4M91 255.5h4M91 254.5h4M91 253.5h4M91 251.5h4M91 250.5h4M91 249.5h4M87 248.5h8M91 247.5h4M91 246.5h4M91 245.5h4M91 244.5h4M91 243.5h4M91 242.5h4M91 241.5h4M91 240.5h4M91 239.5h4M87 238.5h8M91 237.5h4M91 236.5h4M91 235.5h4M91 234.5h4M91 233.5h4M91 232.5h4M91 232.5h4M91 231.5h4M91 230.5h4M87 229.5h8M91 228.5h4M91 227.5h4M91 227.5h4M91 226.5h4M91 225.5h4M91 224.5h4M91 224.5h4" stroke="#303030" stroke-width="1" fill="none"/>
<text x="82" y="343.3" font-size="12.5" text-anchor="end" textLength="26.5" lengthAdjust="spacingAndGlyphs" fill="#2b2b2b">100.</text>
<text x="82" y="304.3" font-size="12.5" text-anchor="end" textLength="26.5" lengthAdjust="spacingAndGlyphs" fill="#2b2b2b">200.</text>
<text x="82" y="281.5" font-size="12.5" text-anchor="end" textLength="26.5" lengthAdjust="spacingAndGlyphs" fill="#2b2b2b">300.</text>
<text x="82" y="265.3" font-size="12.5" text-anchor="end" textLength="26.5" lengthAdjust="spacingAndGlyphs" fill="#2b2b2b">400.</text>
<text x="82" y="252.8" font-size="12.5" text-anchor="end" textLength="26.5" lengthAdjust="spacingAndGlyphs" fill="#2b2b2b">500.</text>
<text x="82" y="242.5" font-size="12.5" text-anchor="end" textLength="26.5" lengthAdjust="spacingAndGlyphs" fill="#2b2b2b">600.</text>
<text x="82" y="233.9" font-size="12.5" text-anchor="end" textLength="26.5" lengthAdjust="spacingAndGlyphs" fill="#2b2b2b">700.</text>
<text x="45" y="320" font-size="12" text-anchor="middle" textLength="73" lengthAdjust="spacingAndGlyphs" transform="rotate(-90 45 320)" fill="#2b2b2b">Energy (keV)</text>
<path d="M91 508.5h4M91 507.5h4M91 505.5h4M91 504.5h4M91 503.5h4M87 502.5h8M91 495.5h4M91 491.5h4M91 489.5h4M91 486.5h4M91 485.5h4M91 483.5h4M91 482.5h4M91 481.5h4M87 480.5h8M91 473.5h4M91 469.5h4M91 467.5h4M91 464.5h4M91 463.5h4M91 461.5h4M91 460.5h4M91 459.5h4M87 458.5h8M91 451.5h4M91 447.5h4M91 445.5h4M91 443.5h4M91 441.5h4M91 439.5h4M91 438.5h4M91 437.5h4M87 436.5h8M91 429.5h4M91 425.5h4M91 423.5h4M91 421.5h4" stroke="#303030" stroke-width="1" fill="none"/>
<text x="82" y="443.9" font-size="12.5" text-anchor="end" fill="#2b2b2b">10<tspan dx="1.2" dy="-6.2" font-size="12.00">−9</tspan></text>
<text x="82" y="465.8" font-size="12.5" text-anchor="end" fill="#2b2b2b">10<tspan dx="1.2" dy="-6.2" font-size="12.00">−10</tspan></text>
<text x="82" y="487.8" font-size="12.5" text-anchor="end" fill="#2b2b2b">10<tspan dx="1.2" dy="-6.2" font-size="12.00">−11</tspan></text>
<text x="82" y="509.8" font-size="12.5" text-anchor="end" fill="#2b2b2b">10<tspan dx="1.2" dy="-6.2" font-size="12.00">−12</tspan></text>
<text x="33" y="466" font-size="12" text-anchor="middle" textLength="69" lengthAdjust="spacingAndGlyphs" transform="rotate(-90 33 466)" fill="#2b2b2b">P dyn/cm^2</text>
<path d="M91 686.5h4M91 680.5h4M91 675.5h4M91 671.5h4M91 667.5h4M91 664.5h4M91 661.5h4M87 659.5h8M91 643.5h4M91 634.5h4M91 627.5h4M91 622.5h4M91 618.5h4M91 615.5h4M91 612.5h4M91 609.5h4M87 606.5h8M91 591.5h4M91 581.5h4M91 575.5h4M91 570.5h4M91 566.5h4M91 562.5h4M91 559.5h4M91 556.5h4M87 554.5h8M91 538.5h4M91 529.5h4M91 522.5h4M91 517.5h4M91 513.5h4" stroke="#303030" stroke-width="1" fill="none"/>
<text x="82" y="561.9" font-size="12.5" text-anchor="end" fill="#2b2b2b">10<tspan dx="1.2" dy="-6.2" font-size="12.00">4</tspan></text>
<text x="82" y="614.4" font-size="12.5" text-anchor="end" fill="#2b2b2b">10<tspan dx="1.2" dy="-6.2" font-size="12.00">3</tspan></text>
<text x="82" y="666.8" font-size="12.5" text-anchor="end" fill="#2b2b2b">10<tspan dx="1.2" dy="-6.2" font-size="12.00">2</tspan></text>
<text x="48" y="602" font-size="12" text-anchor="middle" textLength="73" lengthAdjust="spacingAndGlyphs" transform="rotate(-90 48 602)" fill="#2b2b2b">Energy (keV)</text>
<rect x="1092" y="30" width="12" height="191" fill="url(#cm)"/>
<path d="M1104.5 30V221" stroke="#303030" stroke-width="1"/>
<path d="M1105 219.5h4M1105 215.5h4M1105 211.5h4M1105 207.5h4M1105 204.5h4M1105 202.5h8M1105 184.5h4M1105 174.5h4M1105 167.5h4M1105 162.5h4M1105 157.5h4M1105 153.5h4M1105 150.5h4M1105 147.5h4M1105 144.5h8M1105 127.5h4M1105 117.5h4M1105 110.5h4M1105 104.5h4M1105 99.5h4M1105 96.5h4M1105 92.5h4M1105 89.5h4M1105 87.5h8M1105 69.5h4M1105 59.5h4M1105 52.5h4M1105 46.5h4M1105 42.5h4M1105 38.5h4M1105 35.5h4M1105 32.5h4M1105 29.5h8" stroke="#303030" stroke-width="1" fill="none"/>
<text x="1116" y="36.8" font-size="12.5" text-anchor="start" fill="#2b2b2b">10<tspan dx="1.2" dy="-6.2" font-size="12.00">−9</tspan></text>
<text x="1116" y="94.4" font-size="12.5" text-anchor="start" fill="#2b2b2b">10<tspan dx="1.2" dy="-6.2" font-size="12.00">−10</tspan></text>
<text x="1116" y="152.0" font-size="12.5" text-anchor="start" fill="#2b2b2b">10<tspan dx="1.2" dy="-6.2" font-size="12.00">−11</tspan></text>
<text x="1116" y="209.6" font-size="12.5" text-anchor="start" fill="#2b2b2b">10<tspan dx="1.2" dy="-6.2" font-size="12.00">−12</tspan></text>
<text x="1166" y="124" font-size="12" text-anchor="middle" textLength="120" lengthAdjust="spacingAndGlyphs" transform="rotate(90 1166 124)" fill="#2b2b2b">pressure dyne/cm^2</text>
<rect x="1092" y="226" width="12" height="191" fill="url(#cm)"/>
<path d="M1104.5 226V417" stroke="#303030" stroke-width="1"/>
<path d="M1105 414.5h4M1105 410.5h4M1105 406.5h4M1105 402.5h4M1105 400.5h4M1105 397.5h8M1105 380.5h4M1105 370.5h4M1105 362.5h4M1105 357.5h4M1105 352.5h4M1105 348.5h4M1105 345.5h4M1105 342.5h4M1105 340.5h8M1105 322.5h4M1105 312.5h4M1105 305.5h4M1105 300.5h4M1105 295.5h4M1105 291.5h4M1105 288.5h4M1105 285.5h4M1105 282.5h8M1105 265.5h4M1105 255.5h4M1105 248.5h4M1105 242.5h4M1105 238.5h4M1105 234.5h4M1105 231.5h4M1105 228.5h4M1105 225.5h8" stroke="#303030" stroke-width="1" fill="none"/>
<text x="1116" y="232.8" font-size="12.5" text-anchor="start" fill="#2b2b2b">10<tspan dx="1.2" dy="-6.2" font-size="12.00">−9</tspan></text>
<text x="1116" y="290.1" font-size="12.5" text-anchor="start" fill="#2b2b2b">10<tspan dx="1.2" dy="-6.2" font-size="12.00">−10</tspan></text>
<text x="1116" y="347.4" font-size="12.5" text-anchor="start" fill="#2b2b2b">10<tspan dx="1.2" dy="-6.2" font-size="12.00">−11</tspan></text>
<text x="1116" y="404.7" font-size="12.5" text-anchor="start" fill="#2b2b2b">10<tspan dx="1.2" dy="-6.2" font-size="12.00">−12</tspan></text>
<text x="1166" y="320" font-size="12" text-anchor="middle" textLength="120" lengthAdjust="spacingAndGlyphs" transform="rotate(90 1166 320)" fill="#2b2b2b">pressure dyne/cm^2</text>
<rect x="1092" y="515" width="12" height="177" fill="url(#cm)"/>
<path d="M1104.5 515V692" stroke="#303030" stroke-width="1"/>
<path d="M1105 690.5h4M1105 671.5h8M1105 651.5h4M1105 632.5h8M1105 612.5h4M1105 593.5h8M1105 573.5h4M1105 554.5h8M1105 534.5h4M1105 515.5h8" stroke="#303030" stroke-width="1" fill="none"/>
<text x="1116" y="522.3" font-size="12.5" text-anchor="start" fill="#2b2b2b">10<tspan dx="1.2" dy="-6.2" font-size="12.00">4</tspan></text>
<text x="1116" y="561.3" font-size="12.5" text-anchor="start" fill="#2b2b2b">10<tspan dx="1.2" dy="-6.2" font-size="12.00">2</tspan></text>
<text x="1116" y="600.3" font-size="12.5" text-anchor="start" fill="#2b2b2b">10<tspan dx="1.2" dy="-6.2" font-size="12.00">0</tspan></text>
<text x="1116" y="639.3" font-size="12.5" text-anchor="start" fill="#2b2b2b">10<tspan dx="1.2" dy="-6.2" font-size="12.00">−2</tspan></text>
<text x="1116" y="678.3" font-size="12.5" text-anchor="start" fill="#2b2b2b">10<tspan dx="1.2" dy="-6.2" font-size="12.00">−4</tspan></text>
<text x="1159" y="601.5" font-size="12" text-anchor="middle" textLength="167" lengthAdjust="spacingAndGlyphs" transform="rotate(90 1159 601.5)" fill="#2b2b2b">intensity 1/(s cm^2 ster keV)</text>
<line x1="1091" y1="427.4" x2="1103" y2="431.5" stroke="#0000ff" stroke-width="1.3" shape-rendering="auto"/>
<text x="1107" y="433.9" font-size="12" text-anchor="start" textLength="53" lengthAdjust="spacingAndGlyphs" fill="#2b2b2b">CHEMS−P</text>
<line x1="1091" y1="444.29999999999995" x2="1103" y2="448.4" stroke="#ff0000" stroke-width="1.3" shape-rendering="auto"/>
<text x="1107" y="450.8" font-size="12" text-anchor="start" textLength="53" lengthAdjust="spacingAndGlyphs" fill="#2b2b2b">LEMMS−P</text>
<line x1="1091" y1="461.2" x2="1103" y2="465.3" stroke="#00ff00" stroke-width="1.3" shape-rendering="auto"/>
<text x="1107" y="467.7" font-size="12" text-anchor="start" textLength="53" lengthAdjust="spacingAndGlyphs" fill="#2b2b2b">CHEMS−O</text>
<clipPath id="oc1"><rect x="215" y="802" width="152" height="149"/></clipPath>
<path d="M207 813.5h8M207 834.5h8M207 855.5h8M207 876.5h8M207 897.5h8M207 918.5h8M207 939.5h8M211 803.5h4M211 824.5h4M211 845.5h4M211 866.5h4M211 887.5h4M211 908.5h4M211 929.5h4M211 950.5h4M237.5 951v8M291.5 951v8M344.5 951v8M216.5 951v4M226.5 951v4M248.5 951v4M259.5 951v4M269.5 951v4M280.5 951v4M302.5 951v4M312.5 951v4M323.5 951v4M334.5 951v4M355.5 951v4M366.5 951v4" stroke="#303030" stroke-width="1" fill="none"/>
<rect x="215.5" y="802.5" width="151" height="148" fill="none" stroke="#303030" stroke-width="1"/>
<text x="202" y="818.3" font-size="12.5" text-anchor="end" fill="#2b2b2b">−60.</text>
<text x="202" y="839.3" font-size="12.5" text-anchor="end" fill="#2b2b2b">−40.</text>
<text x="202" y="860.3" font-size="12.5" text-anchor="end" fill="#2b2b2b">−20.</text>
<text x="202" y="881.3" font-size="12.5" text-anchor="end" fill="#2b2b2b">0.</text>
<text x="202" y="902.3" font-size="12.5" text-anchor="end" fill="#2b2b2b">20.</text>
<text x="202" y="923.3" font-size="12.5" text-anchor="end" fill="#2b2b2b">40.</text>
<text x="202" y="944.3" font-size="12.5" text-anchor="end" fill="#2b2b2b">60.</text>
<text x="237.7" y="974" font-size="12.5" text-anchor="middle" fill="#2b2b2b">50.</text>
<text x="291.3" y="974" font-size="12.5" text-anchor="middle" fill="#2b2b2b">0.</text>
<text x="344.9" y="974" font-size="12.5" text-anchor="middle" fill="#2b2b2b">−50.</text>
<text x="166" y="876.9" font-size="12" text-anchor="middle" transform="rotate(-90 166 876.9)" fill="#2b2b2b">KSM−Y</text>
<text x="291.0" y="992" font-size="12" text-anchor="middle" fill="#2b2b2b">KSM−X</text>
<path d="M304.6 798.1L301.2 800.8L297.9 803.4L294.8 806.0L291.8 808.6L288.8 811.3L286.0 813.9L283.3 816.5L280.7 819.1L278.3 821.8L275.9 824.4L273.7 827.0L271.6 829.6L269.6 832.3L267.7 834.9L265.9 837.5L264.2 840.1L262.7 842.8L261.3 845.4L259.9 848.0L258.7 850.6L257.6 853.3L256.7 855.9L255.8 858.5L255.1 861.1L254.4 863.8L253.9 866.4L253.5 869.0L253.2 871.6L253.1 874.3L253.0 876.9L253.1 879.5L253.2 882.1L253.5 884.8L253.9 887.4L254.4 890.0L255.1 892.6L255.8 895.3L256.7 897.9L257.6 900.5L258.7 903.1L259.9 905.8L261.3 908.4L262.7 911.0L264.2 913.6L265.9 916.3L267.7 918.9L269.6 921.5L271.6 924.1L273.7 926.8L275.9 929.4L278.3 932.0L280.7 934.6L283.3 937.3L286.0 939.9L288.8 942.5L291.8 945.1L294.8 947.8L297.9 950.4L301.2 953.0L304.6 955.6" stroke="#0000ff" stroke-width="1.2" fill="none" stroke-dasharray="2.2 1.6" clip-path="url(#oc1)" shape-rendering="geometricPrecision"/>
<path d="M367.0 798.1L360.2 800.8L353.6 803.4L347.3 806.0L341.2 808.6L335.3 811.3L329.6 813.9L324.2 816.5L319.0 819.1L314.1 821.8L309.3 824.4L304.8 827.0L300.6 829.6L296.5 832.3L292.7 834.9L289.1 837.5L285.8 840.1L282.7 842.8L279.8 845.4L277.1 848.0L274.7 850.6L272.5 853.3L270.6 855.9L268.8 858.5L267.3 861.1L266.1 863.8L265.0 866.4L264.2 869.0L263.6 871.6L263.3 874.3L263.2 876.9L263.3 879.5L263.6 882.1L264.2 884.8L265.0 887.4L266.1 890.0L267.3 892.6L268.8 895.3L270.6 897.9L272.5 900.5L274.7 903.1L277.1 905.8L279.8 908.4L282.7 911.0L285.8 913.6L289.1 916.3L292.7 918.9L296.5 921.5L300.6 924.1L304.8 926.8L309.3 929.4L314.1 932.0L319.0 934.6L324.2 937.3L329.6 939.9L335.3 942.5L341.2 945.1L347.3 947.8L353.6 950.4L360.2 953.0L367.0 955.6" stroke="#7a3a00" stroke-width="1.2" fill="none" stroke-dasharray="2.2 1.6" clip-path="url(#oc1)" shape-rendering="geometricPrecision"/>
<circle cx="291.3" cy="876.9" r="21.4" fill="none" stroke="#000" stroke-width="1.3" shape-rendering="geometricPrecision"/>
<path d="M289.8 876.9l1.5 -1.5l1.5 1.5l-1.5 1.5z" fill="none" stroke="#000" stroke-width="0.8" shape-rendering="geometricPrecision"/>
<circle cx="302.7" cy="895.5" r="2.4" fill="#ff0000" shape-rendering="geometricPrecision"/>
<path d="M292 925.5Q300 931 304 927Q308 923 310 918" fill="none" stroke="#000" stroke-width="1.3" shape-rendering="geometricPrecision"/>
<circle cx="302.5" cy="927.2" r="2.4" fill="#0000ff" shape-rendering="geometricPrecision"/>
<path d="M296.5 923l8 8M296.5 931l8 -8" stroke="#ff3030" stroke-width="1.1" shape-rendering="geometricPrecision"/>
<clipPath id="oc2"><rect x="509" y="802" width="152" height="149"/></clipPath>
<path d="M501 803.5h8M501 821.5h8M501 840.5h8M501 858.5h8M501 877.5h8M501 895.5h8M501 913.5h8M501 932.5h8M501 950.5h8M505 948.5h4M505 946.5h4M505 945.5h4M505 943.5h4M505 941.5h4M505 939.5h4M505 937.5h4M505 935.5h4M505 934.5h4M505 930.5h4M505 928.5h4M505 926.5h4M505 924.5h4M505 923.5h4M505 921.5h4M505 919.5h4M505 917.5h4M505 915.5h4M505 911.5h4M505 910.5h4M505 908.5h4M505 906.5h4M505 904.5h4M505 902.5h4M505 900.5h4M505 899.5h4M505 897.5h4M505 893.5h4M505 891.5h4M505 889.5h4M505 888.5h4M505 886.5h4M505 884.5h4M505 882.5h4M505 880.5h4M505 878.5h4M505 875.5h4M505 873.5h4M505 871.5h4M505 869.5h4M505 867.5h4M505 865.5h4M505 864.5h4M505 862.5h4M505 860.5h4M505 856.5h4M505 854.5h4M505 853.5h4M505 851.5h4M505 849.5h4M505 847.5h4M505 845.5h4M505 843.5h4M505 842.5h4M505 838.5h4M505 836.5h4M505 834.5h4M505 832.5h4M505 831.5h4M505 829.5h4M505 827.5h4M505 825.5h4M505 823.5h4M505 819.5h4M505 818.5h4M505 816.5h4M505 814.5h4M505 812.5h4M505 810.5h4M505 808.5h4M505 807.5h4M505 805.5h4M510.5 951v8M547.5 951v8M585.5 951v8M622.5 951v8M660.5 951v8M529.5 951v4M566.5 951v4M604.5 951v4M641.5 951v4" stroke="#303030" stroke-width="1" fill="none"/>
<rect x="509.5" y="802.5" width="151" height="148" fill="none" stroke="#303030" stroke-width="1"/>
<text x="496" y="807.8" font-size="12.5" text-anchor="end" fill="#2b2b2b">40.</text>
<text x="496" y="826.2" font-size="12.5" text-anchor="end" fill="#2b2b2b">30.</text>
<text x="496" y="844.6" font-size="12.5" text-anchor="end" fill="#2b2b2b">20.</text>
<text x="496" y="863.0" font-size="12.5" text-anchor="end" fill="#2b2b2b">10.</text>
<text x="496" y="881.4" font-size="12.5" text-anchor="end" fill="#2b2b2b">0.</text>
<text x="496" y="899.8" font-size="12.5" text-anchor="end" fill="#2b2b2b">−10.</text>
<text x="496" y="918.2" font-size="12.5" text-anchor="end" fill="#2b2b2b">−20.</text>
<text x="496" y="936.6" font-size="12.5" text-anchor="end" fill="#2b2b2b">−30.</text>
<text x="496" y="955.0" font-size="12.5" text-anchor="end" fill="#2b2b2b">−40.</text>
<text x="510.4" y="974" font-size="12.5" text-anchor="middle" fill="#2b2b2b">40.</text>
<text x="547.9" y="974" font-size="12.5" text-anchor="middle" fill="#2b2b2b">20.</text>
<text x="585.4" y="974" font-size="12.5" text-anchor="middle" fill="#2b2b2b">0.</text>
<text x="622.9" y="974" font-size="12.5" text-anchor="middle" fill="#2b2b2b">−20.</text>
<text x="660.4" y="974" font-size="12.5" text-anchor="middle" fill="#2b2b2b">−40.</text>
<text x="460" y="877.0" font-size="12" text-anchor="middle" transform="rotate(-90 460 877.0)" fill="#2b2b2b">KSM−Z</text>
<text x="585.0" y="992" font-size="12" text-anchor="middle" fill="#2b2b2b">KSM−X</text>
<path d="M549.2 959.8L547.3 957.0L545.4 954.3L543.6 951.5L541.8 948.8L540.2 946.0L538.5 943.2L537.0 940.5L535.5 937.7L534.1 935.0L532.8 932.2L531.5 929.4L530.2 926.7L529.1 923.9L528.0 921.2L527.0 918.4L526.0 915.6L525.1 912.9L524.3 910.1L523.6 907.4L522.9 904.6L522.3 901.8L521.7 899.1L521.2 896.3L520.8 893.6L520.4 890.8L520.1 888.0L519.9 885.3L519.7 882.5L519.6 879.8L519.6 877.0L519.6 874.2L519.7 871.5L519.9 868.7L520.1 866.0L520.4 863.2L520.8 860.4L521.2 857.7L521.7 854.9L522.3 852.2L522.9 849.4L523.6 846.6L524.3 843.9L525.1 841.1L526.0 838.4L527.0 835.6L528.0 832.8L529.1 830.1L530.2 827.3L531.5 824.6L532.8 821.8L534.1 819.0L535.5 816.3L537.0 813.5L538.5 810.8L540.2 808.0L541.8 805.2L543.6 802.5L545.4 799.7L547.3 797.0L549.2 794.2" stroke="#0000ff" stroke-width="1.2" fill="none" stroke-dasharray="2.2 1.6" clip-path="url(#oc2)" shape-rendering="geometricPrecision"/>
<path d="M587.3 959.8L584.0 957.0L580.7 954.3L577.6 951.5L574.6 948.8L571.7 946.0L568.9 943.2L566.3 940.5L563.7 937.7L561.3 935.0L559.0 932.2L556.7 929.4L554.6 926.7L552.7 923.9L550.8 921.2L549.0 918.4L547.4 915.6L545.9 912.9L544.4 910.1L543.1 907.4L541.9 904.6L540.9 901.8L539.9 899.1L539.1 896.3L538.3 893.6L537.7 890.8L537.2 888.0L536.8 885.3L536.5 882.5L536.3 879.8L536.3 877.0L536.3 874.2L536.5 871.5L536.8 868.7L537.2 866.0L537.7 863.2L538.3 860.4L539.1 857.7L539.9 854.9L540.9 852.2L541.9 849.4L543.1 846.6L544.4 843.9L545.9 841.1L547.4 838.4L549.0 835.6L550.8 832.8L552.7 830.1L554.6 827.3L556.7 824.6L559.0 821.8L561.3 819.0L563.7 816.3L566.3 813.5L568.9 810.8L571.7 808.0L574.6 805.2L577.6 802.5L580.7 799.7L584.0 797.0L587.3 794.2" stroke="#7a3a00" stroke-width="1.2" fill="none" stroke-dasharray="2.2 1.6" clip-path="url(#oc2)" shape-rendering="geometricPrecision"/>
<path d="M548.5 881L625 872.5" stroke="#000" stroke-width="2" shape-rendering="geometricPrecision"/>
<path d="M585 877L590 874.5L603 874L608 876L620 874.8M590 877.5L602 879L618 876.5" stroke="#000" stroke-width="1" fill="none" shape-rendering="geometricPrecision"/>
<circle cx="605" cy="874.5" r="2.6" fill="#ff0000" shape-rendering="geometricPrecision"/>
<circle cx="605.5" cy="878.5" r="2.6" fill="#0000ff" shape-rendering="geometricPrecision"/>
<path d="M598 873l8 8M598 881l8 -8" stroke="#ff3030" stroke-width="1.1" shape-rendering="geometricPrecision"/>
<clipPath id="oc3"><rect x="803" y="802" width="152" height="149"/></clipPath>
<path d="M795 813.5h8M795 834.5h8M795 855.5h8M795 876.5h8M795 897.5h8M795 918.5h8M795 939.5h8M799 803.5h4M799 824.5h4M799 845.5h4M799 866.5h4M799 887.5h4M799 908.5h4M799 929.5h4M799 950.5h4M824.5 951v8M878.5 951v8M932.5 951v8M803.5 951v4M814.5 951v4M835.5 951v4M846.5 951v4M857.5 951v4M868.5 951v4M889.5 951v4M900.5 951v4M911.5 951v4M922.5 951v4M943.5 951v4M954.5 951v4" stroke="#303030" stroke-width="1" fill="none"/>
<rect x="803.5" y="802.5" width="151" height="148" fill="none" stroke="#303030" stroke-width="1"/>
<text x="790" y="818.3" font-size="12.5" text-anchor="end" fill="#2b2b2b">60.</text>
<text x="790" y="839.3" font-size="12.5" text-anchor="end" fill="#2b2b2b">40.</text>
<text x="790" y="860.3" font-size="12.5" text-anchor="end" fill="#2b2b2b">20.</text>
<text x="790" y="881.3" font-size="12.5" text-anchor="end" fill="#2b2b2b">0.</text>
<text x="790" y="902.3" font-size="12.5" text-anchor="end" fill="#2b2b2b">−20.</text>
<text x="790" y="923.3" font-size="12.5" text-anchor="end" fill="#2b2b2b">−40.</text>
<text x="790" y="944.3" font-size="12.5" text-anchor="end" fill="#2b2b2b">−60.</text>
<text x="825.0" y="974" font-size="12.5" text-anchor="middle" fill="#2b2b2b">−50.</text>
<text x="878.9" y="974" font-size="12.5" text-anchor="middle" fill="#2b2b2b">0.</text>
<text x="932.8" y="974" font-size="12.5" text-anchor="middle" fill="#2b2b2b">50.</text>
<text x="754" y="876.9" font-size="12" text-anchor="middle" transform="rotate(-90 754 876.9)" fill="#2b2b2b">KSM−Z</text>
<text x="879.0" y="992" font-size="12" text-anchor="middle" fill="#2b2b2b">KSM−Y</text>
<ellipse cx="878.9" cy="876.9" rx="78.7" ry="76.7" fill="none" stroke="#0000ff" stroke-width="1.2" stroke-dasharray="2.2 1.6" clip-path="url(#oc3)" shape-rendering="geometricPrecision"/>
<ellipse cx="878.9" cy="876.9" rx="53.4" ry="52.5" fill="none" stroke="#7a3a00" stroke-width="1.2" stroke-dasharray="2.2 1.6" shape-rendering="geometricPrecision"/>
<ellipse cx="880.2" cy="877" rx="21.6" ry="2.4" fill="none" stroke="#000" stroke-width="1.6" shape-rendering="geometricPrecision"/>
<path d="M877.4 876.9l1.5 -1.5l1.5 1.5l-1.5 1.5z" fill="none" stroke="#000" stroke-width="0.8" shape-rendering="geometricPrecision"/>
<circle cx="898.3" cy="875.5" r="2.5" fill="#ff0000" shape-rendering="geometricPrecision"/>
<path d="M921 876L931 877.8" stroke="#000" stroke-width="1.6" shape-rendering="geometricPrecision"/>
<circle cx="930.6" cy="877.4" r="2.3" fill="#0000ff" shape-rendering="geometricPrecision"/>
<path d="M926.3 873l8.6 8.6M926.3 881.6l8.6 -8.6" stroke="#ff3030" stroke-width="1.1" shape-rendering="geometricPrecision"/>
</svg></body></html>
